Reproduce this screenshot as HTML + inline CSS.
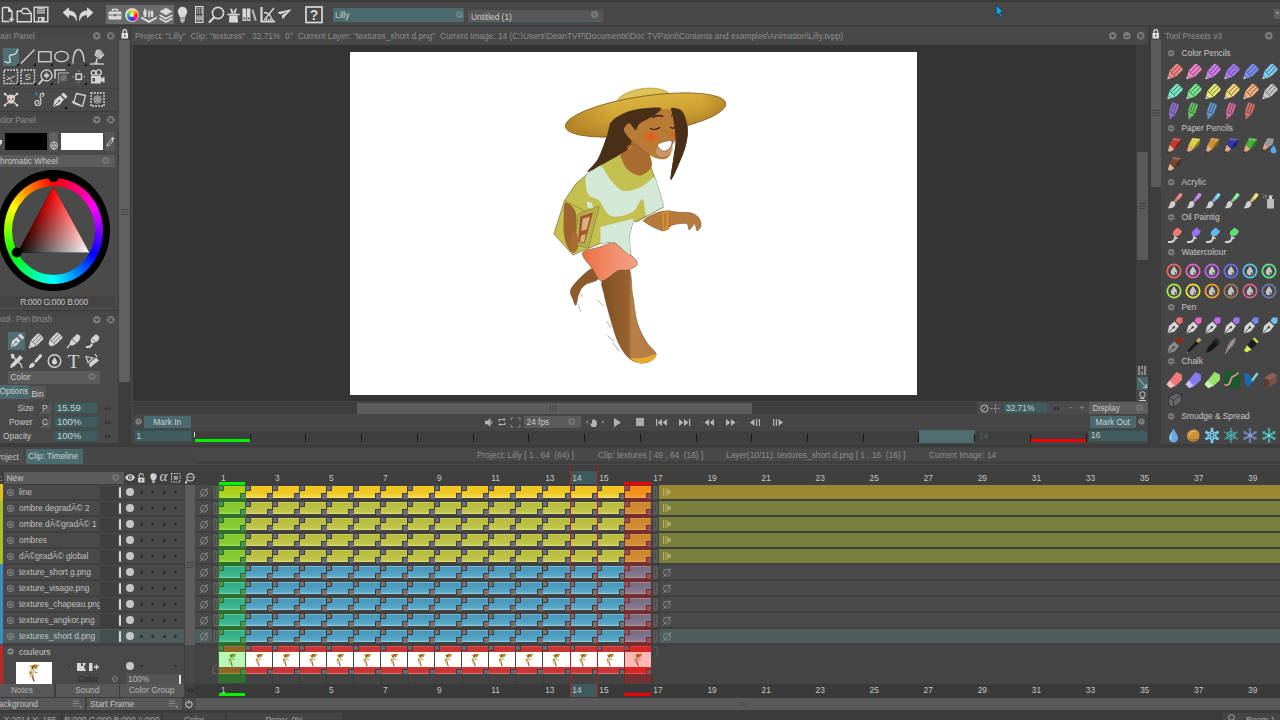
<!DOCTYPE html>
<html lang="en"><head><meta charset="utf-8"><title>TVPaint Animation - Lilly</title>
<style>
*{box-sizing:border-box;margin:0;padding:0}
html,body{width:1280px;height:720px;overflow:hidden;background:#474747;}
body{position:relative;font-family:"Liberation Sans",sans-serif;font-size:9px;color:#c4c4c4;line-height:1}
.a{position:absolute}
.t{position:absolute;white-space:nowrap;font-size:8.35px;line-height:11px;color:#c6c6c6}
.g{color:#8c8c8c}
svg{position:absolute;overflow:visible}
.c{position:absolute;width:26.100px;height:12.300px}
.cy{background:linear-gradient(#f7d23a 0,#f2c31c 1.500px,#efc824 60%,#f3d648 90%,#fbea78 100%)}
.co{background:linear-gradient(#dcdc5c 0,#b6bb3e 1.500px,#c2c64c 85%,#e6e87e 100%)}
.cb{background:linear-gradient(#92d2ea 0,#4896b8 1.500px,#58a8c8 85%,#a2daee 100%)}
.n1,.n2{position:absolute;display:block;width:5.500px;height:5.500px;border:1px solid #3d3d3d;background:#6e6b78}
.cb .n1,.cb .n2{background:#77706e}
.n1{left:-.500px;top:-.500px;border-left:0;border-top:0}.n2{right:-.500px;bottom:-.500px;border-right:0;border-bottom:0}
.cc{position:absolute;top:646.200px;width:26.100px;height:27.600px;background:linear-gradient(#e46a6a 0,#c93434 1.200px,#c93434 5.500px,#fff 5.500px,#fff 21.500px,#c93434 21.500px,#c93434 26.400px,#e88 100%)}
.cc .n1,.cc .n2{background:#6a6a70}
</style></head>
<body>
<!-- top toolbar -->
<div class="a" style="left:0px;top:0px;width:1280px;height:27px;background:#484848;"></div>
<div class="a" style="left:0px;top:0px;width:1280px;height:2px;background:#3b3b3b;"></div>
<div class="a" style="left:0px;top:25px;width:1280px;height:2px;background:#3d3d3d;"></div>
<div class="a" style="left:106px;top:5px;width:68px;height:19px;background:#6a6a6a;"></div>
<svg style="left:1px;top:6px" width="13" height="17" viewBox="0 0 13 17"><path d="M1.5 1.5h6l3.5 4v6.5M8.5 15.500h-7v-14" fill="none" stroke="#d9d9d9" stroke-width="1.4"/><path d="M7 1.500v4.500h4z" fill="#d9d9d9"/><path d="M10.5 11v5M8 13.500h5" stroke="#d9d9d9" stroke-width="1.6"/></svg>
<svg style="left:16px;top:7px" width="16" height="16" viewBox="0 0 16 16"><path d="M1.200 14.800v-10.600h3.800l2.300-2.700h3.700l4.300 5v8.300z" fill="none" stroke="#d9d9d9" stroke-width="1.400" stroke-linejoin="miter"/><path d="M5 4.200l2.200 2.500h7.500" fill="none" stroke="#d9d9d9" stroke-width="1.200"/></svg>
<svg style="left:33px;top:6px" width="16" height="17" viewBox="0 0 16 17"><rect x="1.2" y="1.2" width="13.600" height="14.600" fill="none" stroke="#d9d9d9" stroke-width="1.4"/><rect x="4" y="2" width="8" height="5.500" fill="#d9d9d9" opacity=".8"/><path d="M4 3.500h8M4 5.500h8" stroke="#555" stroke-width=".7"/><rect x="5" y="11" width="6.500" height="5" fill="#d9d9d9"/><rect x="6.200" y="12" width="2" height="3" fill="#484848"/></svg>
<svg style="left:62px;top:7px" width="16" height="15" viewBox="0 0 16 15"><path d="M.6 5.500L7 .3v3.200c5.500 0 8.800 4 7.600 11.300c-1.300-4.800-3.600-6.800-7.600-6.600v3.300z" fill="#d9d9d9"/></svg>
<svg style="left:78px;top:7px" width="16" height="15" viewBox="0 0 16 15"><path d="M.6 5.500L7 .3v3.200c5.500 0 8.800 4 7.600 11.300c-1.300-4.800-3.600-6.800-7.600-6.600v3.300z" fill="#d9d9d9" transform="translate(16,0) scale(-1,1)"/></svg>
<svg style="left:108px;top:8px" width="14" height="12" viewBox="0 0 14 12"><rect x=".5" y="3.500" width="13" height="8" rx="1" fill="#d9d9d9"/><path d="M4.500 3.500v-2h5v2" fill="none" stroke="#d9d9d9" stroke-width="1.300"/><path d="M.5 7h13" stroke="#6a6a6a" stroke-width="1"/><rect x="6" y="6" width="2" height="2.400" fill="#6a6a6a"/></svg>
<div class="a" style="left:125px;top:8px;width:14px;height:14px;border-radius:50%;background:#d9d9d9"></div>
<div class="a" style="left:126.500px;top:9.500px;width:11px;height:11px;border-radius:50%;background:conic-gradient(#ffe000,#ff8a00,#ff2020,#d820b0,#6a20c0,#2060e0,#20c090,#80e020,#ffe000)"></div>
<div class="a" style="left:130px;top:13px;width:4px;height:4px;border-radius:50%;background:#eee"></div>
<svg style="left:141px;top:7px" width="16" height="16" viewBox="0 0 16 16"><path d="M4 1l1.800 4l-.6 5h-2.400l-.6-5zM11 2.500l1.500 3.500l-.5 4h-2l-.6-4zM7.300 3.500h1.600v7h-1.600z" fill="#d9d9d9"/><path d="M0 9.500l8 4l8-4v2l-8 4.500l-8-4.500z" fill="#d9d9d9"/></svg>
<svg style="left:159px;top:7px" width="14" height="16" viewBox="0 0 14 16"><path d="M7 .8l6.500 3.700l-6.500 3.700l-6.500-3.700z" fill="#d9d9d9"/><path d="M.5 8l6.500 3.700l6.500-3.700M.5 11.300l6.500 3.700l6.500-3.700" fill="none" stroke="#d9d9d9" stroke-width="1.700"/></svg>
<svg style="left:177px;top:6px" width="11" height="17" viewBox="0 0 11 17"><path d="M5.500 .8a4.700 4.700 0 0 1 4.700 4.700c0 2.500-1.800 3.300-2 6h-5.400c-.2-2.700-2-3.500-2-6a4.700 4.700 0 0 1 4.700-4.700z" fill="#d9d9d9"/><path d="M3 12.800h5M3.300 14.600h4.400" stroke="#d9d9d9" stroke-width="1.300"/><rect x="4.300" y="15.500" width="2.400" height="1.200" fill="#d9d9d9"/></svg>
<svg style="left:195px;top:6px" width="9" height="17" viewBox="0 0 9 17"><rect x=".6" y=".6" width="7.300" height="15.800" fill="none" stroke="#d9d9d9" stroke-width="1.200"/><path d="M2 2.800h5M2 4.800h5M2 6.800h5" stroke="#d9d9d9" stroke-width="1.100" stroke-dasharray="1.100 .8"/><circle cx="4.250" cy="12" r="2.300" fill="none" stroke="#d9d9d9" stroke-width="1"/><path d="M4.250 10.500v3M2.800 12h3" stroke="#d9d9d9" stroke-width=".8"/></svg>
<svg style="left:208px;top:6px" width="17" height="17" viewBox="0 0 17 17"><circle cx="10" cy="7" r="5.600" fill="none" stroke="#d9d9d9" stroke-width="1.600"/><path d="M6 11.500l-4.500 4.500" stroke="#d9d9d9" stroke-width="2.200" stroke-linecap="round"/></svg>
<svg style="left:227px;top:7px" width="13" height="16" viewBox="0 0 13 16"><path d="M2.500 8.500h8l.6 7h-9.200z" fill="#d9d9d9"/><path d="M.3 7.500h12.400" stroke="#d9d9d9" stroke-width="1.500"/><path d="M4.500 6.500l-1.500-5.500l2.500 1.500l1 4zM8.500 6.500l1.500-5.500l-2.500 1.500l-1 4z" fill="#d9d9d9"/></svg>
<svg style="left:242px;top:8px" width="16" height="14" viewBox="0 0 16 14"><rect x=".5" y=".5" width="3.600" height="12.500" fill="#d9d9d9"/><rect x="4.800" y=".5" width="3.600" height="12.500" fill="#d9d9d9"/><path d="M9.500 2l2-.6l3.300 11l-2 .6z" fill="#d9d9d9" opacity=".75"/><rect x="1.300" y="9.500" width="2" height="2" fill="#555"/><rect x="5.600" y="9.500" width="2" height="2" fill="#555"/></svg>
<svg style="left:260px;top:6px" width="16" height="17" viewBox="0 0 16 17"><path d="M1.500 1v14.500h13.500" fill="none" stroke="#d9d9d9" stroke-width="2.200"/><path d="M4 6.500c4 0 7.500 3 7.500 7" fill="none" stroke="#d9d9d9" stroke-width="1.300"/><path d="M5 13l9-11" stroke="#d9d9d9" stroke-width="1.400"/><path d="M4 13.500h10" stroke="#d9d9d9" stroke-width="1.500" stroke-dasharray="1.200 .8"/></svg>
<svg style="left:277px;top:9px" width="15" height="11" viewBox="0 0 15 11"><path d="M.3 3.200l14.400-2.900l-9.200 9.700l-.5-3.800l6-4l-7.800 3.200z" fill="#d9d9d9"/><path d="M5.500 10l2.500-2l-2.700-1.500z" fill="#d9d9d9" opacity=".7"/></svg>
<svg style="left:305px;top:6px" width="18" height="17" viewBox="0 0 18 17"><rect x="1" y="1" width="16" height="15.500" fill="none" stroke="#d9d9d9" stroke-width="1.700"/><text x="9" y="14" font-family="Liberation Sans, sans-serif" font-weight="bold" font-size="14" fill="#d9d9d9" text-anchor="middle">?</text></svg>
<div class="a" style="left:332.5px;top:8px;width:131.5px;height:13.5px;background:#4b6a6d;"></div>
<div class="t" style="left:335px;top:10px;color:#c9d2d2;">Lilly</div>
<div class="a" style="left:468px;top:10px;width:135px;height:11.5px;background:#575757;border-bottom:1px solid #4b6a6d"></div>
<div class="t" style="left:471px;top:11.5px;color:#cfcfcf;">Untitled (1)</div>
<svg style="left:455.5px;top:10.5px" width="7" height="7" viewBox="0 0 7 7"><circle cx="3.500" cy="3.500" r="3.500" fill="#6e8587"/><path d="M2 2l3 3M5 2l-3 3" stroke="#4b6a6d" stroke-width="1"/></svg>
<svg style="left:591.0px;top:10.5px" width="7" height="7" viewBox="0 0 7 7"><circle cx="3.500" cy="3.500" r="3.500" fill="#7b7b7b"/><path d="M2 2l3 3M5 2l-3 3" stroke="#575757" stroke-width="1"/></svg>
<div class="a" style="left:1274px;top:8.5px;width:6px;height:10.5px;background:#5e5e5e;"></div>
<svg style="left:1275px;top:12px" width="5" height="4" viewBox="0 0 5 4"><path d="M0 0h5l-2.500 3z" fill="#8a8a8a"/></svg>
<svg style="left:995px;top:4px" width="10" height="15" viewBox="0 0 10 15"><path d="M1.200 1l7.300 7.300h-3.200l1.800 4.200l-1.700.8l-1.800-4.300l-2.400 2.200z" fill="#19a7e6" stroke="#0d3b52" stroke-width=".8"/></svg>
<!-- left panel -->
<div class="a" style="left:0px;top:27px;width:118.5px;height:420px;background:#4a4a4a;"></div>
<div class="a" style="left:118.5px;top:27px;width:11.5px;height:420px;background:#484848;"></div>
<div class="a" style="left:119px;top:40px;width:11px;height:342px;background:#5f5f5f;"></div>
<div class="a" style="left:119px;top:382px;width:11px;height:65px;background:#3d3d3d;"></div>
<div class="a" style="left:130px;top:27px;width:1px;height:420px;background:#3a3a3a;"></div>
<div class="a" style="left:131px;top:27px;width:1.5px;height:420px;background:#464646;"></div>
<div class="a" style="left:118px;top:27px;width:1px;height:420px;background:#3e3e3e;"></div>
<div class="a" style="left:0px;top:27px;width:118.5px;height:18px;background:linear-gradient(#464646,#4b4b4b);border-top:1px solid #3c3c3c"></div><div class="t" style="left:0px;top:30.5px;color:#8e8e8e;font-size:8.35px;">ain Panel</div>
<svg style="left:93.2px;top:31.7px" width="7.6" height="7.6" viewBox="0 0 7.6 7.6"><circle cx="3.8" cy="3.8" r="3.8" fill="#7a7a7a"/><path d="M1.5 2.8h4.600l-2.300 2.800z" fill="#474747"/></svg>
<svg style="left:107.2px;top:31.7px" width="7.6" height="7.6" viewBox="0 0 7.6 7.6"><circle cx="3.8" cy="3.8" r="3.8" fill="#7a7a7a"/><path d="M1.9999999999999998 1.9999999999999998l3.600 3.600M5.6 1.9999999999999998l-3.600 3.600" stroke="#474747" stroke-width="1.200"/></svg>
<svg style="left:120.5px;top:29px" width="8" height="10" viewBox="0 0 8 10"><rect x=".5" y="4" width="6.500" height="5.500" fill="#e0e0e0"/><path d="M2 4v-1.500a1.800 1.800 0 0 1 3.600 0v1.500" fill="none" stroke="#e0e0e0" stroke-width="1.200"/><rect x="3.200" y="5.500" width="1.200" height="2.200" fill="#444"/></svg>
<svg style="left:121px;top:208.5px" width="8" height="7" viewBox="0 0 8 7"><path d="M0 .5h8M0 3h8M0 5.500h8" stroke="#454545" stroke-width=".8"/></svg>
<div class="a" style="left:2.5px;top:48px;width:16.5px;height:17.5px;background:#4f6f72;"></div>
<svg style="left:3px;top:48px" width="16" height="17" viewBox="0 0 16 17"><path d="M2 13.500c2.500 2 5.500 1.500 5-1.500c-.5-2.500-1.500-4 .5-5c2-.8 3.500.3 5-1.200c1.200-1.200 1.700-2.500 2-4" fill="none" stroke="#d4d4d4" stroke-width="1.500" stroke-linecap="round"/></svg>
<svg style="left:20px;top:48px" width="16" height="17" viewBox="0 0 16 17"><path d="M1 15.500l13.500-14" stroke="#d4d4d4" stroke-width="1.300"/></svg>
<svg style="left:38px;top:51px" width="14" height="12" viewBox="0 0 14 12"><rect x=".7" y=".7" width="12.300" height="10" fill="none" stroke="#d4d4d4" stroke-width="1.300"/></svg>
<svg style="left:54px;top:50px" width="16" height="13" viewBox="0 0 16 13"><ellipse cx="7.600" cy="6.500" rx="6.800" ry="5.200" fill="none" stroke="#d4d4d4" stroke-width="1.300"/></svg>
<svg style="left:71px;top:48px" width="16" height="17" viewBox="0 0 16 17"><path d="M1.800 14c.5-8 3-12.500 5.700-12.500s5.200 4.500 5.700 12.500" fill="none" stroke="#d4d4d4" stroke-width="1.300"/><circle cx="1.800" cy="14.800" r="1" fill="none" stroke="#d4d4d4" stroke-width=".6"/><circle cx="7" cy="1.500" r=".9" fill="#8aa"/></svg>
<svg style="left:90px;top:48px" width="15" height="18" viewBox="0 0 15 18"><path d="M6.200 2l3.800-.6l4.400 5.600l-4.400 4.400l-5.600-4.400z" fill="#d4d4d4"/><path d="M7 3.500l5 5M9 2.500l4 4.500M5.500 5.500l5 4.500" stroke="#4a4a4a" stroke-width=".6"/><path d="M6.900 10.500l-.7 4.500" stroke="#d4d4d4" stroke-width="1.500"/><path d="M0 16h14" stroke="#d4d4d4" stroke-width="1.300"/><path d="M3.500 15.500c.5-1.800 4.500-1.800 5 0z" fill="#d4d4d4"/></svg>
<svg style="left:16px;top:63px" width="3" height="3" viewBox="0 0 3 3"><path d="M3 0v3h-3z" fill="#111"/></svg>
<svg style="left:33px;top:63px" width="3" height="3" viewBox="0 0 3 3"><path d="M3 0v3h-3z" fill="#111"/></svg>
<svg style="left:50px;top:63px" width="3" height="3" viewBox="0 0 3 3"><path d="M3 0v3h-3z" fill="#111"/></svg>
<svg style="left:67px;top:63px" width="3" height="3" viewBox="0 0 3 3"><path d="M3 0v3h-3z" fill="#111"/></svg>
<svg style="left:84px;top:63px" width="3" height="3" viewBox="0 0 3 3"><path d="M3 0v3h-3z" fill="#111"/></svg>
<svg style="left:3px;top:69px" width="16" height="16" viewBox="0 0 16 16"><rect x="1" y="1" width="13.5" height="13.5" fill="none" stroke="#d4d4d4" stroke-width="1.400" stroke-dasharray="2 1"/><path d="M3 11l9-4M4.500 7.500l5 5.500" stroke="#d4d4d4" stroke-width="1"/></svg>
<svg style="left:20px;top:69px" width="16" height="16" viewBox="0 0 16 16"><rect x="1" y="1" width="13.5" height="13.5" fill="none" stroke="#d4d4d4" stroke-width="1.400" stroke-dasharray="2 1"/><text x="7.800" y="11" font-family="Liberation Sans,sans-serif" font-size="9" fill="#d4d4d4" text-anchor="middle">S</text></svg>
<svg style="left:38px;top:69px" width="15" height="16" viewBox="0 0 15 16"><circle cx="8.500" cy="6.500" r="5.500" fill="none" stroke="#d4d4d4" stroke-width="1.300"/><path d="M8.500 3.800v5.400M5.800 6.500h5.400" stroke="#d4d4d4" stroke-width="1.800"/><path d="M4.500 10.800l-3.500 4" stroke="#d4d4d4" stroke-width="1.800" stroke-linecap="round"/></svg>
<svg style="left:54px;top:69px" width="16" height="16" viewBox="0 0 16 16"><path d="M1 9.500v-8.500h10.500" fill="none" stroke="#d4d4d4" stroke-width="1.500"/><path d="M4.500 14.500v-10.500h10.500" fill="none" stroke="#9a9a9a" stroke-width="1.300"/><rect x="6.500" y="6" width="6" height="6" fill="#777"/><path d="M6.500 6l6 6" stroke="#555" stroke-width=".8"/></svg>
<svg style="left:71px;top:69px" width="16" height="16" viewBox="0 0 16 16"><rect x="5" y="5" width="5.500" height="5.500" fill="none" stroke="#d4d4d4" stroke-width="1.400"/><path d="M7.750 .8l1.800 2h-3.600zM7.750 14.700l1.800-2h-3.600zM.8 7.750l2-1.800v3.600zM14.700 7.750l-2-1.800v3.600z" fill="#808080"/></svg>
<svg style="left:90px;top:69px" width="15" height="16" viewBox="0 0 15 16"><circle cx="3.500" cy="3.800" r="2.300" fill="none" stroke="#d4d4d4" stroke-width="1.300"/><circle cx="8.700" cy="3.500" r="2.600" fill="none" stroke="#d4d4d4" stroke-width="1.300"/><rect x="1" y="7" width="10" height="7.500" fill="#d4d4d4"/><path d="M11 9.500l3.500-2v6.500l-3.500-2z" fill="#d4d4d4"/><rect x="2.500" y="9" width="2.500" height="3.500" fill="#555"/></svg>
<svg style="left:16px;top:82px" width="3" height="3" viewBox="0 0 3 3"><path d="M3 0v3h-3z" fill="#111"/></svg>
<svg style="left:33px;top:82px" width="3" height="3" viewBox="0 0 3 3"><path d="M3 0v3h-3z" fill="#111"/></svg>
<svg style="left:50px;top:82px" width="3" height="3" viewBox="0 0 3 3"><path d="M3 0v3h-3z" fill="#111"/></svg>
<svg style="left:84px;top:82px" width="3" height="3" viewBox="0 0 3 3"><path d="M3 0v3h-3z" fill="#111"/></svg>
<div class="a" style="left:0px;top:88px;width:118.5px;height:1px;background:#444;"></div>
<svg style="left:3px;top:92px" width="16" height="16" viewBox="0 0 16 16"><path d="M2 2l12 11M14 2l-12 11" stroke="#d4d4d4" stroke-width="1.300"/><circle cx="2" cy="2" r="1.300" fill="#d4d4d4"/><circle cx="14" cy="2" r="1.300" fill="#d4d4d4"/><circle cx="2" cy="13.300" r="1.300" fill="#d4d4d4"/><circle cx="14" cy="13.300" r="1.300" fill="#d4d4d4"/><path d="M4 6.500a4 4 0 0 1 8 0c0 2-1 2.500-1.500 3v2h-5v-2c-.5-.5-1.500-1-1.500-3z" fill="#d4d4d4"/><circle cx="6.300" cy="7.300" r="1" fill="#e04040"/><circle cx="9.700" cy="7.300" r="1" fill="#e04040"/></svg>
<svg style="left:33px;top:92px" width="14" height="16" viewBox="0 0 14 16"><path d="M9.500 4.500c2.500-2 1-4-1-3c-2 1-1.500 3.500-1 5.500c.7 3 1 6.500-2.500 6.500c-3.500 0-4-4.500-1-5c2-.3 3 2.500 1 3" fill="none" stroke="#d4d4d4" stroke-width="1.200" stroke-linecap="round"/><circle cx="3.500" cy="1.800" r="1.200" fill="#3a8ec8"/></svg>
<svg style="left:52px;top:92px" width="16" height="16" viewBox="0 0 16 16"><path d="M1 15l1.500-7l5.500-4.500l4 4l-4.500 5.500z" fill="#d4d4d4"/><path d="M9 2.500l2.500-2l4 4l-2 2.500z" fill="#d4d4d4"/><path d="M1.500 14.500l5-5" stroke="#4c4c4c" stroke-width=".9"/><circle cx="7" cy="9" r="1" fill="#4c4c4c"/></svg>
<svg style="left:64px;top:106px" width="3" height="3" viewBox="0 0 3 3"><path d="M3 0v3h-3z" fill="#111"/></svg>
<svg style="left:71px;top:92px" width="16" height="16" viewBox="0 0 16 16"><path d="M5.500 1.500l9 2l-3 11l-9-3.500z" fill="none" stroke="#d4d4d4" stroke-width="1.300"/><path d="M1 9.500l8.500 4" stroke="#d4d4d4" stroke-width="1.600"/></svg>
<svg style="left:90px;top:92px" width="15" height="16" viewBox="0 0 15 16"><rect x="1" y="1" width="13" height="13" fill="none" stroke="#d4d4d4" stroke-width="1.400" stroke-dasharray="2 1"/><circle cx="7.500" cy="7.500" r="4.300" fill="#8a8a8a"/><path d="M4.500 4.500l6 6M10.500 4.500l-6 6" stroke="#a8a8a8" stroke-width="1"/></svg>
<div class="a" style="left:0px;top:111px;width:118.5px;height:18px;background:linear-gradient(#464646,#4b4b4b);border-top:1px solid #3c3c3c"></div><div class="t" style="left:0px;top:114.5px;color:#8e8e8e;font-size:8.35px;"><span style="letter-spacing:-.2px">olor Panel</span></div>
<svg style="left:93.2px;top:115.7px" width="7.6" height="7.6" viewBox="0 0 7.6 7.6"><circle cx="3.8" cy="3.8" r="3.8" fill="#7a7a7a"/><path d="M1.5 2.8h4.600l-2.300 2.800z" fill="#474747"/></svg>
<svg style="left:107.2px;top:115.7px" width="7.6" height="7.6" viewBox="0 0 7.6 7.6"><circle cx="3.8" cy="3.8" r="3.8" fill="#7a7a7a"/><path d="M1.9999999999999998 1.9999999999999998l3.600 3.600M5.6 1.9999999999999998l-3.600 3.600" stroke="#474747" stroke-width="1.200"/></svg>
<svg style="left:-1px;top:140px" width="4" height="6" viewBox="0 0 4 6"><path d="M0 0h3v3l-1.500 2.500z" fill="#d4d4d4"/></svg>
<div class="a" style="left:5px;top:133px;width:42px;height:17px;background:#000;"></div>
<div class="a" style="left:49px;top:132px;width:9px;height:19px;background:#5c5c5c;"></div>
<svg style="left:50px;top:133px" width="7" height="7" viewBox="0 0 7 7"><circle cx="3.500" cy="3.500" r="3.300" fill="#686868"/><path d="M1.500 2.800h4l-2 2.300z" fill="#585858"/></svg>
<svg style="left:49.5px;top:141px" width="8" height="9" viewBox="0 0 8 9"><ellipse cx="4" cy="4.500" rx="3.400" ry="3.600" fill="none" stroke="#d4d4d4" stroke-width=".9"/><path d="M4 .5v8" stroke="#d4d4d4" stroke-width=".9"/><path d="M1.300 4.500l1.700-1.500v3zM6.700 4.500l-1.700-1.500v3z" fill="#d4d4d4"/></svg>
<div class="a" style="left:61px;top:133px;width:42px;height:17px;background:#fff;"></div>
<div class="a" style="left:105px;top:132px;width:10px;height:19px;background:#585858;"></div>
<svg style="left:105.5px;top:136px" width="9" height="11" viewBox="0 0 9 11"><path d="M1 10l.5-2l4-4.500l1.500 1.500l-4 4.500z" fill="none" stroke="#d4d4d4" stroke-width=".9"/><path d="M5 2.500l1.500-1.800l2 2l-1.700 1.600z" fill="#d4d4d4"/></svg>
<div class="a" style="left:0px;top:155px;width:114.5px;height:11.5px;background:#5d5d5d;"></div>
<div class="t" style="left:0px;top:155.5px;color:#c8c8c8;font-size:8.35px;">hromatic Wheel</div>
<svg style="left:102.4px;top:156.9px" width="7.2" height="7.2" viewBox="0 0 7.2 7.2"><circle cx="3.6" cy="3.6" r="3.6" fill="#747474"/><path d="M1.3000000000000003 2.6h4.600l-2.300 2.800z" fill="#5d5d5d"/></svg>
<div class="a" style="left:-3.1000000000000014px;top:170.0px;width:113.200px;height:121.200px;border-radius:50%;background:#000"></div>
<div class="a" style="left:3.8999999999999986px;top:177.6px;width:99.200px;height:106px;border-radius:50%;background:conic-gradient(#ff0000,#ff00ff 16.700%,#0000ff 33.300%,#00ffff 50%,#00ff00 66.700%,#ffff00 83.300%,#ff0000)"></div>
<div class="a" style="left:12.0px;top:186.3px;width:83px;height:88.3500px;border-radius:50%;background:#4a4a4a"></div>
<svg style="left:0;top:0" width="118" height="300" viewBox="0 0 118 300"><defs>
<linearGradient id="tb" gradientUnits="userSpaceOnUse" x1="17.70" y1="252.60" x2="73.02" y2="222.59"><stop offset="0" stop-color="#000"/><stop offset="1" stop-color="#ff0000"/></linearGradient>
<linearGradient id="tw" gradientUnits="userSpaceOnUse" x1="33.98" y1="222.59" x2="89.30" y2="252.60"><stop offset="0" stop-color="#000"/><stop offset="1" stop-color="#00ffff"/></linearGradient></defs>
<g style="isolation:isolate"><path d="M53.5 186.6L17.700000000000003 252.6L89.3 252.6z" fill="url(#tb)"/><path d="M53.5 186.6L17.700000000000003 252.6L89.3 252.6z" fill="url(#tw)" style="mix-blend-mode:screen"/></g>
<circle cx="53.5" cy="177.200" r="5" fill="#000"/><circle cx="16.700" cy="252.500" r="5" fill="#000"/></svg>
<div class="a" style="left:0px;top:295.5px;width:114px;height:11.5px;background:#444;"></div>
<div class="t" style="left:0px;top:296.5px;color:#c2c2c2;font-size:8.35px;width:108px;text-align:center;letter-spacing:-.22px">R:000 G:000 B:000</div>
<div class="a" style="left:0px;top:310px;width:118.5px;height:18px;background:linear-gradient(#464646,#4b4b4b);border-top:1px solid #3c3c3c"></div><div class="t" style="left:0px;top:313.5px;color:#8e8e8e;font-size:8.35px;"><span style="letter-spacing:-.34px">ool : Pen Brush</span></div>
<svg style="left:93.2px;top:315.7px" width="7.6" height="7.6" viewBox="0 0 7.6 7.6"><circle cx="3.8" cy="3.8" r="3.8" fill="#7a7a7a"/><path d="M1.5 2.8h4.600l-2.300 2.800z" fill="#474747"/></svg>
<svg style="left:107.2px;top:315.7px" width="7.6" height="7.6" viewBox="0 0 7.6 7.6"><circle cx="3.8" cy="3.8" r="3.8" fill="#7a7a7a"/><path d="M1.9999999999999998 1.9999999999999998l3.600 3.600M5.6 1.9999999999999998l-3.600 3.600" stroke="#474747" stroke-width="1.200"/></svg>
<div class="a" style="left:8px;top:332px;width:16.5px;height:18px;background:#4f6f72;"></div>
<svg style="left:8.5px;top:333px" width="16" height="16" viewBox="0 0 16 16"><path d="M1.500 14.500l1.500-6.500l5-4l3.500 3.500l-4 5z" fill="#d4d4d4"/><path d="M9 2.500l2.300-2l4 4l-2 2.300z" fill="#d4d4d4"/><path d="M2 14l4.500-4.500" stroke="#4f6f72" stroke-width=".9"/><circle cx="7" cy="9" r="1" fill="#4f6f72"/></svg>
<svg style="left:28px;top:333px" width="16" height="16" viewBox="0 0 16 16"><path d="M0.50 15.50L1.25 12.33L3.65 14.68z" fill="#d4d4d4"/><path d="M1.46 12.12L2.97 7.24L9.29 0.78L11.05 0.40L15.35 4.60L15.01 6.37L8.70 12.84L3.86 14.46z" fill="#d4d4d4"/><path d="M5.50 8.32L12.17 1.49M7.56 10.33L14.23 3.51" stroke="#4a4a4a" stroke-width=".9" opacity=".85" fill="none"/><path d="M2.97 7.24L8.70 12.84" stroke="#4a4a4a" stroke-width=".9" opacity=".85" fill="none"/></svg>
<svg style="left:47px;top:332px" width="16" height="16" viewBox="0 0 16 16"><path d="M0 0" fill="#d4d4d4"/><path d="M1.46 12.12L2.97 7.24L9.29 0.78L11.05 0.40L15.35 4.60L15.01 6.37L8.70 12.84L3.86 14.46z" fill="#d4d4d4"/><path d="M5.50 8.32L12.17 1.49M7.56 10.33L14.23 3.51" stroke="#4a4a4a" stroke-width=".9" opacity=".85" fill="none"/><path d="M2.97 7.24L8.70 12.84" stroke="#4a4a4a" stroke-width=".9" opacity=".85" fill="none"/></svg>
<svg style="left:66px;top:333px" width="16" height="16" viewBox="0 0 16 16"><path d="M1 15l3.500-4" stroke="#d4d4d4" stroke-width="1.200"/><path d="M4 11.500c-1-2 1-5 4-7.500l3-3l3.500 2l-1 4c-2.500 3.500-6 5.500-8 5.500z" fill="#d4d4d4"/><path d="M6 6l4 4" stroke="#4a4a4a" stroke-width=".8"/></svg>
<svg style="left:85px;top:333px" width="16" height="16" viewBox="0 0 16 16"><path d="M6 9c-1-2 .5-4.500 3-6l2-2l3.500 3l-1 3c-2 2.500-5 3-6.500 3z" fill="#d4d4d4"/><path d="M7 10.500c-.5 3-2.500 4-6 3.500" fill="none" stroke="#d4d4d4" stroke-width="2"/><path d="M7.500 6l3.500 3.500" stroke="#4a4a4a" stroke-width=".8"/></svg>
<svg style="left:8.5px;top:353px" width="16" height="16" viewBox="0 0 16 16"><path d="M1 15l1-3.500l9-9.500l3 3l-9.500 9z" fill="#d4d4d4"/><path d="M1.500 1.500l3-1l1.500 4l-3 1.500z" fill="#d4d4d4"/><path d="M5 5l7 6.500c1 1.500 0 3 1.500 3.500" fill="none" stroke="#d4d4d4" stroke-width="1.200"/></svg>
<svg style="left:28px;top:353px" width="16" height="16" viewBox="0 0 16 16"><path d="M1 15c0-3 1.500-5 4-5.500l2 2c-.5 2.500-3 3.500-6 3.500z" fill="#d4d4d4"/><path d="M6 8.500l5.500-7c1-1 3.500.5 2.500 2l-6 6.500z" fill="#d4d4d4"/></svg>
<svg style="left:47px;top:353px" width="15" height="16" viewBox="0 0 15 16"><circle cx="7.500" cy="8" r="6.300" fill="none" stroke="#d4d4d4" stroke-width="1.400"/><path d="M7.500 4c1.500 2.500 2.500 3.500 2.500 5a2.500 2.500 0 0 1-5 0c0-1.500 1-2.500 2.500-5z" fill="#d4d4d4"/></svg>
<svg style="left:66px;top:352px" width="15" height="18" viewBox="0 0 15 18"><text x="7.500" y="15.500" font-family="Liberation Serif,serif" font-size="19" fill="#d4d4d4" text-anchor="middle">T</text></svg>
<svg style="left:85px;top:353px" width="16" height="16" viewBox="0 0 16 16"><path d="M5 14.500l-1-4l7-6l3 3z" fill="#d4d4d4"/><path d="M1 3.500l7 1.500l-5 4.500z" fill="none" stroke="#d4d4d4" stroke-width="1.100"/><path d="M10 1l2 3" stroke="#d4d4d4" stroke-width="1.200"/></svg>
<div class="a" style="left:8px;top:371px;width:92px;height:12.5px;background:#5b5b5b;"></div>
<div class="t" style="left:10.5px;top:372px;color:#c8c8c8;font-size:8.35px;">Color</div>
<svg style="left:87.9px;top:373.4px" width="7.2" height="7.2" viewBox="0 0 7.2 7.2"><circle cx="3.6" cy="3.6" r="3.6" fill="#747474"/><path d="M1.3000000000000003 2.6h4.600l-2.300 2.800z" fill="#5b5b5b"/></svg>
<div class="a" style="left:0px;top:385px;width:28.5px;height:13.5px;background:#4b6a6d;"></div>
<div class="t" style="left:-0.5px;top:386px;color:#c9d2d2;font-size:8.35px;">Options</div>
<div class="a" style="left:29px;top:386px;width:17px;height:12.5px;background:#585858;"></div>
<div class="t" style="left:31.5px;top:388.5px;color:#cfcfcf;font-size:8.35px;">Bin</div>
<div class="t" style="left:17.5px;top:402.5px;color:#c6c6c6;font-size:8.35px;">Size</div>
<div class="t" style="left:9px;top:416.5px;color:#c6c6c6;font-size:8.35px;">Power</div>
<div class="t" style="left:3px;top:430.5px;color:#c6c6c6;font-size:8.35px;">Opacity</div>
<svg style="left:37px;top:402px" width="14" height="12" viewBox="0 0 14 12"><path d="M14 0v12h-13z" fill="#595959"/><path d="M0 12l12-11" stroke="#3c3c3c" stroke-width="1"/></svg>
<svg style="left:37px;top:416px" width="14" height="12" viewBox="0 0 14 12"><path d="M14 0v12h-13z" fill="#595959"/><path d="M0 12l12-11" stroke="#3c3c3c" stroke-width="1"/></svg>
<div class="t" style="left:42px;top:402.5px;color:#c6c6c6;font-size:8.35px;">P</div>
<div class="t" style="left:42px;top:416.5px;color:#c6c6c6;font-size:8.35px;">C</div>
<div class="a" style="left:54px;top:402px;width:43.5px;height:11.5px;background:#405c5f;border:1px solid #3a4f52"></div><div class="t" style="left:57px;top:401.5px;color:#c8d0d0;font-size:9.5px;">15.59</div>
<div class="a" style="left:54px;top:416px;width:43.5px;height:11.5px;background:#405c5f;border:1px solid #3a4f52"></div><div class="t" style="left:57px;top:415.5px;color:#c8d0d0;font-size:9.5px;">100%</div>
<div class="a" style="left:54px;top:430px;width:43.5px;height:11.5px;background:#405c5f;border:1px solid #3a4f52"></div><div class="t" style="left:57px;top:429.5px;color:#c8d0d0;font-size:9.5px;">100%</div>
<svg style="left:103.5px;top:405.5px" width="7" height="5" viewBox="0 0 7 5"><path d="M0 2.500l3-2.300v4.600zM7 2.500l-3-2.300v4.600z" fill="#333"/></svg>
<svg style="left:103.5px;top:419.5px" width="7" height="5" viewBox="0 0 7 5"><path d="M0 2.500l3-2.300v4.600zM7 2.500l-3-2.300v4.600z" fill="#333"/></svg>
<svg style="left:103.5px;top:433.5px" width="7" height="5" viewBox="0 0 7 5"><path d="M0 2.500l3-2.300v4.600zM7 2.500l-3-2.300v4.600z" fill="#333"/></svg>
<div class="a" style="left:0px;top:443px;width:118.5px;height:1.5px;background:#3e3e3e;"></div>
<!-- canvas window -->
<div class="a" style="left:132.5px;top:27px;width:1015.5px;height:18px;background:#484848;"></div>
<div class="t" style="left:135px;top:30.5px;color:#8e8e8e;font-size:8.35px;">Project: "Lilly"&nbsp; Clip: "textures"&nbsp;&nbsp; 32.71%&nbsp; 0°&nbsp; Current Layer: "textures_short d.png"&nbsp; Current Image: 14 (C:\Users\DeanTVP\Documents\Doc TVPaint\Contents and examples\Animation\Lilly.tvpp)</div>
<svg style="left:1109.2px;top:31.7px" width="7.6" height="7.6" viewBox="0 0 7.6 7.6"><circle cx="3.8" cy="3.8" r="3.8" fill="#7a7a7a"/><path d="M1.5 2.8h4.600l-2.300 2.800z" fill="#474747"/></svg>
<svg style="left:1123.2px;top:31.7px" width="7.6" height="7.6" viewBox="0 0 7.6 7.6"><circle cx="3.8" cy="3.8" r="3.8" fill="#7a7a7a"/><path d="M1.5999999999999996 4.6h4.400" stroke="#474747" stroke-width="1.200"/></svg>
<svg style="left:1137.2px;top:31.7px" width="7.6" height="7.6" viewBox="0 0 7.6 7.6"><circle cx="3.8" cy="3.8" r="3.8" fill="#7a7a7a"/><path d="M1.9999999999999998 1.9999999999999998l3.600 3.600M5.6 1.9999999999999998l-3.600 3.600" stroke="#474747" stroke-width="1.200"/></svg>
<div class="a" style="left:132.5px;top:45px;width:1003.5px;height:356px;background:#343434;"></div>
<div class="a" style="left:1136px;top:45px;width:12px;height:320px;background:#3c3c3c;"></div>
<div class="a" style="left:1136.5px;top:151.5px;width:11px;height:108.5px;background:#595959;"></div>
<svg style="left:1138.5px;top:203px" width="7" height="6" viewBox="0 0 7 6"><path d="M0 .5h7M0 3h7M0 5.500h7" stroke="#3c3c3c" stroke-width=".8"/></svg>
<div class="a" style="left:1148px;top:27px;width:2.5px;height:420px;background:#3c3c3c;"></div>
<div class="a" style="left:350px;top:52px;width:567px;height:343px;background:#ffffff;"></div>
<svg style="left:0;top:0" width="1280" height="720" viewBox="0 0 1280 720"><defs><linearGradient id="brim" x1="0" y1="0" x2="0" y2="1"><stop offset="0" stop-color="#d9b23f"/><stop offset=".5" stop-color="#cfa233"/><stop offset="1" stop-color="#b07f26"/></linearGradient><linearGradient id="brimx" x1="0" y1="0" x2="1" y2="0"><stop offset="0" stop-color="#a87824" stop-opacity=".75"/><stop offset=".3" stop-color="#a87824" stop-opacity="0"/><stop offset=".85" stop-color="#a87824" stop-opacity="0"/><stop offset="1" stop-color="#a87824" stop-opacity=".6"/></linearGradient><radialGradient id="blush" cx=".5" cy=".5" r=".5"><stop offset="0" stop-color="#e4581f" stop-opacity=".95"/><stop offset="1" stop-color="#e4581f" stop-opacity="0"/></radialGradient><linearGradient id="leg" x1="0" y1="0" x2="1" y2="0"><stop offset="0" stop-color="#7f4f22"/><stop offset=".5" stop-color="#99632f"/><stop offset=".55" stop-color="#b9804a"/><stop offset="1" stop-color="#b47a44"/></linearGradient><linearGradient id="shorts" x1="0" y1="0" x2="1" y2="0"><stop offset="0" stop-color="#ea6f3e"/><stop offset=".45" stop-color="#f08a66"/><stop offset="1" stop-color="#f3a184"/></linearGradient></defs><path d="M593.1 268.5C590.4 268.1 585.1 273.2 581.3 276.7C577.6 280.3 572.1 286.0 570.7 289.7C569.3 293.5 572.2 296.6 573.1 299.2C573.9 301.7 574.9 306.1 575.9 305.1C576.9 304.1 577.5 296.6 579.0 293.3C580.5 289.9 581.7 287.4 584.9 285.0C588.0 282.6 596.5 281.9 597.9 279.1C599.2 276.3 595.9 268.9 593.1 268.5z" fill="#8d5a2a" stroke="#5a4020" stroke-width=".5" stroke-linejoin="round"/><path d="M577.8 303.9l3 8M580.1 292.1l2 5" stroke="#777" stroke-width=".5" fill="none"/><path d="M614.4 115.6C609.3 119.3 609.4 129.4 606.7 136.7C603.9 143.9 601.0 153.0 597.8 158.9C594.6 164.7 586.6 170.9 587.3 171.8C588.1 172.7 597.5 167.0 602.2 164.4C606.9 161.9 611.1 159.4 615.6 156.7C620.0 153.9 625.9 151.9 628.9 147.8C631.9 143.7 631.9 137.8 633.3 132.2C634.8 126.7 640.9 117.2 637.8 114.4C634.6 111.7 619.6 111.9 614.4 115.6z" fill="#4a2f18" /><ellipse cx="643.500" cy="100.500" rx="27.500" ry="12" transform="rotate(-8 643.500 100.500)" fill="#dcc257" stroke="#8a6a20" stroke-width=".4"/><path d="M603.3 279.1C607.1 274.6 622.5 264.7 627.4 267.3C632.2 269.9 630.9 285.2 632.6 294.5C634.2 303.7 635.0 314.9 637.3 322.8C639.6 330.7 643.1 336.4 646.3 341.7C649.4 347.0 656.4 351.1 656.2 354.7C656.0 358.2 649.5 362.3 645.1 362.9C640.7 363.6 634.3 362.2 629.7 358.7C625.2 355.1 621.4 349.2 617.9 341.7C614.5 334.1 611.2 321.2 608.9 313.3C606.7 305.5 605.2 300.2 604.2 294.5C603.3 288.7 599.4 283.6 603.3 279.1z" fill="url(#leg)" stroke="#5a4020" stroke-width=".5" stroke-linejoin="round"/><path d="M630.9 358.7C631.3 357.7 639.8 358.5 643.9 357.7C648.0 357.0 654.3 353.7 655.7 354.2C657.1 354.7 654.5 359.0 652.2 360.6C649.8 362.1 645.1 363.7 641.5 363.4C638.0 363.1 630.5 359.6 630.9 358.7z" fill="#e9a92e" /><path d="M610.8 327.5l-4-6M614.4 341.7l-7-6M619.1 351.1l-6-8M603.8 306.3l-6-6" stroke="#8a6a4a" stroke-width=".6" fill="none"/><path d="M582.5 253.1C583.6 249.5 593.5 248.9 599.0 247.2C604.5 245.6 610.1 241.8 615.6 243.2C621.0 244.6 628.0 252.0 631.6 255.5C635.2 259.0 637.9 261.8 637.3 264.2C636.7 266.7 631.1 269.0 627.8 270.1C624.6 271.2 622.3 269.1 617.9 270.8C613.6 272.6 606.1 281.1 601.9 280.8C597.6 280.4 595.6 273.6 592.4 268.9C589.2 264.3 581.4 256.7 582.5 253.1z" fill="url(#shorts)" stroke="#5a4020" stroke-width=".5" stroke-linejoin="round"/><path d="M621.8 153.8L611.1 159.2L600.4 165.3L586.7 174.4L576.0 183.6L564.5 200.4L559.2 217.2L553.8 234.0L572.9 255.1L580.6 251.6L600.4 243.5L614.2 241.7L630.5 256.2L629.4 235.5L633.3 220.6L635.9 222.1L663.8 206.8L660.0 192.8L655.4 179.0L650.8 166.8L638.6 175.2L626.4 167.6z" fill="#c4c04f" stroke="#5a4020" stroke-width=".5" stroke-linejoin="round"/><clipPath id="sh"><path d="M621.8 153.8L611.1 159.2L600.4 165.3L586.7 174.4L576.0 183.6L564.5 200.4L559.2 217.2L553.8 234.0L572.9 255.1L580.6 251.6L600.4 243.5L614.2 241.7L630.5 256.2L629.4 235.5L633.3 220.6L635.9 222.1L663.8 206.8L660.0 192.8L655.4 179.0L650.8 166.8L638.6 175.2L626.4 167.6z"/></clipPath><g clip-path="url(#sh)"><path d="M586.4 175.7C588.4 171.0 596.3 165.4 600.4 166.2C604.5 167.0 607.3 176.4 611.1 180.6C614.9 184.7 618.2 189.9 623.3 190.9C628.4 192.0 636.2 188.8 641.7 186.7C647.1 184.6 652.4 174.9 656.2 178.3C660.0 181.6 666.0 200.3 664.6 206.8C663.2 213.3 651.5 218.5 647.8 217.2C644.1 215.9 645.0 200.1 642.4 199.2C639.9 198.3 637.7 209.1 632.5 211.9C627.3 214.7 616.7 217.9 611.1 216.0C605.5 214.1 602.7 204.0 598.9 200.4C595.1 196.8 590.3 198.4 588.2 194.3C586.1 190.2 584.3 180.3 586.4 175.7z" fill="#d3e8d6" /><path d="M600.4 227.1L615.7 223.0L633.3 218.4L633.7 220.6L629.7 235.5L631.0 256.9L614.2 241.7L600.4 243.5z" fill="#d3e8d6" /><path d="M586.7 201.2L592.0 202.7L593.1 208.8L587.6 207.7z" fill="#d3e8d6" /></g><path d="M564.5 200.7L585.4 211.4M635.9 221.8L663.4 207.3" stroke="#7a7a30" stroke-width=".6" fill="none"/><path d="M621.8 154.3Q629.4 169.9 650.1 167.6" stroke="#7a7a30" stroke-width=".6" fill="none" transform="translate(-1.500,2)"/><path d="M565.3 202.7C567.2 201.4 573.4 206.1 575.2 211.1C577.0 216.1 576.5 228.3 576.3 232.5C576.0 236.7 573.5 233.8 573.7 236.3C573.8 238.9 577.3 245.0 577.2 247.8C577.1 250.5 574.7 252.7 573.2 252.7C571.7 252.7 569.6 250.6 568.0 247.8C566.5 244.9 564.8 240.4 564.1 235.5C563.3 230.7 563.5 224.2 563.7 218.7C564.0 213.3 563.4 204.0 565.3 202.7z" fill="#9c6530" /><path d="M577.5 214.2L599.2 206.2L588.5 248.1L575.2 245.0z" fill="#b4b04a" stroke="#70702a" stroke-width=".5"/><path d="M580.2 216.5L593.1 212.3L584.5 243.5L578.1 242.0z" fill="#a4562a" /><path d="M582.8 218.7L590.0 216.6L586.7 229.4L581.3 231.0z" fill="#d8b080" /><path d="M581.3 235.5L585.9 234.0L583.9 242.4L579.8 241.4z" fill="#d8b080" /><path d="M572.9 232.5C574.1 231.5 576.7 233.0 577.5 235.5C578.3 238.1 578.6 244.9 577.8 247.8C577.0 250.6 574.1 253.7 572.9 252.7C571.7 251.6 570.6 245.0 570.6 241.7C570.6 238.3 571.8 233.5 572.9 232.5z" fill="#a86c35" /><path d="M645.1 218.9C647.8 216.9 657.1 212.4 662.8 211.3C668.5 210.2 674.6 212.0 679.3 212.3C684.0 212.6 687.9 212.1 691.1 213.0C694.3 213.9 697.0 215.6 698.7 217.7C700.3 219.8 701.3 223.3 701.0 225.5C700.8 227.7 698.1 230.9 697.0 230.7C696.0 230.5 696.0 224.2 694.7 224.1C693.4 223.9 690.6 229.8 689.2 229.8C687.9 229.7 689.2 224.4 686.4 223.6C683.6 222.8 676.6 223.8 672.7 225.0C668.8 226.2 667.2 231.0 662.8 230.7C658.4 230.4 649.2 225.1 646.3 223.1C643.3 221.2 642.3 220.9 645.1 218.9z" fill="#b67a3c" stroke="#5a4020" stroke-width=".5" stroke-linejoin="round"/><path d="M660.9 212.3L669.4 210.4L668.7 229.3L662.3 230.7z" fill="#d8902f" stroke="#8a5a20" stroke-width=".4"/><path d="M663.7 213.7L666.6 213.0L666.1 227.9L664.2 228.3z" fill="#b67a3c" /><path d="M620.6 152.7C620.6 156.4 622.9 162.7 624.9 166.0C626.8 169.4 629.7 171.4 632.5 172.9C635.3 174.4 638.5 176.1 641.7 175.2C644.8 174.3 650.0 170.4 651.4 167.3C652.8 164.1 651.7 160.5 650.1 156.1C648.4 151.7 645.1 144.1 641.7 140.8C638.2 137.5 632.2 135.7 629.4 136.3C626.6 136.8 626.3 141.1 624.9 143.9C623.4 146.6 620.6 149.1 620.6 152.7z" fill="#a86c30" /><path d="M644.4 111.1C650.4 110.4 667.7 108.0 673.3 110.0C679.0 112.0 677.9 119.4 678.2 123.3C678.5 127.2 675.3 131.1 675.1 133.3C675.0 135.6 677.8 134.8 677.3 136.7C676.9 138.5 673.4 141.5 672.2 144.4C671.0 147.4 671.5 152.0 670.0 154.4C668.5 156.9 666.5 158.7 663.3 158.9C660.2 159.1 655.4 157.8 651.1 155.6C646.9 153.3 641.3 148.3 637.8 145.6C634.3 142.8 632.3 141.5 630.0 138.9C627.7 136.3 624.4 132.8 624.0 130.0C623.6 127.2 625.9 123.0 627.8 122.2C629.7 121.5 633.9 126.9 635.6 125.6C637.2 124.3 636.3 116.9 637.8 114.4C639.3 112.0 638.5 111.9 644.4 111.1z" fill="#b97c36" stroke="#5a4020" stroke-width=".5" stroke-linejoin="round"/><ellipse cx="651.1" cy="136.7" rx="10" ry="7" fill="url(#blush)"/><ellipse cx="673.3" cy="134.4" rx="5" ry="4" fill="url(#blush)"/><ellipse cx="664.4" cy="150.0" rx="9" ry="6.500" fill="#dcae90" opacity=".55" transform="rotate(-25 664.4 150.0)"/><path d="M657.8 144.4C659.1 142.7 669.1 140.1 671.1 140.7C673.1 141.2 671.3 146.0 670.0 147.8C668.7 149.5 665.4 151.7 663.3 151.1C661.3 150.6 656.5 146.2 657.8 144.4z" fill="#ffffff" stroke="#6a3020" stroke-width=".5"/><path d="M650.0 128.2q5 3 10-1M670.0 127.3q4 2 7-1" stroke="#2a1808" stroke-width="1.100" fill="none"/><path d="M652.2 117.8q6-4 11-1M671.1 115.6q4-2 7 1" stroke="#2a1808" stroke-width="1.300" fill="none"/><circle cx="629.3" cy="147.3" r="1.600" fill="none" stroke="#e89020" stroke-width=".9"/><path d="M614.4 116.7C618.9 109.3 625.7 111.5 633.3 110.0C640.9 108.5 656.3 107.0 660.0 107.8C663.7 108.5 658.9 111.9 655.6 114.4C652.2 117.0 643.3 120.7 640.0 123.3C636.7 125.9 637.4 130.0 635.6 130.0C633.7 130.0 631.1 123.0 628.9 123.3C626.7 123.7 623.0 128.9 622.2 132.2C621.5 135.6 625.6 139.3 624.4 143.3C623.3 147.4 618.5 154.8 615.6 156.7C612.6 158.5 606.9 161.1 606.7 154.4C606.5 147.8 610.0 124.1 614.4 116.7z" fill="#4a2f18" /><path d="M671.6 107.8C673.1 106.9 679.6 108.0 682.2 111.3C684.9 114.7 687.0 122.1 687.6 127.8C688.1 133.5 687.3 139.3 685.8 145.6C684.2 151.9 680.7 159.9 678.2 165.6C675.7 171.3 671.5 180.9 670.7 179.8C669.9 178.7 672.5 165.0 673.3 158.9C674.1 152.8 675.3 148.4 675.6 143.3C675.8 138.2 675.1 132.7 674.7 128.2C674.2 123.8 673.4 120.1 672.9 116.7C672.4 113.3 670.0 108.7 671.6 107.8z" fill="#4a2f18" /><ellipse cx="645.600" cy="115" rx="81" ry="19" transform="rotate(-8.300 645.600 115)" fill="url(#brim)" stroke="#6a4a18" stroke-width=".7"/><ellipse cx="645.600" cy="115" rx="81" ry="19" transform="rotate(-8.300 645.600 115)" fill="url(#brimx)"/><clipPath id="fc"><path d="M600 185L606 130C610 116 636 106.500 654 106.500C668 106.500 680 108 687 112L692 185z"/></clipPath><g clip-path="url(#fc)"><path d="M614.4 115.6C609.3 119.3 609.4 129.4 606.7 136.7C603.9 143.9 601.0 153.0 597.8 158.9C594.6 164.7 586.6 170.9 587.3 171.8C588.1 172.7 597.5 167.0 602.2 164.4C606.9 161.9 611.1 159.4 615.6 156.7C620.0 153.9 625.9 151.9 628.9 147.8C631.9 143.7 631.9 137.8 633.3 132.2C634.8 126.7 640.9 117.2 637.8 114.4C634.6 111.7 619.6 111.9 614.4 115.6z" fill="#4a2f18" /><path d="M644.4 111.1C650.4 110.4 667.7 108.0 673.3 110.0C679.0 112.0 677.9 119.4 678.2 123.3C678.5 127.2 675.3 131.1 675.1 133.3C675.0 135.6 677.8 134.8 677.3 136.7C676.9 138.5 673.4 141.5 672.2 144.4C671.0 147.4 671.5 152.0 670.0 154.4C668.5 156.9 666.5 158.7 663.3 158.9C660.2 159.1 655.4 157.8 651.1 155.6C646.9 153.3 641.3 148.3 637.8 145.6C634.3 142.8 632.3 141.5 630.0 138.9C627.7 136.3 624.4 132.8 624.0 130.0C623.6 127.2 625.9 123.0 627.8 122.2C629.7 121.5 633.9 126.9 635.6 125.6C637.2 124.3 636.3 116.9 637.8 114.4C639.3 112.0 638.5 111.9 644.4 111.1z" fill="#b97c36" /><ellipse cx="651.1" cy="136.7" rx="10" ry="7" fill="url(#blush)"/><ellipse cx="673.3" cy="134.4" rx="5" ry="4" fill="url(#blush)"/><ellipse cx="664.4" cy="150.0" rx="9" ry="6.500" fill="#dcae90" opacity=".55" transform="rotate(-25 664.4 150.0)"/><path d="M657.8 144.4C659.1 142.7 669.1 140.1 671.1 140.7C673.1 141.2 671.3 146.0 670.0 147.8C668.7 149.5 665.4 151.7 663.3 151.1C661.3 150.6 656.5 146.2 657.8 144.4z" fill="#ffffff" stroke="#6a3020" stroke-width=".5"/><path d="M650.0 128.2q5 3 10-1M670.0 127.3q4 2 7-1" stroke="#2a1808" stroke-width="1.100" fill="none"/><path d="M652.2 117.8q6-4 11-1M671.1 115.6q4-2 7 1" stroke="#2a1808" stroke-width="1.300" fill="none"/><circle cx="629.3" cy="147.3" r="1.600" fill="none" stroke="#e89020" stroke-width=".9"/><path d="M614.4 116.7C618.9 109.3 625.7 111.5 633.3 110.0C640.9 108.5 656.3 107.0 660.0 107.8C663.7 108.5 658.9 111.9 655.6 114.4C652.2 117.0 643.3 120.7 640.0 123.3C636.7 125.9 637.4 130.0 635.6 130.0C633.7 130.0 631.1 123.0 628.9 123.3C626.7 123.7 623.0 128.9 622.2 132.2C621.5 135.6 625.6 139.3 624.4 143.3C623.3 147.4 618.5 154.8 615.6 156.7C612.6 158.5 606.9 161.1 606.7 154.4C606.5 147.8 610.0 124.1 614.4 116.7z" fill="#4a2f18" /><path d="M671.6 107.8C673.1 106.9 679.6 108.0 682.2 111.3C684.9 114.7 687.0 122.1 687.6 127.8C688.1 133.5 687.3 139.3 685.8 145.6C684.2 151.9 680.7 159.9 678.2 165.6C675.7 171.3 671.5 180.9 670.7 179.8C669.9 178.7 672.5 165.0 673.3 158.9C674.1 152.8 675.3 148.4 675.6 143.3C675.8 138.2 675.1 132.7 674.7 128.2C674.2 123.8 673.4 120.1 672.9 116.7C672.4 113.3 670.0 108.7 671.6 107.8z" fill="#4a2f18" /></g></svg>
<!-- tool presets -->
<div class="a" style="left:1150.5px;top:27px;width:10.5px;height:417px;background:#484848;"></div>
<div class="a" style="left:1150.5px;top:40px;width:10.5px;height:147px;background:#5c5c5c;"></div>
<div class="a" style="left:1150.5px;top:187px;width:10.5px;height:257px;background:#3e3e3e;"></div>
<div class="a" style="left:1161px;top:187px;width:1.5px;height:257px;background:#3a3a3a;"></div>
<svg style="left:1152px;top:29px" width="8" height="10" viewBox="0 0 8 10"><rect x=".5" y="4" width="6.500" height="5.500" fill="#e0e0e0"/><path d="M2 4v-1.500a1.800 1.800 0 0 1 3.600 0v1.500" fill="none" stroke="#e0e0e0" stroke-width="1.200"/><rect x="3.200" y="5.500" width="1.200" height="2.200" fill="#444"/></svg>
<svg style="left:1152px;top:110px" width="8" height="7" viewBox="0 0 8 7"><path d="M0 .5h8M0 3h8M0 5.500h8" stroke="#3e3e3e" stroke-width=".8"/></svg>
<div class="a" style="left:1161px;top:27px;width:119px;height:417px;background:#464646;"></div>
<div class="t" style="left:1165px;top:30.5px;color:#8e8e8e;font-size:8.35px;">Tool Presets v3</div>
<svg style="left:1265.2px;top:31.7px" width="7.6" height="7.6" viewBox="0 0 7.6 7.6"><circle cx="3.8" cy="3.8" r="3.8" fill="#7a7a7a"/><path d="M1.5 2.8h4.600l-2.300 2.800z" fill="#474747"/></svg>
<svg style="left:1279.7px;top:31.7px" width="7.6" height="7.6" viewBox="0 0 7.6 7.6"><circle cx="3.8" cy="3.8" r="3.8" fill="#7a7a7a"/><path d="M1.5999999999999996 4.6h4.400" stroke="#474747" stroke-width="1.200"/></svg>
<div class="a" style="left:0px;top:444px;width:1280px;height:3px;background:#3c3c3c;"></div>
<svg style="left:1167.5px;top:49.8px" width="6.5" height="6.5" viewBox="0 0 6.5 6.5"><circle cx="3.250" cy="3.250" r="3.250" fill="#7c7c7c"/><path d="M1.300 3.250h3.900" stroke="#464646" stroke-width="1.100"/></svg><div class="t" style="left:1181.5px;top:47.5px;color:#c8c8c8;font-size:8.35px;">Color Pencils</div>
<svg style="left:1166.5px;top:63px" width="16" height="17" viewBox="0 0 16 17"><path d="M0.30 16.30L0.96 12.97L3.61 15.54z" fill="#cfcfcf"/><path d="M1.17 12.75L2.56 7.65L9.00 1.01L10.83 0.70L15.57 5.30L15.31 7.14L8.88 13.78L3.82 15.33z" fill="#f48482"/><path d="M5.28 8.89L12.06 1.90M7.55 11.10L14.34 4.10" stroke="#464646" stroke-width=".9" opacity=".85" fill="none"/><path d="M2.56 7.65L8.88 13.78" stroke="#464646" stroke-width=".9" opacity=".85" fill="none"/></svg>
<svg style="left:1185.5px;top:63px" width="16" height="17" viewBox="0 0 16 17"><path d="M0.30 16.30L0.96 12.97L3.61 15.54z" fill="#cfcfcf"/><path d="M1.17 12.75L2.56 7.65L9.00 1.01L10.83 0.70L15.57 5.30L15.31 7.14L8.88 13.78L3.82 15.33z" fill="#f47ec8"/><path d="M5.28 8.89L12.06 1.90M7.55 11.10L14.34 4.10" stroke="#464646" stroke-width=".9" opacity=".85" fill="none"/><path d="M2.56 7.65L8.88 13.78" stroke="#464646" stroke-width=".9" opacity=".85" fill="none"/></svg>
<svg style="left:1204.5px;top:63px" width="16" height="17" viewBox="0 0 16 17"><path d="M0.30 16.30L0.96 12.97L3.61 15.54z" fill="#cfcfcf"/><path d="M1.17 12.75L2.56 7.65L9.00 1.01L10.83 0.70L15.57 5.30L15.31 7.14L8.88 13.78L3.82 15.33z" fill="#d47af0"/><path d="M5.28 8.89L12.06 1.90M7.55 11.10L14.34 4.10" stroke="#464646" stroke-width=".9" opacity=".85" fill="none"/><path d="M2.56 7.65L8.88 13.78" stroke="#464646" stroke-width=".9" opacity=".85" fill="none"/></svg>
<svg style="left:1223.5px;top:63px" width="16" height="17" viewBox="0 0 16 17"><path d="M0.30 16.30L0.96 12.97L3.61 15.54z" fill="#cfcfcf"/><path d="M1.17 12.75L2.56 7.65L9.00 1.01L10.83 0.70L15.57 5.30L15.31 7.14L8.88 13.78L3.82 15.33z" fill="#a47af4"/><path d="M5.28 8.89L12.06 1.90M7.55 11.10L14.34 4.10" stroke="#464646" stroke-width=".9" opacity=".85" fill="none"/><path d="M2.56 7.65L8.88 13.78" stroke="#464646" stroke-width=".9" opacity=".85" fill="none"/></svg>
<svg style="left:1242.5px;top:63px" width="16" height="17" viewBox="0 0 16 17"><path d="M0.30 16.30L0.96 12.97L3.61 15.54z" fill="#cfcfcf"/><path d="M1.17 12.75L2.56 7.65L9.00 1.01L10.83 0.70L15.57 5.30L15.31 7.14L8.88 13.78L3.82 15.33z" fill="#7a8ef4"/><path d="M5.28 8.89L12.06 1.90M7.55 11.10L14.34 4.10" stroke="#464646" stroke-width=".9" opacity=".85" fill="none"/><path d="M2.56 7.65L8.88 13.78" stroke="#464646" stroke-width=".9" opacity=".85" fill="none"/></svg>
<svg style="left:1261.5px;top:63px" width="16" height="17" viewBox="0 0 16 17"><path d="M0.30 16.30L0.96 12.97L3.61 15.54z" fill="#cfcfcf"/><path d="M1.17 12.75L2.56 7.65L9.00 1.01L10.83 0.70L15.57 5.30L15.31 7.14L8.88 13.78L3.82 15.33z" fill="#7accf4"/><path d="M5.28 8.89L12.06 1.90M7.55 11.10L14.34 4.10" stroke="#464646" stroke-width=".9" opacity=".85" fill="none"/><path d="M2.56 7.65L8.88 13.78" stroke="#464646" stroke-width=".9" opacity=".85" fill="none"/></svg>
<svg style="left:1166.5px;top:83px" width="16" height="17" viewBox="0 0 16 17"><path d="M0.30 16.30L0.96 12.97L3.61 15.54z" fill="#cfcfcf"/><path d="M1.17 12.75L2.56 7.65L9.00 1.01L10.83 0.70L15.57 5.30L15.31 7.14L8.88 13.78L3.82 15.33z" fill="#74e8c8"/><path d="M5.28 8.89L12.06 1.90M7.55 11.10L14.34 4.10" stroke="#464646" stroke-width=".9" opacity=".85" fill="none"/><path d="M2.56 7.65L8.88 13.78" stroke="#464646" stroke-width=".9" opacity=".85" fill="none"/></svg>
<svg style="left:1185.5px;top:83px" width="16" height="17" viewBox="0 0 16 17"><path d="M0.30 16.30L0.96 12.97L3.61 15.54z" fill="#cfcfcf"/><path d="M1.17 12.75L2.56 7.65L9.00 1.01L10.83 0.70L15.57 5.30L15.31 7.14L8.88 13.78L3.82 15.33z" fill="#72e888"/><path d="M5.28 8.89L12.06 1.90M7.55 11.10L14.34 4.10" stroke="#464646" stroke-width=".9" opacity=".85" fill="none"/><path d="M2.56 7.65L8.88 13.78" stroke="#464646" stroke-width=".9" opacity=".85" fill="none"/></svg>
<svg style="left:1204.5px;top:83px" width="16" height="17" viewBox="0 0 16 17"><path d="M0.30 16.30L0.96 12.97L3.61 15.54z" fill="#cfcfcf"/><path d="M1.17 12.75L2.56 7.65L9.00 1.01L10.83 0.70L15.57 5.30L15.31 7.14L8.88 13.78L3.82 15.33z" fill="#e4ec70"/><path d="M5.28 8.89L12.06 1.90M7.55 11.10L14.34 4.10" stroke="#464646" stroke-width=".9" opacity=".85" fill="none"/><path d="M2.56 7.65L8.88 13.78" stroke="#464646" stroke-width=".9" opacity=".85" fill="none"/></svg>
<svg style="left:1223.5px;top:83px" width="16" height="17" viewBox="0 0 16 17"><path d="M0.30 16.30L0.96 12.97L3.61 15.54z" fill="#cfcfcf"/><path d="M1.17 12.75L2.56 7.65L9.00 1.01L10.83 0.70L15.57 5.30L15.31 7.14L8.88 13.78L3.82 15.33z" fill="#f4d878"/><path d="M5.28 8.89L12.06 1.90M7.55 11.10L14.34 4.10" stroke="#464646" stroke-width=".9" opacity=".85" fill="none"/><path d="M2.56 7.65L8.88 13.78" stroke="#464646" stroke-width=".9" opacity=".85" fill="none"/></svg>
<svg style="left:1242.5px;top:83px" width="16" height="17" viewBox="0 0 16 17"><path d="M0.30 16.30L0.96 12.97L3.61 15.54z" fill="#cfcfcf"/><path d="M1.17 12.75L2.56 7.65L9.00 1.01L10.83 0.70L15.57 5.30L15.31 7.14L8.88 13.78L3.82 15.33z" fill="#f4b07a"/><path d="M5.28 8.89L12.06 1.90M7.55 11.10L14.34 4.10" stroke="#464646" stroke-width=".9" opacity=".85" fill="none"/><path d="M2.56 7.65L8.88 13.78" stroke="#464646" stroke-width=".9" opacity=".85" fill="none"/></svg>
<svg style="left:1261.5px;top:83px" width="16" height="17" viewBox="0 0 16 17"><path d="M0.30 16.30L0.96 12.97L3.61 15.54z" fill="#cfcfcf"/><path d="M1.17 12.75L2.56 7.65L9.00 1.01L10.83 0.70L15.57 5.30L15.31 7.14L8.88 13.78L3.82 15.33z" fill="#c8c8c8"/><path d="M5.28 8.89L12.06 1.90M7.55 11.10L14.34 4.10" stroke="#464646" stroke-width=".9" opacity=".85" fill="none"/><path d="M2.56 7.65L8.88 13.78" stroke="#464646" stroke-width=".9" opacity=".85" fill="none"/></svg>
<svg style="left:1167.5px;top:102px" width="14" height="18" viewBox="0 0 14 18"><path d="M1.80 17.60L1.26 14.56L4.18 15.63z" fill="#9070d8"/><path d="M1.36 14.28L0.85 9.44L3.81 1.34L5.19 0.25L10.41 2.15L10.76 3.88L7.79 11.98L4.28 15.35z" fill="#9070d8"/><path d="M3.41 9.32L6.55 0.74M5.91 10.23L9.05 1.66" stroke="#464646" stroke-width=".9" opacity=".85" fill="none"/><path d="M0.85 9.44L7.79 11.98" stroke="#464646" stroke-width=".9" opacity=".85" fill="none"/></svg>
<svg style="left:1186.5px;top:102px" width="14" height="18" viewBox="0 0 14 18"><path d="M1.80 17.60L1.26 14.56L4.18 15.63z" fill="#60c860"/><path d="M1.36 14.28L0.85 9.44L3.81 1.34L5.19 0.25L10.41 2.15L10.76 3.88L7.79 11.98L4.28 15.35z" fill="#60c860"/><path d="M3.41 9.32L6.55 0.74M5.91 10.23L9.05 1.66" stroke="#464646" stroke-width=".9" opacity=".85" fill="none"/><path d="M0.85 9.44L7.79 11.98" stroke="#464646" stroke-width=".9" opacity=".85" fill="none"/></svg>
<svg style="left:1205.5px;top:102px" width="14" height="18" viewBox="0 0 14 18"><path d="M1.80 17.60L1.26 14.56L4.18 15.63z" fill="#6098d8"/><path d="M1.36 14.28L0.85 9.44L3.81 1.34L5.19 0.25L10.41 2.15L10.76 3.88L7.79 11.98L4.28 15.35z" fill="#6098d8"/><path d="M3.41 9.32L6.55 0.74M5.91 10.23L9.05 1.66" stroke="#464646" stroke-width=".9" opacity=".85" fill="none"/><path d="M0.85 9.44L7.79 11.98" stroke="#464646" stroke-width=".9" opacity=".85" fill="none"/></svg>
<svg style="left:1224.5px;top:102px" width="14" height="18" viewBox="0 0 14 18"><path d="M1.80 17.60L1.26 14.56L4.18 15.63z" fill="#d868a0"/><path d="M1.36 14.28L0.85 9.44L3.81 1.34L5.19 0.25L10.41 2.15L10.76 3.88L7.79 11.98L4.28 15.35z" fill="#d868a0"/><path d="M3.41 9.32L6.55 0.74M5.91 10.23L9.05 1.66" stroke="#464646" stroke-width=".9" opacity=".85" fill="none"/><path d="M0.85 9.44L7.79 11.98" stroke="#464646" stroke-width=".9" opacity=".85" fill="none"/></svg>
<svg style="left:1243.5px;top:102px" width="14" height="18" viewBox="0 0 14 18"><path d="M1.80 17.60L1.26 14.56L4.18 15.63z" fill="#d87068"/><path d="M1.36 14.28L0.85 9.44L3.81 1.34L5.19 0.25L10.41 2.15L10.76 3.88L7.79 11.98L4.28 15.35z" fill="#d87068"/><path d="M3.41 9.32L6.55 0.74M5.91 10.23L9.05 1.66" stroke="#464646" stroke-width=".9" opacity=".85" fill="none"/><path d="M0.85 9.44L7.79 11.98" stroke="#464646" stroke-width=".9" opacity=".85" fill="none"/></svg>
<svg style="left:1167.5px;top:124.8px" width="6.5" height="6.5" viewBox="0 0 6.5 6.5"><circle cx="3.250" cy="3.250" r="3.250" fill="#7c7c7c"/><path d="M1.300 3.250h3.900" stroke="#464646" stroke-width="1.100"/></svg><div class="t" style="left:1181.5px;top:122.5px;color:#c8c8c8;font-size:8.35px;">Paper Pencils</div>
<svg style="left:1166.5px;top:137px" width="16" height="17" viewBox="0 0 16 17"><path d="M6.300 1l8.100 .9l-1.800 6.700l-5.400 3.600l-4.500-4.500z" fill="#c03a30"/><path d="M6.300 1l8.100 .9l-1.600 1.900l-7.800-.7z" fill="#fff" opacity=".22"/><path d="M12.800 3.800l1.600-1.900l-1.800 6.700l-5.400 3.600l1.200-2.500z" fill="#5a1512" opacity=".75"/><path d="M2.700 7.700l4.500 4.500l-3.600 2.600l-2.900-.3z" fill="#e8a888"/><path d="M.7 14.500l2.300.3l-2.800 1.600z" fill="#222"/></svg>
<svg style="left:1185.5px;top:137px" width="16" height="17" viewBox="0 0 16 17"><path d="M6.300 1l8.100 .9l-1.800 6.700l-5.400 3.600l-4.500-4.500z" fill="#d8d040"/><path d="M6.300 1l8.100 .9l-1.600 1.900l-7.800-.7z" fill="#fff" opacity=".22"/><path d="M12.800 3.800l1.600-1.900l-1.800 6.700l-5.400 3.600l1.200-2.500z" fill="#6a5a18" opacity=".75"/><path d="M2.700 7.700l4.500 4.500l-3.600 2.600l-2.900-.3z" fill="#e8a888"/><path d="M.7 14.500l2.300.3l-2.800 1.600z" fill="#222"/></svg>
<svg style="left:1204.5px;top:137px" width="16" height="17" viewBox="0 0 16 17"><path d="M6.300 1l8.100 .9l-1.800 6.700l-5.400 3.600l-4.500-4.500z" fill="#c89030"/><path d="M6.300 1l8.100 .9l-1.600 1.900l-7.800-.7z" fill="#fff" opacity=".22"/><path d="M12.800 3.800l1.600-1.900l-1.800 6.700l-5.400 3.600l1.200-2.500z" fill="#6a4a10" opacity=".75"/><path d="M2.700 7.700l4.500 4.500l-3.600 2.600l-2.900-.3z" fill="#e8a888"/><path d="M.7 14.500l2.300.3l-2.800 1.600z" fill="#222"/></svg>
<svg style="left:1223.5px;top:137px" width="16" height="17" viewBox="0 0 16 17"><path d="M6.300 1l8.100 .9l-1.800 6.700l-5.400 3.600l-4.500-4.500z" fill="#3038a8"/><path d="M6.300 1l8.100 .9l-1.600 1.900l-7.800-.7z" fill="#fff" opacity=".22"/><path d="M12.800 3.800l1.600-1.900l-1.800 6.700l-5.400 3.600l1.200-2.500z" fill="#14144a" opacity=".75"/><path d="M2.700 7.700l4.500 4.500l-3.600 2.600l-2.900-.3z" fill="#e8a888"/><path d="M.7 14.500l2.300.3l-2.800 1.600z" fill="#222"/></svg>
<svg style="left:1242.5px;top:137px" width="16" height="17" viewBox="0 0 16 17"><path d="M6.300 1l8.100 .9l-1.800 6.700l-5.400 3.600l-4.500-4.500z" fill="#48b038"/><path d="M6.300 1l8.100 .9l-1.600 1.900l-7.800-.7z" fill="#fff" opacity=".22"/><path d="M12.800 3.800l1.600-1.900l-1.800 6.700l-5.400 3.600l1.200-2.500z" fill="#1e5a18" opacity=".75"/><path d="M2.700 7.700l4.500 4.500l-3.600 2.600l-2.900-.3z" fill="#e8a888"/><path d="M.7 14.500l2.300.3l-2.800 1.600z" fill="#222"/></svg>
<svg style="left:1261.5px;top:137px" width="16" height="17" viewBox="0 0 16 17"><path d="M5.500 1l6.500 .9l-1.500 5.500l-4.500 3l-3.700-3.700z" fill="#9a9a9a"/><path d="M2.300 6.700l3.700 3.700l-3 2.400l-2.500-.3z" fill="#e8a888"/><path d="M.5 12.500l2 .3l-2.400 1.500z" fill="#222"/><path d="M11.500 8c1.500 2.500 3 3.800 3 5.500a3 3 0 0 1-6 0c0-1.700 1.500-3 3-5.500z" fill="#58a8e8"/></svg>
<svg style="left:1166.5px;top:156px" width="16" height="17" viewBox="0 0 16 17"><path d="M6.300 1l8.100 .9l-1.800 6.700l-5.400 3.600l-4.500-4.500z" fill="#7a4530"/><path d="M6.300 1l8.100 .9l-1.600 1.900l-7.800-.7z" fill="#fff" opacity=".22"/><path d="M12.800 3.800l1.600-1.900l-1.800 6.700l-5.400 3.600l1.200-2.500z" fill="#3a1a10" opacity=".75"/><path d="M2.700 7.700l4.500 4.500l-3.600 2.600l-2.900-.3z" fill="#e0b898"/><path d="M.7 14.500l2.300.3l-2.800 1.600z" fill="#222"/></svg>
<svg style="left:1167.5px;top:178.8px" width="6.5" height="6.5" viewBox="0 0 6.5 6.5"><circle cx="3.250" cy="3.250" r="3.250" fill="#7c7c7c"/><path d="M1.300 3.250h3.900" stroke="#464646" stroke-width="1.100"/></svg><div class="t" style="left:1181.5px;top:176.5px;color:#c8c8c8;font-size:8.35px;">Acrylic</div>
<svg style="left:1166.5px;top:192px" width="16" height="17" viewBox="0 0 16 17"><path d="M.3 16c1.500-.5 2-2 2.500-4c.5-2 2-3.300 3.800-3l1.800 1.900c.3 2.500-1.500 4.500-3.800 5.100c-1.500.4-3 .3-4.300 0z" fill="#cfcfcf"/><path d="M6.800 8.700l2.700-3.500l2.300 2l-3 3.300z" fill="#f48888" opacity=".8"/><path d="M9.300 5.500l3.200-4.300c1-.9 3.600 1.100 2.900 2.400l-3.600 4.200z" fill="#f48888"/></svg>
<svg style="left:1185.5px;top:192px" width="16" height="17" viewBox="0 0 16 17"><path d="M.3 16c1.500-.5 2-2 2.500-4c.5-2 2-3.300 3.800-3l1.800 1.900c.3 2.500-1.500 4.500-3.800 5.100c-1.500.4-3 .3-4.300 0z" fill="#cfcfcf"/><path d="M6.800 8.700l2.700-3.500l2.300 2l-3 3.300z" fill="#c888f4" opacity=".8"/><path d="M9.300 5.500l3.200-4.300c1-.9 3.600 1.100 2.900 2.400l-3.600 4.200z" fill="#c888f4"/></svg>
<svg style="left:1204.5px;top:192px" width="16" height="17" viewBox="0 0 16 17"><path d="M.3 16c1.500-.5 2-2 2.500-4c.5-2 2-3.300 3.800-3l1.800 1.900c.3 2.500-1.500 4.500-3.800 5.100c-1.500.4-3 .3-4.300 0z" fill="#cfcfcf"/><path d="M6.800 8.700l2.700-3.500l2.300 2l-3 3.300z" fill="#88d0f4" opacity=".8"/><path d="M9.300 5.500l3.200-4.300c1-.9 3.600 1.100 2.900 2.400l-3.600 4.200z" fill="#88d0f4"/></svg>
<svg style="left:1223.5px;top:192px" width="16" height="17" viewBox="0 0 16 17"><path d="M.3 16c1.500-.5 2-2 2.500-4c.5-2 2-3.300 3.800-3l1.800 1.900c.3 2.500-1.500 4.500-3.800 5.100c-1.500.4-3 .3-4.300 0z" fill="#cfcfcf"/><path d="M6.800 8.700l2.700-3.500l2.300 2l-3 3.300z" fill="#88f0a0" opacity=".8"/><path d="M9.300 5.500l3.200-4.300c1-.9 3.600 1.100 2.900 2.400l-3.600 4.200z" fill="#88f0a0"/></svg>
<svg style="left:1242.5px;top:192px" width="16" height="17" viewBox="0 0 16 17"><path d="M.3 16c1.500-.5 2-2 2.500-4c.5-2 2-3.300 3.800-3l1.800 1.900c.3 2.500-1.500 4.500-3.800 5.100c-1.500.4-3 .3-4.300 0z" fill="#cfcfcf"/><path d="M6.800 8.700l2.700-3.500l2.300 2l-3 3.300z" fill="#f4dc78" opacity=".8"/><path d="M9.300 5.500l3.200-4.300c1-.9 3.600 1.100 2.900 2.400l-3.600 4.200z" fill="#f4dc78"/></svg>
<svg style="left:1261.5px;top:192px" width="15" height="17" viewBox="0 0 15 17"><path d="M5 7h7v8.500a1 1 0 0 1-1 1h-5a1 1 0 0 1-1-1z" fill="#bdbdbd"/><path d="M7 4h3v3h-3z" fill="#d8d8d8"/><path d="M7 3h4v1.200h-4z" fill="#999"/><circle cx="3" cy="3" r=".6" fill="#ccc"/><circle cx="1.500" cy="5" r=".6" fill="#ccc"/><circle cx="3.500" cy="6" r=".6" fill="#ccc"/><circle cx="1" cy="2" r=".5" fill="#ccc"/><circle cx="4.600" cy="4.200" r=".6" fill="#ccc"/></svg>
<svg style="left:1167.5px;top:213.8px" width="6.5" height="6.5" viewBox="0 0 6.5 6.5"><circle cx="3.250" cy="3.250" r="3.250" fill="#7c7c7c"/><path d="M1.300 3.250h3.900" stroke="#464646" stroke-width="1.100"/></svg><div class="t" style="left:1181.5px;top:211.5px;color:#c8c8c8;font-size:8.35px;">Oil Paintig</div>
<svg style="left:1166.5px;top:227px" width="16" height="17" viewBox="0 0 16 17"><path d="M6 8c-1-2 .5-4.500 3-6l1.500-1.500l4.500 3.500l-1.500 3c-2 2.500-5.500 2.500-7.500 1z" fill="#f07878"/><path d="M7 9.500l3.500 2" stroke="#ddd" stroke-width="1.500"/><path d="M8 11c-.5 3.500-3 4.500-7 4" fill="none" stroke="#cfcfcf" stroke-width="2"/></svg>
<svg style="left:1185.5px;top:227px" width="16" height="17" viewBox="0 0 16 17"><path d="M6 8c-1-2 .5-4.500 3-6l1.500-1.500l4.500 3.500l-1.500 3c-2 2.500-5.500 2.500-7.500 1z" fill="#9a70f0"/><path d="M7 9.500l3.500 2" stroke="#ddd" stroke-width="1.500"/><path d="M8 11c-.5 3.500-3 4.500-7 4" fill="none" stroke="#cfcfcf" stroke-width="2"/></svg>
<svg style="left:1204.5px;top:227px" width="16" height="17" viewBox="0 0 16 17"><path d="M6 8c-1-2 .5-4.500 3-6l1.500-1.500l4.500 3.500l-1.500 3c-2 2.500-5.500 2.500-7.500 1z" fill="#60b8f0"/><path d="M7 9.500l3.500 2" stroke="#ddd" stroke-width="1.500"/><path d="M8 11c-.5 3.500-3 4.500-7 4" fill="none" stroke="#cfcfcf" stroke-width="2"/></svg>
<svg style="left:1223.5px;top:227px" width="16" height="17" viewBox="0 0 16 17"><path d="M6 8c-1-2 .5-4.500 3-6l1.500-1.500l4.500 3.500l-1.500 3c-2 2.500-5.500 2.500-7.500 1z" fill="#60e070"/><path d="M7 9.500l3.500 2" stroke="#ddd" stroke-width="1.500"/><path d="M8 11c-.5 3.500-3 4.500-7 4" fill="none" stroke="#cfcfcf" stroke-width="2"/></svg>
<svg style="left:1167.5px;top:248.8px" width="6.5" height="6.5" viewBox="0 0 6.5 6.5"><circle cx="3.250" cy="3.250" r="3.250" fill="#7c7c7c"/><path d="M1.300 3.250h3.900" stroke="#464646" stroke-width="1.100"/></svg><div class="t" style="left:1181.5px;top:246.5px;color:#c8c8c8;font-size:8.35px;">Watercolour</div>
<svg style="left:1165.5px;top:262.5px" width="16" height="16" viewBox="0 0 16 16"><circle cx="8" cy="8" r="6.700" fill="none" stroke="#f06464" stroke-width="1.800"/><path d="M8 3c1.900 3 3.200 4.300 3.200 6a3.200 3.200 0 0 1-6.400 0c0-1.700 1.300-3 3.200-6z" fill="#c4c4c4"/><path d="M8.800 9v3a2.600 2.600 0 0 0 1.800-2.200z" fill="#555"/></svg>
<svg style="left:1184.5px;top:262.5px" width="16" height="16" viewBox="0 0 16 16"><circle cx="8" cy="8" r="6.700" fill="none" stroke="#ea5fc8" stroke-width="1.800"/><path d="M8 3c1.900 3 3.200 4.300 3.200 6a3.200 3.200 0 0 1-6.400 0c0-1.700 1.300-3 3.200-6z" fill="#c4c4c4"/><path d="M8.800 9v3a2.600 2.600 0 0 0 1.800-2.200z" fill="#555"/></svg>
<svg style="left:1203.5px;top:262.5px" width="16" height="16" viewBox="0 0 16 16"><circle cx="8" cy="8" r="6.700" fill="none" stroke="#c060f0" stroke-width="1.800"/><path d="M8 3c1.900 3 3.200 4.300 3.200 6a3.200 3.200 0 0 1-6.400 0c0-1.700 1.300-3 3.200-6z" fill="#c4c4c4"/><path d="M8.800 9v3a2.600 2.600 0 0 0 1.800-2.200z" fill="#555"/></svg>
<svg style="left:1222.5px;top:262.5px" width="16" height="16" viewBox="0 0 16 16"><circle cx="8" cy="8" r="6.700" fill="none" stroke="#6a6af0" stroke-width="1.800"/><path d="M8 3c1.900 3 3.200 4.300 3.200 6a3.200 3.200 0 0 1-6.400 0c0-1.700 1.300-3 3.200-6z" fill="#c4c4c4"/><path d="M8.800 9v3a2.600 2.600 0 0 0 1.800-2.200z" fill="#555"/></svg>
<svg style="left:1241.5px;top:262.5px" width="16" height="16" viewBox="0 0 16 16"><circle cx="8" cy="8" r="6.700" fill="none" stroke="#58c0f0" stroke-width="1.800"/><path d="M8 3c1.900 3 3.200 4.300 3.200 6a3.200 3.200 0 0 1-6.400 0c0-1.700 1.300-3 3.200-6z" fill="#c4c4c4"/><path d="M8.800 9v3a2.600 2.600 0 0 0 1.800-2.200z" fill="#555"/></svg>
<svg style="left:1260.5px;top:262.5px" width="16" height="16" viewBox="0 0 16 16"><circle cx="8" cy="8" r="6.700" fill="none" stroke="#58e888" stroke-width="1.800"/><path d="M8 3c1.900 3 3.200 4.300 3.200 6a3.200 3.200 0 0 1-6.400 0c0-1.700 1.300-3 3.200-6z" fill="#c4c4c4"/><path d="M8.800 9v3a2.600 2.600 0 0 0 1.800-2.200z" fill="#555"/></svg>
<svg style="left:1165.5px;top:282.5px" width="16" height="16" viewBox="0 0 16 16"><circle cx="8" cy="8" r="6.700" fill="none" stroke="#a8e840" stroke-width="1.800"/><path d="M8 3c1.900 3 3.200 4.300 3.200 6a3.200 3.200 0 0 1-6.400 0c0-1.700 1.300-3 3.200-6z" fill="#c4c4c4"/><path d="M8.800 9v3a2.600 2.600 0 0 0 1.800-2.200z" fill="#555"/></svg>
<svg style="left:1184.5px;top:282.5px" width="16" height="16" viewBox="0 0 16 16"><circle cx="8" cy="8" r="6.700" fill="none" stroke="#e8e040" stroke-width="1.800"/><path d="M8 3c1.900 3 3.200 4.300 3.200 6a3.200 3.200 0 0 1-6.400 0c0-1.700 1.300-3 3.200-6z" fill="#c4c4c4"/><path d="M8.800 9v3a2.600 2.600 0 0 0 1.800-2.200z" fill="#555"/></svg>
<svg style="left:1203.5px;top:282.5px" width="16" height="16" viewBox="0 0 16 16"><circle cx="8" cy="8" r="6.700" fill="none" stroke="#f0a030" stroke-width="1.800"/><path d="M8 3c1.900 3 3.200 4.300 3.200 6a3.200 3.200 0 0 1-6.400 0c0-1.700 1.300-3 3.200-6z" fill="#c4c4c4"/><path d="M8.800 9v3a2.600 2.600 0 0 0 1.800-2.200z" fill="#555"/></svg>
<svg style="left:1222.5px;top:282.5px" width="16" height="16" viewBox="0 0 16 16"><circle cx="8" cy="8" r="6.700" fill="none" stroke="#a07858" stroke-width="1.800"/><path d="M8 3c1.900 3 3.200 4.300 3.200 6a3.200 3.200 0 0 1-6.400 0c0-1.700 1.300-3 3.200-6z" fill="#c4c4c4"/><path d="M8.800 9v3a2.600 2.600 0 0 0 1.800-2.200z" fill="#555"/></svg>
<svg style="left:1241.5px;top:282.5px" width="16" height="16" viewBox="0 0 16 16"><circle cx="8" cy="8" r="6.700" fill="none" stroke="#d86088" stroke-width="1.800"/><path d="M8 3c1.900 3 3.200 4.300 3.200 6a3.200 3.200 0 0 1-6.400 0c0-1.700 1.300-3 3.200-6z" fill="#c4c4c4"/><path d="M8.800 9v3a2.600 2.600 0 0 0 1.800-2.200z" fill="#555"/></svg>
<svg style="left:1260.5px;top:282.5px" width="16" height="16" viewBox="0 0 16 16"><circle cx="8" cy="8" r="6.700" fill="none" stroke="#6878b0" stroke-width="1.800"/><path d="M8 3c1.900 3 3.200 4.300 3.200 6a3.200 3.200 0 0 1-6.400 0c0-1.700 1.300-3 3.200-6z" fill="#c4c4c4"/><path d="M8.800 9v3a2.600 2.600 0 0 0 1.800-2.200z" fill="#555"/></svg>
<svg style="left:1167.5px;top:303.8px" width="6.5" height="6.5" viewBox="0 0 6.5 6.5"><circle cx="3.250" cy="3.250" r="3.250" fill="#7c7c7c"/><path d="M1.300 3.250h3.900" stroke="#464646" stroke-width="1.100"/></svg><div class="t" style="left:1181.5px;top:301.5px;color:#c8c8c8;font-size:8.35px;">Pen</div>
<svg style="left:1166.5px;top:317px" width="16" height="17" viewBox="0 0 16 17"><path d="M.5 16.500l1.500-7.500l5.500-4.500l4.500 4.500l-4.500 5.500z" fill="#d6d6d6"/><path d="M1.200 15.800l5-5" stroke="#464646" stroke-width=".9"/><circle cx="6.800" cy="10.200" r="1.200" fill="#464646"/><path d="M8.500 3.800l2-3.300h5v5l-3.300 2z" fill="#f07070"/></svg>
<svg style="left:1185.5px;top:317px" width="16" height="17" viewBox="0 0 16 17"><path d="M.5 16.500l1.500-7.500l5.500-4.500l4.500 4.500l-4.500 5.500z" fill="#d6d6d6"/><path d="M1.200 15.800l5-5" stroke="#464646" stroke-width=".9"/><circle cx="6.800" cy="10.200" r="1.200" fill="#464646"/><path d="M8.500 3.800l2-3.300h5v5l-3.300 2z" fill="#ea68c8"/></svg>
<svg style="left:1204.5px;top:317px" width="16" height="17" viewBox="0 0 16 17"><path d="M.5 16.500l1.500-7.500l5.500-4.500l4.500 4.500l-4.500 5.500z" fill="#d6d6d6"/><path d="M1.200 15.800l5-5" stroke="#464646" stroke-width=".9"/><circle cx="6.800" cy="10.200" r="1.200" fill="#464646"/><path d="M8.500 3.800l2-3.300h5v5l-3.300 2z" fill="#c868f0"/></svg>
<svg style="left:1223.5px;top:317px" width="16" height="17" viewBox="0 0 16 17"><path d="M.5 16.500l1.500-7.500l5.500-4.500l4.500 4.500l-4.500 5.500z" fill="#d6d6d6"/><path d="M1.200 15.800l5-5" stroke="#464646" stroke-width=".9"/><circle cx="6.800" cy="10.200" r="1.200" fill="#464646"/><path d="M8.500 3.800l2-3.300h5v5l-3.300 2z" fill="#9878f0"/></svg>
<svg style="left:1242.5px;top:317px" width="16" height="17" viewBox="0 0 16 17"><path d="M.5 16.500l1.500-7.500l5.500-4.500l4.500 4.500l-4.500 5.500z" fill="#d6d6d6"/><path d="M1.200 15.800l5-5" stroke="#464646" stroke-width=".9"/><circle cx="6.800" cy="10.200" r="1.200" fill="#464646"/><path d="M8.500 3.800l2-3.300h5v5l-3.300 2z" fill="#7088f0"/></svg>
<svg style="left:1261.5px;top:317px" width="16" height="17" viewBox="0 0 16 17"><path d="M.5 16.500l1.500-7.500l5.500-4.500l4.500 4.500l-4.500 5.500z" fill="#d6d6d6"/><path d="M1.200 15.800l5-5" stroke="#464646" stroke-width=".9"/><circle cx="6.800" cy="10.200" r="1.200" fill="#464646"/><path d="M8.500 3.800l2-3.300h5v5l-3.300 2z" fill="#70c0f0"/></svg>
<svg style="left:1166.5px;top:337px" width="16" height="17" viewBox="0 0 16 17"><path d="M.5 16.500l1.500-7.500l5.500-4.500l4.500 4.500l-4.500 5.500z" fill="#8a8a8a"/><path d="M1.200 15.800l5-5" stroke="#464646" stroke-width=".9"/><circle cx="6.800" cy="10.200" r="1.200" fill="#464646"/><path d="M8.500 3.800l2-3.300h5v5l-3.300 2z" fill="#8c2a20"/></svg>
<svg style="left:1185.5px;top:337px" width="16" height="17" viewBox="0 0 16 17"><path d="M1 16l1-3l9-10l2.500 2.500l-10 9z" fill="#1a1a1a"/><path d="M10 4l3-3.500l2.500 2.500l-3.200 3z" fill="#c8a868"/><path d="M1 16l.5-1.500l1 1z" fill="#bbb"/></svg>
<svg style="left:1204.5px;top:337px" width="16" height="17" viewBox="0 0 16 17"><path d="M1 16l1.500-5l7-8l4.500 4l-8 7z" fill="#161616"/><path d="M8 3.500l3-3l4.500 4l-2.500 3z" fill="#2a2a2a"/></svg>
<svg style="left:1223.5px;top:337px" width="16" height="17" viewBox="0 0 16 17"><path d="M2 16c0-6 3-12 9-15.500c2 3-1 9-6.500 12z" fill="#8a7a7a"/><path d="M1.500 16.500l8-13" stroke="#d8c8c8" stroke-width=".7"/></svg>
<svg style="left:1242.5px;top:337px" width="16" height="17" viewBox="0 0 16 17"><path d="M1 13.500l3-5l4.500 4l-5 3z" fill="#d6ec5a"/><path d="M4.500 8l5-6l5 4.500l-5.500 5.500z" fill="#1c1c1c"/><path d="M9.500 2l2-1.500l4 4l-1.500 2z" fill="#c8e050"/></svg>
<svg style="left:1167.5px;top:357.8px" width="6.5" height="6.5" viewBox="0 0 6.5 6.5"><circle cx="3.250" cy="3.250" r="3.250" fill="#7c7c7c"/><path d="M1.300 3.250h3.900" stroke="#464646" stroke-width="1.100"/></svg><div class="t" style="left:1181.5px;top:355.5px;color:#c8c8c8;font-size:8.35px;">Chalk</div>
<svg style="left:1165.5px;top:371px" width="16" height="17" viewBox="0 0 16 17"><path d="M3.500 9.500l6.500-8c.5-.5 1-.5 1.500-.3l3.800 2c.5.300.7.700.7 1.300v4.500l-7.500 7z" fill="#ee7878"/><path d="M.4 13.200l3.300-4l5 5.600l-3.500 2.200c-.5.300-1 .2-1.400-.2z" fill="#f4c0c0"/></svg>
<svg style="left:1184.5px;top:371px" width="16" height="17" viewBox="0 0 16 17"><path d="M3.500 9.500l6.500-8c.5-.5 1-.5 1.500-.3l3.800 2c.5.300.7.700.7 1.300v4.500l-7.500 7z" fill="#8878ee"/><path d="M.4 13.200l3.300-4l5 5.600l-3.500 2.200c-.5.300-1 .2-1.400-.2z" fill="#c8c0f4"/></svg>
<svg style="left:1203.5px;top:371px" width="16" height="17" viewBox="0 0 16 17"><path d="M3.500 9.500l6.500-8c.5-.5 1-.5 1.500-.3l3.800 2c.5.300.7.700.7 1.300v4.500l-7.500 7z" fill="#98e070"/><path d="M.4 13.200l3.300-4l5 5.600l-3.500 2.200c-.5.300-1 .2-1.400-.2z" fill="#d0f0b8"/></svg>
<svg style="left:1223.5px;top:371px" width="16" height="17" viewBox="0 0 16 17"><rect x="0" y=".5" width="16" height="16" fill="#1c5a30"/><path d="M1 14c4 1 5-2 6-6c1-4 4-2 7-6" fill="none" stroke="#e88888" stroke-width="1.800" stroke-linecap="round"/></svg>
<svg style="left:1242.5px;top:371px" width="16" height="17" viewBox="0 0 16 17"><path d="M1 2l5 1l4 8l-5 5.500c-3-3-4-8-4-14.500z" fill="#1c6ab0"/><path d="M8 9l5.500-7.500l2 1.500l-5.500 7.500z" fill="#7ad8d8"/><path d="M7.500 9.700l1-1.300l2 1.500l-1 1.300z" fill="#2090e0"/></svg>
<svg style="left:1261.5px;top:371px" width="16" height="17" viewBox="0 0 16 17"><path d="M2 7l8-5l5 2v7l-8 5l-5-2z" fill="#7a5248"/><path d="M2 7l5 2v7l-5-2z" fill="#5a3a32"/><path d="M2 7l8-5l5 2l-8 5z" fill="#8c6258"/></svg>
<svg style="left:1166.5px;top:391px" width="16" height="17" viewBox="0 0 16 17"><path d="M1.500 6.500l8-4.500l5 2v7l-8 5.500l-5-2.500z" fill="#686868" stroke="#2c2c2c" stroke-width=".8"/><path d="M1.500 6.500l5 2.500v7.500M6.500 9l8-5" fill="none" stroke="#2c2c2c" stroke-width=".8"/></svg>
<svg style="left:1167.5px;top:412.8px" width="6.5" height="6.5" viewBox="0 0 6.5 6.5"><circle cx="3.250" cy="3.250" r="3.250" fill="#7c7c7c"/><path d="M1.300 3.250h3.900" stroke="#464646" stroke-width="1.100"/></svg><div class="t" style="left:1181.5px;top:410.5px;color:#c8c8c8;font-size:8.35px;">Smudge &amp; Spread</div>
<svg style="left:1165.5px;top:426.5px" width="16" height="17" viewBox="0 0 16 17"><path d="M7.500 1.500c2.500 4.500 4.500 6.500 4.500 9.500a4.500 4.500 0 0 1-9 0c0-3 2-5 4.500-9.500z" fill="#6aa8e0"/><path d="M6 5c-1.500 3-2 4-2 6a3.500 3.500 0 0 0 2 3c-1-3-.5-5 0-9z" fill="#a8d0f0"/></svg>
<svg style="left:1184.5px;top:426.5px" width="16" height="17" viewBox="0 0 16 17"><path d="M2 9c0-4 3-6.500 7-6.500c3.500 0 5.500 2.500 5.500 6c0 4-3 6.500-7 6c-3.500-.3-5.500-2.500-5.500-5.500z" fill="#cf9038"/><path d="M5 12c2 1.500 5 1.500 7.500-.5" stroke="#a86a20" stroke-width="1.200" fill="none"/><path d="M4 8c1-3 4-4.500 7-3.500" stroke="#e8b860" stroke-width="1.200" fill="none"/></svg>
<svg style="left:1203.5px;top:426.5px" width="16" height="17" viewBox="0 0 16 17"><path d="M8 .8v15.400" stroke="#78d0f0" stroke-width="2.6" transform="rotate(0 8 8.500)"/><path d="M8 .8v15.400" stroke="#78d0f0" stroke-width="2.6" transform="rotate(60 8 8.500)"/><path d="M8 .8v15.400" stroke="#78d0f0" stroke-width="2.6" transform="rotate(120 8 8.500)"/><circle cx="8" cy="8.500" r="4.500" fill="#78d0f0"/><circle cx="8" cy="8.500" r="1.200" fill="#464646"/><g fill="#464646"><circle cx="8" cy="5.500" r=".8"/><circle cx="8" cy="11.500" r=".8"/><circle cx="5.400" cy="7" r=".8"/><circle cx="10.600" cy="7" r=".8"/><circle cx="5.400" cy="10" r=".8"/><circle cx="10.600" cy="10" r=".8"/></g></svg>
<svg style="left:1222.5px;top:426.5px" width="16" height="17" viewBox="0 0 16 17"><path d="M8 .8v15.400" stroke="#48b8b0" stroke-width="1.1" transform="rotate(0 8 8.500)"/><path d="M8 .8v15.400" stroke="#48b8b0" stroke-width="1.1" transform="rotate(60 8 8.500)"/><path d="M8 .8v15.400" stroke="#48b8b0" stroke-width="1.1" transform="rotate(120 8 8.500)"/><circle cx="8" cy="8.500" r="3.800" fill="none" stroke="#48b8b0" stroke-width="1.200"/><circle cx="8" cy="8.500" r="1.300" fill="#48b8b0"/></svg>
<svg style="left:1241.5px;top:426.5px" width="16" height="17" viewBox="0 0 16 17"><path d="M8 .8v15.400" stroke="#7088c8" stroke-width="1.3" transform="rotate(0 8 8.500)"/><path d="M8 .8v15.400" stroke="#7088c8" stroke-width="1.3" transform="rotate(60 8 8.500)"/><path d="M8 .8v15.400" stroke="#7088c8" stroke-width="1.3" transform="rotate(120 8 8.500)"/><path d="M6.300 2.200l1.700 1.800l1.700-1.800M6.800 4.800l1.200 1.200l1.200-1.200" fill="none" stroke="#7088c8" stroke-width=".8" transform="rotate(0 8 8.500)"/><path d="M6.300 2.200l1.700 1.800l1.700-1.800M6.800 4.800l1.200 1.200l1.200-1.200" fill="none" stroke="#7088c8" stroke-width=".8" transform="rotate(60 8 8.500)"/><path d="M6.300 2.200l1.700 1.800l1.700-1.800M6.800 4.800l1.200 1.200l1.200-1.200" fill="none" stroke="#7088c8" stroke-width=".8" transform="rotate(120 8 8.500)"/><path d="M6.300 2.200l1.700 1.800l1.700-1.800M6.800 4.800l1.200 1.200l1.200-1.200" fill="none" stroke="#7088c8" stroke-width=".8" transform="rotate(180 8 8.500)"/><path d="M6.300 2.200l1.700 1.800l1.700-1.800M6.800 4.800l1.200 1.200l1.200-1.200" fill="none" stroke="#7088c8" stroke-width=".8" transform="rotate(240 8 8.500)"/><path d="M6.300 2.200l1.700 1.800l1.700-1.800M6.800 4.800l1.200 1.200l1.200-1.200" fill="none" stroke="#7088c8" stroke-width=".8" transform="rotate(300 8 8.500)"/><circle cx="8" cy="8.500" r="2" fill="#8aa0d8"/></svg>
<svg style="left:1260.5px;top:426.5px" width="16" height="17" viewBox="0 0 16 17"><path d="M8 .8v15.400" stroke="#48c0b8" stroke-width="1.3" transform="rotate(0 8 8.500)"/><path d="M8 .8v15.400" stroke="#48c0b8" stroke-width="1.3" transform="rotate(60 8 8.500)"/><path d="M8 .8v15.400" stroke="#48c0b8" stroke-width="1.3" transform="rotate(120 8 8.500)"/><path d="M6.300 2.200l1.700 1.800l1.700-1.800M6.800 4.800l1.200 1.200l1.200-1.200" fill="none" stroke="#48c0b8" stroke-width=".8" transform="rotate(0 8 8.500)"/><path d="M6.300 2.200l1.700 1.800l1.700-1.800M6.800 4.800l1.200 1.200l1.200-1.200" fill="none" stroke="#48c0b8" stroke-width=".8" transform="rotate(60 8 8.500)"/><path d="M6.300 2.200l1.700 1.800l1.700-1.800M6.800 4.800l1.200 1.200l1.200-1.200" fill="none" stroke="#48c0b8" stroke-width=".8" transform="rotate(120 8 8.500)"/><path d="M6.300 2.200l1.700 1.800l1.700-1.800M6.800 4.800l1.200 1.200l1.200-1.200" fill="none" stroke="#48c0b8" stroke-width=".8" transform="rotate(180 8 8.500)"/><path d="M6.300 2.200l1.700 1.800l1.700-1.800M6.800 4.800l1.200 1.200l1.200-1.200" fill="none" stroke="#48c0b8" stroke-width=".8" transform="rotate(240 8 8.500)"/><path d="M6.300 2.200l1.700 1.800l1.700-1.800M6.800 4.800l1.200 1.200l1.200-1.200" fill="none" stroke="#48c0b8" stroke-width=".8" transform="rotate(300 8 8.500)"/><circle cx="8" cy="8.500" r="1.800" fill="#70d8d0"/></svg>
<!-- transport -->
<div class="a" style="left:132.5px;top:401px;width:1015.5px;height:43px;background:#464646;"></div>
<div class="a" style="left:132.5px;top:401.5px;width:844px;height:12.5px;background:#3e3e3e;"></div>
<div class="a" style="left:357px;top:402.5px;width:395px;height:11px;background:#5d5d5d;"></div>
<svg style="left:550px;top:405px" width="6" height="6" viewBox="0 0 6 6"><path d="M.5 0v6M3 0v6M5.500 0v6" stroke="#3e3e3e" stroke-width=".8"/></svg>
<div class="a" style="left:976.5px;top:401.5px;width:112px;height:12.5px;background:#4b4b4b;"></div>
<svg style="left:979.5px;top:403.5px" width="9" height="9" viewBox="0 0 9 9"><circle cx="4.500" cy="4.500" r="3.600" fill="none" stroke="#bdbdbd" stroke-width="1"/><path d="M2.500 6.500l4-4" stroke="#bdbdbd" stroke-width=".8"/></svg>
<svg style="left:991px;top:403.5px" width="9" height="9" viewBox="0 0 9 9"><path d="M4.500 0v9M0 4.500h9" stroke="#a8a8a8" stroke-width="1" stroke-dasharray="1.200 1.200"/></svg>
<div class="a" style="left:1003px;top:402px;width:44.5px;height:11.5px;background:#405c5f;border:1px solid #3a4f52"></div>
<div class="t" style="left:1006px;top:402.5px;color:#c8d0d0;">32.71%</div>
<svg style="left:1053.3px;top:405.5px" width="7" height="5" viewBox="0 0 7 5"><path d="M0 2.500l3-2.300v4.600zM7 2.500l-3-2.300v4.600z" fill="#2e2e2e"/></svg>
<div class="t" style="left:1069px;top:402px;color:#999;">-</div>
<div class="t" style="left:1079.5px;top:402.5px;color:#999;">+</div>
<div class="a" style="left:1089px;top:402px;width:58.5px;height:11.5px;background:#5d5d5d;"></div>
<div class="t" style="left:1092.5px;top:402.5px;color:#c8c8c8;">Display</div>
<svg style="left:1135.9px;top:404.09999999999997px" width="7.2" height="7.2" viewBox="0 0 7.2 7.2"><circle cx="3.6" cy="3.6" r="3.6" fill="#747474"/><path d="M1.3000000000000003 2.6h4.600l-2.300 2.800z" fill="#5d5d5d"/></svg>
<svg style="left:1138px;top:366px" width="8" height="9" viewBox="0 0 8 9"><path d="M1 0v9M4 0v3M4 5.500v3.500M7 0v9" stroke="#cfcfcf" stroke-width="1"/></svg>
<div class="a" style="left:1136.5px;top:377px;width:11px;height:12.5px;background:#4b6a6d;"></div>
<svg style="left:1137.5px;top:378px" width="9" height="10" viewBox="0 0 9 10"><path d="M.5 .5l8 9M8.500 9.500v-3.500M8.500 9.500h-3.500" stroke="#c8d0d0" stroke-width=".9" fill="none"/></svg>
<svg style="left:1137.5px;top:391px" width="9" height="10" viewBox="0 0 9 10"><circle cx="4.500" cy="3.500" r="2.800" fill="none" stroke="#cfcfcf" stroke-width="1"/><path d="M1 9.500h7M2.500 7.500h4" stroke="#cfcfcf" stroke-width="1.200"/></svg>
<svg style="left:135px;top:418px" width="7" height="7" viewBox="0 0 7 7"><circle cx="3.500" cy="3.500" r="3.200" fill="#7c7c7c"/><path d="M3.500 1.600v2.600" stroke="#464646" stroke-width="1"/></svg>
<div class="a" style="left:143.5px;top:416px;width:47.5px;height:12px;background:#4b6a6d;"></div>
<div class="t" style="left:143.5px;top:416.5px;color:#c9d2d2;font-size:8.35px;width:47.500px;text-align:center">Mark In</div>
<svg style="left:485px;top:417.5px" width="8" height="9" viewBox="0 0 8 9"><path d="M0 2.800h2.500l3-2.800v9l-3-2.800h-2.500z" fill="#b4b4b4"/><path d="M6.800 3v3" stroke="#b4b4b4" stroke-width=".9"/></svg>
<svg style="left:498px;top:418px" width="8" height="8" viewBox="0 0 8 8"><path d="M1 3.500v-2h5.500M7 4.500v2h-5.500" fill="none" stroke="#b4b4b4" stroke-width="1.200"/><path d="M5.500 0l2.500 1.500l-2.500 1.500zM2.500 5l-2.500 1.500l2.500 1.500z" fill="#b4b4b4"/></svg>
<svg style="left:511px;top:417.5px" width="9" height="9" viewBox="0 0 9 9"><path d="M0 2.500v-2.500h2.500M6.500 0h2.500v2.500M9 6.500v2.500h-2.500M2.500 9h-2.500v-2.500" fill="none" stroke="#8a8a8a" stroke-width="1"/></svg>
<div class="a" style="left:523.5px;top:416px;width:57.5px;height:12px;background:#5b5b5b;"></div>
<div class="t" style="left:526.5px;top:416.5px;color:#c8c8c8;">24 fps</div>
<svg style="left:568.4px;top:418.4px" width="7.2" height="7.2" viewBox="0 0 7.2 7.2"><circle cx="3.6" cy="3.6" r="3.6" fill="#747474"/><path d="M1.3000000000000003 2.6h4.600l-2.300 2.800z" fill="#5b5b5b"/></svg>
<svg style="left:586px;top:418.5px" width="18" height="8" viewBox="0 0 18 8"><path d="M0 3l2-1.500v3zM18 3l-2-1.500v3z" fill="#9a9a9a"/><path d="M6 8c-1.500-1.500-2-3-1.500-4l1.500 1v-4h1.200v-1h1.200v1h1.200v1h1.200v3c0 1.500-.5 2.500-1 3z" fill="#b4b4b4"/></svg>
<svg style="left:613.5px;top:417.5px" width="7" height="9" viewBox="0 0 7 9"><path d="M0 0l7 4.500l-7 4.500z" fill="#b4b4b4"/></svg>
<svg style="left:636px;top:418px" width="8" height="8" viewBox="0 0 8 8"><rect width="8" height="8" fill="#aaaaaa"/></svg>
<svg style="left:656px;top:418.5px" width="14" height="7" viewBox="0 0 14 7"><path d="M0.6 0v7" stroke="#b4b4b4" stroke-width="1.200"/><path d="M6.0 0l-4.500 3.500l4.500 3.500z" fill="#b4b4b4"/><path d="M11.0 0l-4.500 3.500l4.500 3.500z" fill="#b4b4b4"/></svg>
<svg style="left:679px;top:418.5px" width="14" height="7" viewBox="0 0 14 7"><path d="M0 0l4.500 3.500l-4.500 3.500z" fill="#b4b4b4"/><path d="M5 0l4.500 3.500l-4.500 3.500z" fill="#b4b4b4"/><path d="M10.6 0v7" stroke="#b4b4b4" stroke-width="1.200"/></svg>
<svg style="left:702px;top:418.5px" width="14" height="7" viewBox="0 0 14 7"><circle cx=".6" cy="3.500" r=".6" fill="#999"/><path d="M7.0 0l-4.500 3.500l4.500 3.500z" fill="#b4b4b4"/><path d="M12.0 0l-4.500 3.500l4.500 3.500z" fill="#b4b4b4"/></svg>
<svg style="left:726px;top:418.5px" width="14" height="7" viewBox="0 0 14 7"><path d="M0 0l4.500 3.500l-4.500 3.500z" fill="#b4b4b4"/><path d="M5 0l4.500 3.500l-4.500 3.500z" fill="#b4b4b4"/><circle cx="11.400" cy="3.500" r=".6" fill="#999"/></svg>
<svg style="left:750px;top:418.5px" width="12" height="7" viewBox="0 0 12 7"><path d="M4.5 0l-4.500 3.500l4.500 3.500z" fill="#b4b4b4"/><path d="M6.6 0v7" stroke="#b4b4b4" stroke-width="1.200"/><path d="M9.4 0v7" stroke="#b4b4b4" stroke-width="1.200"/></svg>
<svg style="left:773px;top:418.5px" width="12" height="7" viewBox="0 0 12 7"><path d="M0.6 0v7" stroke="#b4b4b4" stroke-width="1.200"/><path d="M3.4 0v7" stroke="#b4b4b4" stroke-width="1.200"/><path d="M5.5 0l4.500 3.500l-4.500 3.500z" fill="#b4b4b4"/></svg>
<div class="a" style="left:1090px;top:416px;width:45.5px;height:12px;background:#4b6a6d;"></div>
<div class="t" style="left:1090px;top:416.5px;color:#c9d2d2;font-size:8.35px;width:45.500px;text-align:center">Mark Out</div>
<svg style="left:1137.5px;top:418px" width="7" height="7" viewBox="0 0 7 7"><circle cx="3.500" cy="3.500" r="3.200" fill="#7c7c7c"/><path d="M3.500 1.600v2.600" stroke="#464646" stroke-width="1"/></svg>
<div class="a" style="left:133.5px;top:430px;width:58.5px;height:11.5px;background:#405c5f;border:1px solid #3a4f52"></div>
<div class="t" style="left:136.5px;top:430.5px;color:#c8d0d0;">1</div>
<div class="a" style="left:193px;top:430.5px;width:895px;height:12px;background:#3f3f3f;"></div>
<div class="a" style="left:918.86px;top:430px;width:55.72px;height:12.5px;background:#4f6c6f;"></div>
<div class="a" style="left:194.0px;top:431.5px;width:1px;height:5.0px;background:#d8d8d8;"></div>
<div class="a" style="left:249.7px;top:434px;width:1px;height:8.300000000000011px;background:#151515;"></div>
<div class="a" style="left:305.4px;top:434px;width:1px;height:8.300000000000011px;background:#151515;"></div>
<div class="a" style="left:361.2px;top:434px;width:1px;height:8.300000000000011px;background:#151515;"></div>
<div class="a" style="left:416.9px;top:434px;width:1px;height:8.300000000000011px;background:#151515;"></div>
<div class="a" style="left:472.6px;top:434px;width:1px;height:8.300000000000011px;background:#151515;"></div>
<div class="a" style="left:528.3px;top:434px;width:1px;height:8.300000000000011px;background:#151515;"></div>
<div class="a" style="left:584.0px;top:434px;width:1px;height:8.300000000000011px;background:#151515;"></div>
<div class="a" style="left:639.8px;top:434px;width:1px;height:8.300000000000011px;background:#151515;"></div>
<div class="a" style="left:695.5px;top:434px;width:1px;height:8.300000000000011px;background:#151515;"></div>
<div class="a" style="left:751.2px;top:434px;width:1px;height:8.300000000000011px;background:#151515;"></div>
<div class="a" style="left:806.9px;top:434px;width:1px;height:8.300000000000011px;background:#151515;"></div>
<div class="a" style="left:862.6px;top:434px;width:1px;height:8.300000000000011px;background:#151515;"></div>
<div class="a" style="left:918.4px;top:434px;width:1px;height:8.300000000000011px;background:#151515;"></div>
<div class="a" style="left:974.1px;top:434px;width:1px;height:8.300000000000011px;background:#151515;"></div>
<div class="a" style="left:1029.8px;top:434px;width:1px;height:8.300000000000011px;background:#151515;"></div>
<div class="a" style="left:1085.5px;top:434px;width:1px;height:8.300000000000011px;background:#151515;"></div>
<div class="a" style="left:195.0px;top:438.5px;width:55.22px;height:3.5px;background:#00f000;"></div>
<div class="a" style="left:1030.8px;top:438.5px;width:55.22px;height:3.5px;background:#f00000;"></div>
<div class="t" style="left:979px;top:430.5px;color:#5a6a6c;">14</div>
<div class="a" style="left:1088px;top:430px;width:59.5px;height:11.5px;background:#405c5f;border:1px solid #3a4f52"></div>
<div class="t" style="left:1091px;top:430px;color:#c8d0d0;">16</div>
<!-- timeline -->
<div class="a" style="left:0px;top:447px;width:1280px;height:273px;background:#404040;"></div>
<div class="a" style="left:0px;top:447px;width:195px;height:17px;background:#474747;"></div>
<div class="a" style="left:0px;top:449px;width:24px;height:14.5px;background:#4c4c4c;"></div>
<div class="t" style="left:-1.5px;top:452px;color:#c4c4c4;">roject</div>
<div class="a" style="left:25.5px;top:449px;width:57.5px;height:14.5px;background:#4b6a6d;"></div>
<div class="t" style="left:28px;top:450.5px;color:#c9d2d2;">Clip: Timeline</div>
<div class="a" style="left:0px;top:463.5px;width:1280px;height:1.5px;background:#4a4a4a;"></div>
<div class="a" style="left:195px;top:448px;width:1085px;height:13px;background:#484848;"></div>
<div class="t" style="left:477px;top:449.5px;color:#8f8f8f;">Project: Lilly [ 1 , 64&nbsp; (64) ]</div>
<div class="t" style="left:598px;top:449.5px;color:#8f8f8f;">Clip: textures [ 49 , 64&nbsp; (16) ]</div>
<div class="t" style="left:726px;top:449.5px;color:#8f8f8f;">Layer(10/11): textures_short d.png [ 1 , 16&nbsp; (16) ]</div>
<div class="t" style="left:929px;top:449.5px;color:#8f8f8f;">Current Image: 14</div>
<div class="a" style="left:0px;top:465px;width:1280px;height:20px;background:#3f3f3f;"></div>
<div class="t" style="left:0px;top:473px;color:#c4c4c4;">:</div>
<div class="a" style="left:3.5px;top:472px;width:120px;height:11.5px;background:#5b5b5b;"></div>
<div class="t" style="left:6.5px;top:472.5px;color:#c8c8c8;">New</div>
<svg style="left:111.9px;top:474.09999999999997px" width="7.2" height="7.2" viewBox="0 0 7.2 7.2"><circle cx="3.6" cy="3.6" r="3.6" fill="#747474"/><path d="M1.3000000000000003 2.6h4.600l-2.300 2.800z" fill="#5b5b5b"/></svg>
<svg style="left:125px;top:474px" width="10" height="7" viewBox="0 0 10 7"><path d="M0 3.500c2-4.500 8-4.500 10 0c-2 4.500-8 4.500-10 0z" fill="#d0d0d0"/><circle cx="5" cy="3.500" r="2" fill="#3f3f3f"/><circle cx="5" cy="3.500" r=".9" fill="#d0d0d0"/></svg>
<svg style="left:138px;top:472.5px" width="7" height="10" viewBox="0 0 7 10"><rect x="0" y="4.500" width="6.500" height="5" fill="#d0d0d0"/><path d="M1.200 4.500v-2a2 2 0 0 1 4 0v.5" fill="none" stroke="#d0d0d0" stroke-width="1.100"/><rect x="2.700" y="6" width="1.100" height="2" fill="#3f3f3f"/></svg>
<svg style="left:149.5px;top:472.5px" width="7" height="11" viewBox="0 0 7 11"><path d="M3.500 .3a3.200 3.200 0 0 1 3.200 3.200c0 1.700-1.200 2.200-1.400 4h-3.600c-.2-1.800-1.400-2.300-1.400-4a3.200 3.200 0 0 1 3.200-3.200z" fill="#d0d0d0"/><path d="M2 8.500h3M2.300 9.800h2.400" stroke="#d0d0d0" stroke-width=".9"/></svg>
<div class="t" style="left:159.500px;top:468px;font-family:'Liberation Serif','DejaVu Serif',serif;font-style:italic;font-size:15px;line-height:16px;color:#d0d0d0">α</div>
<svg style="left:171px;top:472.5px" width="10" height="10" viewBox="0 0 10 10"><rect x=".5" y=".5" width="8.500" height="8.500" fill="none" stroke="#d0d0d0" stroke-width="1" stroke-dasharray="1.500 1"/><rect x="2.800" y="2.800" width="4" height="4" fill="#9a9a9a"/></svg>
<svg style="left:185px;top:472.5px" width="10" height="11" viewBox="0 0 10 11"><circle cx="5.500" cy="4.300" r="3.700" fill="none" stroke="#d0d0d0" stroke-width="1.100"/><circle cx="4" cy="4.300" r=".8" fill="#d0d0d0"/><circle cx="7" cy="4.300" r=".8" fill="#d0d0d0"/><path d="M2.500 7l-1.500 2" stroke="#d0d0d0" stroke-width="1.200"/><rect x="0" y="8.500" width="2" height="2" fill="#d0d0d0"/></svg>
<div class="a" style="left:570.1600000000001px;top:471px;width:27.03px;height:13px;background:#3f5a5d;"></div><div class="t" style="left:220.9px;top:472.8px;color:#c6c6c6;font-size:8.35px;">1</div><div class="t" style="left:274.9px;top:472.8px;color:#c6c6c6;font-size:8.35px;">3</div><div class="t" style="left:329.0px;top:472.8px;color:#c6c6c6;font-size:8.35px;">5</div><div class="t" style="left:383.1px;top:472.8px;color:#c6c6c6;font-size:8.35px;">7</div><div class="t" style="left:437.1px;top:472.8px;color:#c6c6c6;font-size:8.35px;">9</div><div class="t" style="left:491.2px;top:472.8px;color:#c6c6c6;font-size:8.35px;">11</div><div class="t" style="left:545.2px;top:472.8px;color:#c6c6c6;font-size:8.35px;">13</div><div class="t" style="left:599.3px;top:472.8px;color:#c6c6c6;font-size:8.35px;">15</div><div class="t" style="left:572.3px;top:472.8px;color:#c6c6c6;font-size:8.35px;">14</div><div class="t" style="left:653.3px;top:472.8px;color:#c6c6c6;font-size:8.35px;">17</div><div class="t" style="left:707.4px;top:472.8px;color:#c6c6c6;font-size:8.35px;">19</div><div class="t" style="left:761.5px;top:472.8px;color:#c6c6c6;font-size:8.35px;">21</div><div class="t" style="left:815.5px;top:472.8px;color:#c6c6c6;font-size:8.35px;">23</div><div class="t" style="left:869.6px;top:472.8px;color:#c6c6c6;font-size:8.35px;">25</div><div class="t" style="left:923.6px;top:472.8px;color:#c6c6c6;font-size:8.35px;">27</div><div class="t" style="left:977.7px;top:472.8px;color:#c6c6c6;font-size:8.35px;">29</div><div class="t" style="left:1031.8px;top:472.8px;color:#c6c6c6;font-size:8.35px;">31</div><div class="t" style="left:1085.8px;top:472.8px;color:#c6c6c6;font-size:8.35px;">33</div><div class="t" style="left:1139.9px;top:472.8px;color:#c6c6c6;font-size:8.35px;">35</div><div class="t" style="left:1194.0px;top:472.8px;color:#c6c6c6;font-size:8.35px;">37</div><div class="t" style="left:1248.0px;top:472.8px;color:#c6c6c6;font-size:8.35px;">39</div>
<div class="a" style="left:0px;top:485px;width:184px;height:14.3px;background:#494949;"></div>
<div class="a" style="left:0px;top:484px;width:3px;height:16px;background:#e6bf1e;"></div>
<svg style="left:7px;top:488.7px" width="7" height="7" viewBox="0 0 7 7"><circle cx="3.500" cy="3.500" r="3" fill="none" stroke="#858585" stroke-width="1.100"/><path d="M3.500 1.800v3.400M1.800 3.500h3.400" stroke="#858585" stroke-width="1"/></svg>
<div class="t" style="left:19px;top:486.5px;width:80.500px;overflow:hidden;color:#c0c0c0">line</div>
<div class="a" style="left:100px;top:485.5px;width:18px;height:13.3px;background:#3f3f3f;"></div>
<div class="a" style="left:119.3px;top:486.5px;width:1.8px;height:11px;background:#d6d6d6;border-radius:1px"></div>
<div class="a" style="left:125.800px;top:488.2px;width:8px;height:8px;border-radius:50%;background:#c6c6c6"></div>
<div class="a" style="left:140.0px;top:490.7px;width:3px;height:3px;border-radius:50%;background:#2c2c2c"></div>
<div class="a" style="left:151.3px;top:490.7px;width:3px;height:3px;border-radius:50%;background:#2c2c2c"></div>
<div class="a" style="left:162.7px;top:490.7px;width:3px;height:3px;border-radius:50%;background:#2c2c2c"></div>
<div class="a" style="left:174.0px;top:490.7px;width:3px;height:3px;border-radius:50%;background:#2c2c2c"></div>
<div class="a" style="left:195px;top:485px;width:17px;height:14.3px;background:#494949;"></div>
<svg style="left:198.5px;top:486.5px" width="10" height="11" viewBox="0 0 10 11"><circle cx="5" cy="5.700" r="3.500" fill="none" stroke="#8e8e8e" stroke-width=".9"/><path d="M1 10.500l8-9.500" stroke="#8e8e8e" stroke-width=".9"/></svg>
<div class="a" style="left:212.5px;top:485.5px;width:5.5px;height:13.3px;background:#5a5a5a;"></div>
<div class="a" style="left:214.5px;top:488.5px;width:1.5px;height:7px;background:#484848;"></div>
<div class="a" style="left:652.5px;top:485.5px;width:5.5px;height:13.3px;background:#5a5a5a;"></div>
<div class="a" style="left:654.5px;top:488.5px;width:1.5px;height:7px;background:#484848;"></div>
<div class="a" style="left:659px;top:485px;width:621px;height:14.3px;background:#9a8830;"></div>
<svg style="left:662.5px;top:488.2px" width="9" height="8" viewBox="0 0 9 8"><path d="M.5 0v8M2.800 0v8" stroke="#b8b060" stroke-width="1"/><path d="M4.200 .5l4.300 3.500l-4.300 3.500z" fill="#b8b060"/></svg>
<div class="a" style="left:0px;top:501px;width:184px;height:14.3px;background:#494949;"></div>
<div class="a" style="left:0px;top:500px;width:3px;height:16px;background:#a9bf2c;"></div>
<svg style="left:7px;top:504.7px" width="7" height="7" viewBox="0 0 7 7"><circle cx="3.500" cy="3.500" r="3" fill="none" stroke="#858585" stroke-width="1.100"/><path d="M3.500 1.800v3.400M1.800 3.500h3.400" stroke="#858585" stroke-width="1"/></svg>
<div class="t" style="left:19px;top:502.5px;width:80.500px;overflow:hidden;color:#c0c0c0">ombre degradÃ© 2</div>
<div class="a" style="left:100px;top:501.5px;width:18px;height:13.3px;background:#3f3f3f;"></div>
<div class="a" style="left:119.3px;top:502.5px;width:1.8px;height:11px;background:#d6d6d6;border-radius:1px"></div>
<div class="a" style="left:125.800px;top:504.2px;width:8px;height:8px;border-radius:50%;background:#c6c6c6"></div>
<div class="a" style="left:140.0px;top:506.7px;width:3px;height:3px;border-radius:50%;background:#2c2c2c"></div>
<div class="a" style="left:151.3px;top:506.7px;width:3px;height:3px;border-radius:50%;background:#2c2c2c"></div>
<div class="a" style="left:162.7px;top:506.7px;width:3px;height:3px;border-radius:50%;background:#2c2c2c"></div>
<div class="a" style="left:174.0px;top:506.7px;width:3px;height:3px;border-radius:50%;background:#2c2c2c"></div>
<div class="a" style="left:195px;top:501px;width:17px;height:14.3px;background:#494949;"></div>
<svg style="left:198.5px;top:502.5px" width="10" height="11" viewBox="0 0 10 11"><circle cx="5" cy="5.700" r="3.500" fill="none" stroke="#8e8e8e" stroke-width=".9"/><path d="M1 10.500l8-9.500" stroke="#8e8e8e" stroke-width=".9"/></svg>
<div class="a" style="left:212.5px;top:501.5px;width:5.5px;height:13.3px;background:#5a5a5a;"></div>
<div class="a" style="left:214.5px;top:504.5px;width:1.5px;height:7px;background:#484848;"></div>
<div class="a" style="left:652.5px;top:501.5px;width:5.5px;height:13.3px;background:#5a5a5a;"></div>
<div class="a" style="left:654.5px;top:504.5px;width:1.5px;height:7px;background:#484848;"></div>
<div class="a" style="left:659px;top:501px;width:621px;height:14.3px;background:#79803e;"></div>
<svg style="left:662.5px;top:504.2px" width="9" height="8" viewBox="0 0 9 8"><path d="M.5 0v8M2.800 0v8" stroke="#b8b060" stroke-width="1"/><path d="M4.200 .5l4.300 3.500l-4.300 3.500z" fill="#b8b060"/></svg>
<div class="a" style="left:0px;top:517px;width:184px;height:14.3px;background:#494949;"></div>
<div class="a" style="left:0px;top:516px;width:3px;height:16px;background:#a9bf2c;"></div>
<svg style="left:7px;top:520.7px" width="7" height="7" viewBox="0 0 7 7"><circle cx="3.500" cy="3.500" r="3" fill="none" stroke="#858585" stroke-width="1.100"/><path d="M3.500 1.800v3.400M1.800 3.500h3.400" stroke="#858585" stroke-width="1"/></svg>
<div class="t" style="left:19px;top:518.5px;width:80.500px;overflow:hidden;color:#c0c0c0">ombre dÃ©gradÃ© 1</div>
<div class="a" style="left:100px;top:517.5px;width:18px;height:13.3px;background:#3f3f3f;"></div>
<div class="a" style="left:119.3px;top:518.5px;width:1.8px;height:11px;background:#d6d6d6;border-radius:1px"></div>
<div class="a" style="left:125.800px;top:520.2px;width:8px;height:8px;border-radius:50%;background:#c6c6c6"></div>
<div class="a" style="left:140.0px;top:522.7px;width:3px;height:3px;border-radius:50%;background:#2c2c2c"></div>
<div class="a" style="left:151.3px;top:522.7px;width:3px;height:3px;border-radius:50%;background:#2c2c2c"></div>
<div class="a" style="left:162.7px;top:522.7px;width:3px;height:3px;border-radius:50%;background:#2c2c2c"></div>
<div class="a" style="left:174.0px;top:522.7px;width:3px;height:3px;border-radius:50%;background:#2c2c2c"></div>
<div class="a" style="left:195px;top:517px;width:17px;height:14.3px;background:#494949;"></div>
<svg style="left:198.5px;top:518.5px" width="10" height="11" viewBox="0 0 10 11"><circle cx="5" cy="5.700" r="3.500" fill="none" stroke="#8e8e8e" stroke-width=".9"/><path d="M1 10.500l8-9.500" stroke="#8e8e8e" stroke-width=".9"/></svg>
<div class="a" style="left:212.5px;top:517.5px;width:5.5px;height:13.3px;background:#5a5a5a;"></div>
<div class="a" style="left:214.5px;top:520.5px;width:1.5px;height:7px;background:#484848;"></div>
<div class="a" style="left:652.5px;top:517.5px;width:5.5px;height:13.3px;background:#5a5a5a;"></div>
<div class="a" style="left:654.5px;top:520.5px;width:1.5px;height:7px;background:#484848;"></div>
<div class="a" style="left:659px;top:517px;width:621px;height:14.3px;background:#79803e;"></div>
<svg style="left:662.5px;top:520.2px" width="9" height="8" viewBox="0 0 9 8"><path d="M.5 0v8M2.800 0v8" stroke="#b8b060" stroke-width="1"/><path d="M4.200 .5l4.300 3.500l-4.300 3.500z" fill="#b8b060"/></svg>
<div class="a" style="left:0px;top:533px;width:184px;height:14.3px;background:#494949;"></div>
<div class="a" style="left:0px;top:532px;width:3px;height:16px;background:#a9bf2c;"></div>
<svg style="left:7px;top:536.7px" width="7" height="7" viewBox="0 0 7 7"><circle cx="3.500" cy="3.500" r="3" fill="none" stroke="#858585" stroke-width="1.100"/><path d="M3.500 1.800v3.400M1.800 3.500h3.400" stroke="#858585" stroke-width="1"/></svg>
<div class="t" style="left:19px;top:534.5px;width:80.500px;overflow:hidden;color:#c0c0c0">ombres</div>
<div class="a" style="left:100px;top:533.5px;width:18px;height:13.3px;background:#3f3f3f;"></div>
<div class="a" style="left:119.3px;top:534.5px;width:1.8px;height:11px;background:#d6d6d6;border-radius:1px"></div>
<div class="a" style="left:125.800px;top:536.2px;width:8px;height:8px;border-radius:50%;background:#c6c6c6"></div>
<div class="a" style="left:140.0px;top:538.7px;width:3px;height:3px;border-radius:50%;background:#2c2c2c"></div>
<div class="a" style="left:151.3px;top:538.7px;width:3px;height:3px;border-radius:50%;background:#2c2c2c"></div>
<div class="a" style="left:162.7px;top:538.7px;width:3px;height:3px;border-radius:50%;background:#2c2c2c"></div>
<div class="a" style="left:174.0px;top:538.7px;width:3px;height:3px;border-radius:50%;background:#2c2c2c"></div>
<div class="a" style="left:195px;top:533px;width:17px;height:14.3px;background:#494949;"></div>
<svg style="left:198.5px;top:534.5px" width="10" height="11" viewBox="0 0 10 11"><circle cx="5" cy="5.700" r="3.500" fill="none" stroke="#8e8e8e" stroke-width=".9"/><path d="M1 10.500l8-9.500" stroke="#8e8e8e" stroke-width=".9"/></svg>
<div class="a" style="left:212.5px;top:533.5px;width:5.5px;height:13.3px;background:#5a5a5a;"></div>
<div class="a" style="left:214.5px;top:536.5px;width:1.5px;height:7px;background:#484848;"></div>
<div class="a" style="left:652.5px;top:533.5px;width:5.5px;height:13.3px;background:#5a5a5a;"></div>
<div class="a" style="left:654.5px;top:536.5px;width:1.5px;height:7px;background:#484848;"></div>
<div class="a" style="left:659px;top:533px;width:621px;height:14.3px;background:#79803e;"></div>
<svg style="left:662.5px;top:536.2px" width="9" height="8" viewBox="0 0 9 8"><path d="M.5 0v8M2.800 0v8" stroke="#b8b060" stroke-width="1"/><path d="M4.200 .5l4.300 3.500l-4.300 3.500z" fill="#b8b060"/></svg>
<div class="a" style="left:0px;top:549px;width:184px;height:14.3px;background:#494949;"></div>
<div class="a" style="left:0px;top:548px;width:3px;height:16px;background:#a9bf2c;"></div>
<svg style="left:7px;top:552.7px" width="7" height="7" viewBox="0 0 7 7"><circle cx="3.500" cy="3.500" r="3" fill="none" stroke="#858585" stroke-width="1.100"/><path d="M3.500 1.800v3.400M1.800 3.500h3.400" stroke="#858585" stroke-width="1"/></svg>
<div class="t" style="left:19px;top:550.5px;width:80.500px;overflow:hidden;color:#c0c0c0">dÃ©gradÃ© global</div>
<div class="a" style="left:100px;top:549.5px;width:18px;height:13.3px;background:#3f3f3f;"></div>
<div class="a" style="left:119.3px;top:550.5px;width:1.8px;height:11px;background:#d6d6d6;border-radius:1px"></div>
<div class="a" style="left:125.800px;top:552.2px;width:8px;height:8px;border-radius:50%;background:#c6c6c6"></div>
<div class="a" style="left:140.0px;top:554.7px;width:3px;height:3px;border-radius:50%;background:#2c2c2c"></div>
<div class="a" style="left:151.3px;top:554.7px;width:3px;height:3px;border-radius:50%;background:#2c2c2c"></div>
<div class="a" style="left:162.7px;top:554.7px;width:3px;height:3px;border-radius:50%;background:#2c2c2c"></div>
<div class="a" style="left:174.0px;top:554.7px;width:3px;height:3px;border-radius:50%;background:#2c2c2c"></div>
<div class="a" style="left:195px;top:549px;width:17px;height:14.3px;background:#494949;"></div>
<svg style="left:198.5px;top:550.5px" width="10" height="11" viewBox="0 0 10 11"><circle cx="5" cy="5.700" r="3.500" fill="none" stroke="#8e8e8e" stroke-width=".9"/><path d="M1 10.500l8-9.500" stroke="#8e8e8e" stroke-width=".9"/></svg>
<div class="a" style="left:212.5px;top:549.5px;width:5.5px;height:13.3px;background:#5a5a5a;"></div>
<div class="a" style="left:214.5px;top:552.5px;width:1.5px;height:7px;background:#484848;"></div>
<div class="a" style="left:652.5px;top:549.5px;width:5.5px;height:13.3px;background:#5a5a5a;"></div>
<div class="a" style="left:654.5px;top:552.5px;width:1.5px;height:7px;background:#484848;"></div>
<div class="a" style="left:659px;top:549px;width:621px;height:14.3px;background:#79803e;"></div>
<svg style="left:662.5px;top:552.2px" width="9" height="8" viewBox="0 0 9 8"><path d="M.5 0v8M2.800 0v8" stroke="#b8b060" stroke-width="1"/><path d="M4.200 .5l4.300 3.500l-4.300 3.500z" fill="#b8b060"/></svg>
<div class="a" style="left:0px;top:565px;width:184px;height:14.3px;background:#494949;"></div>
<div class="a" style="left:0px;top:564px;width:3px;height:16px;background:#3a8fc0;"></div>
<svg style="left:7px;top:568.7px" width="7" height="7" viewBox="0 0 7 7"><circle cx="3.500" cy="3.500" r="3" fill="none" stroke="#858585" stroke-width="1.100"/><path d="M3.500 1.800v3.400M1.800 3.500h3.400" stroke="#858585" stroke-width="1"/></svg>
<div class="t" style="left:19px;top:566.5px;width:80.500px;overflow:hidden;color:#c0c0c0">texture_short g.png</div>
<div class="a" style="left:100px;top:565.5px;width:18px;height:13.3px;background:#3f3f3f;"></div>
<div class="a" style="left:119.3px;top:566.5px;width:1.8px;height:11px;background:#d6d6d6;border-radius:1px"></div>
<div class="a" style="left:125.800px;top:568.2px;width:8px;height:8px;border-radius:50%;background:#c6c6c6"></div>
<div class="a" style="left:140.0px;top:570.7px;width:3px;height:3px;border-radius:50%;background:#2c2c2c"></div>
<div class="a" style="left:151.3px;top:570.7px;width:3px;height:3px;border-radius:50%;background:#2c2c2c"></div>
<div class="a" style="left:162.7px;top:570.7px;width:3px;height:3px;border-radius:50%;background:#2c2c2c"></div>
<div class="a" style="left:174.0px;top:570.7px;width:3px;height:3px;border-radius:50%;background:#2c2c2c"></div>
<div class="a" style="left:195px;top:565px;width:17px;height:14.3px;background:#494949;"></div>
<svg style="left:198.5px;top:566.5px" width="10" height="11" viewBox="0 0 10 11"><circle cx="5" cy="5.700" r="3.500" fill="none" stroke="#8e8e8e" stroke-width=".9"/><path d="M1 10.500l8-9.500" stroke="#8e8e8e" stroke-width=".9"/></svg>
<div class="a" style="left:212.5px;top:565.5px;width:5.5px;height:13.3px;background:#5a5a5a;"></div>
<div class="a" style="left:214.5px;top:568.5px;width:1.5px;height:7px;background:#484848;"></div>
<div class="a" style="left:652.5px;top:565.5px;width:5.5px;height:13.3px;background:#5a5a5a;"></div>
<div class="a" style="left:654.5px;top:568.5px;width:1.5px;height:7px;background:#484848;"></div>
<div class="a" style="left:659px;top:565px;width:621px;height:14.3px;background:#494949;"></div>
<svg style="left:661.5px;top:566.5px" width="10" height="11" viewBox="0 0 10 11"><circle cx="5" cy="5.700" r="3.500" fill="none" stroke="#8e8e8e" stroke-width=".9"/><path d="M1 10.500l8-9.500" stroke="#8e8e8e" stroke-width=".9"/></svg>
<div class="a" style="left:0px;top:581px;width:184px;height:14.3px;background:#494949;"></div>
<div class="a" style="left:0px;top:580px;width:3px;height:16px;background:#3a8fc0;"></div>
<svg style="left:7px;top:584.7px" width="7" height="7" viewBox="0 0 7 7"><circle cx="3.500" cy="3.500" r="3" fill="none" stroke="#858585" stroke-width="1.100"/><path d="M3.500 1.800v3.400M1.800 3.500h3.400" stroke="#858585" stroke-width="1"/></svg>
<div class="t" style="left:19px;top:582.5px;width:80.500px;overflow:hidden;color:#c0c0c0">texture_visage.png</div>
<div class="a" style="left:100px;top:581.5px;width:18px;height:13.3px;background:#3f3f3f;"></div>
<div class="a" style="left:119.3px;top:582.5px;width:1.8px;height:11px;background:#d6d6d6;border-radius:1px"></div>
<div class="a" style="left:125.800px;top:584.2px;width:8px;height:8px;border-radius:50%;background:#c6c6c6"></div>
<div class="a" style="left:140.0px;top:586.7px;width:3px;height:3px;border-radius:50%;background:#2c2c2c"></div>
<div class="a" style="left:151.3px;top:586.7px;width:3px;height:3px;border-radius:50%;background:#2c2c2c"></div>
<div class="a" style="left:162.7px;top:586.7px;width:3px;height:3px;border-radius:50%;background:#2c2c2c"></div>
<div class="a" style="left:174.0px;top:586.7px;width:3px;height:3px;border-radius:50%;background:#2c2c2c"></div>
<div class="a" style="left:195px;top:581px;width:17px;height:14.3px;background:#494949;"></div>
<svg style="left:198.5px;top:582.5px" width="10" height="11" viewBox="0 0 10 11"><circle cx="5" cy="5.700" r="3.500" fill="none" stroke="#8e8e8e" stroke-width=".9"/><path d="M1 10.500l8-9.500" stroke="#8e8e8e" stroke-width=".9"/></svg>
<div class="a" style="left:212.5px;top:581.5px;width:5.5px;height:13.3px;background:#5a5a5a;"></div>
<div class="a" style="left:214.5px;top:584.5px;width:1.5px;height:7px;background:#484848;"></div>
<div class="a" style="left:652.5px;top:581.5px;width:5.5px;height:13.3px;background:#5a5a5a;"></div>
<div class="a" style="left:654.5px;top:584.5px;width:1.5px;height:7px;background:#484848;"></div>
<div class="a" style="left:659px;top:581px;width:621px;height:14.3px;background:#494949;"></div>
<svg style="left:661.5px;top:582.5px" width="10" height="11" viewBox="0 0 10 11"><circle cx="5" cy="5.700" r="3.500" fill="none" stroke="#8e8e8e" stroke-width=".9"/><path d="M1 10.500l8-9.500" stroke="#8e8e8e" stroke-width=".9"/></svg>
<div class="a" style="left:0px;top:597px;width:184px;height:14.3px;background:#494949;"></div>
<div class="a" style="left:0px;top:596px;width:3px;height:16px;background:#3a8fc0;"></div>
<svg style="left:7px;top:600.7px" width="7" height="7" viewBox="0 0 7 7"><circle cx="3.500" cy="3.500" r="3" fill="none" stroke="#858585" stroke-width="1.100"/><path d="M3.500 1.800v3.400M1.800 3.500h3.400" stroke="#858585" stroke-width="1"/></svg>
<div class="t" style="left:19px;top:598.5px;width:80.500px;overflow:hidden;color:#c0c0c0">textures_chapeau.png</div>
<div class="a" style="left:100px;top:597.5px;width:18px;height:13.3px;background:#3f3f3f;"></div>
<div class="a" style="left:119.3px;top:598.5px;width:1.8px;height:11px;background:#d6d6d6;border-radius:1px"></div>
<div class="a" style="left:125.800px;top:600.2px;width:8px;height:8px;border-radius:50%;background:#c6c6c6"></div>
<div class="a" style="left:140.0px;top:602.7px;width:3px;height:3px;border-radius:50%;background:#2c2c2c"></div>
<div class="a" style="left:151.3px;top:602.7px;width:3px;height:3px;border-radius:50%;background:#2c2c2c"></div>
<div class="a" style="left:162.7px;top:602.7px;width:3px;height:3px;border-radius:50%;background:#2c2c2c"></div>
<div class="a" style="left:174.0px;top:602.7px;width:3px;height:3px;border-radius:50%;background:#2c2c2c"></div>
<div class="a" style="left:195px;top:597px;width:17px;height:14.3px;background:#494949;"></div>
<svg style="left:198.5px;top:598.5px" width="10" height="11" viewBox="0 0 10 11"><circle cx="5" cy="5.700" r="3.500" fill="none" stroke="#8e8e8e" stroke-width=".9"/><path d="M1 10.500l8-9.500" stroke="#8e8e8e" stroke-width=".9"/></svg>
<div class="a" style="left:212.5px;top:597.5px;width:5.5px;height:13.3px;background:#5a5a5a;"></div>
<div class="a" style="left:214.5px;top:600.5px;width:1.5px;height:7px;background:#484848;"></div>
<div class="a" style="left:652.5px;top:597.5px;width:5.5px;height:13.3px;background:#5a5a5a;"></div>
<div class="a" style="left:654.5px;top:600.5px;width:1.5px;height:7px;background:#484848;"></div>
<div class="a" style="left:659px;top:597px;width:621px;height:14.3px;background:#494949;"></div>
<svg style="left:661.5px;top:598.5px" width="10" height="11" viewBox="0 0 10 11"><circle cx="5" cy="5.700" r="3.500" fill="none" stroke="#8e8e8e" stroke-width=".9"/><path d="M1 10.500l8-9.500" stroke="#8e8e8e" stroke-width=".9"/></svg>
<div class="a" style="left:0px;top:613px;width:184px;height:14.3px;background:#494949;"></div>
<div class="a" style="left:0px;top:612px;width:3px;height:16px;background:#3a8fc0;"></div>
<svg style="left:7px;top:616.7px" width="7" height="7" viewBox="0 0 7 7"><circle cx="3.500" cy="3.500" r="3" fill="none" stroke="#858585" stroke-width="1.100"/><path d="M3.500 1.800v3.400M1.800 3.500h3.400" stroke="#858585" stroke-width="1"/></svg>
<div class="t" style="left:19px;top:614.5px;width:80.500px;overflow:hidden;color:#c0c0c0">textures_angkor.png</div>
<div class="a" style="left:100px;top:613.5px;width:18px;height:13.3px;background:#3f3f3f;"></div>
<div class="a" style="left:119.3px;top:614.5px;width:1.8px;height:11px;background:#d6d6d6;border-radius:1px"></div>
<div class="a" style="left:125.800px;top:616.2px;width:8px;height:8px;border-radius:50%;background:#c6c6c6"></div>
<div class="a" style="left:140.0px;top:618.7px;width:3px;height:3px;border-radius:50%;background:#2c2c2c"></div>
<div class="a" style="left:151.3px;top:618.7px;width:3px;height:3px;border-radius:50%;background:#2c2c2c"></div>
<div class="a" style="left:162.7px;top:618.7px;width:3px;height:3px;border-radius:50%;background:#2c2c2c"></div>
<div class="a" style="left:174.0px;top:618.7px;width:3px;height:3px;border-radius:50%;background:#2c2c2c"></div>
<div class="a" style="left:195px;top:613px;width:17px;height:14.3px;background:#494949;"></div>
<svg style="left:198.5px;top:614.5px" width="10" height="11" viewBox="0 0 10 11"><circle cx="5" cy="5.700" r="3.500" fill="none" stroke="#8e8e8e" stroke-width=".9"/><path d="M1 10.500l8-9.500" stroke="#8e8e8e" stroke-width=".9"/></svg>
<div class="a" style="left:212.5px;top:613.5px;width:5.5px;height:13.3px;background:#5a5a5a;"></div>
<div class="a" style="left:214.5px;top:616.5px;width:1.5px;height:7px;background:#484848;"></div>
<div class="a" style="left:652.5px;top:613.5px;width:5.5px;height:13.3px;background:#5a5a5a;"></div>
<div class="a" style="left:654.5px;top:616.5px;width:1.5px;height:7px;background:#484848;"></div>
<div class="a" style="left:659px;top:613px;width:621px;height:14.3px;background:#494949;"></div>
<svg style="left:661.5px;top:614.5px" width="10" height="11" viewBox="0 0 10 11"><circle cx="5" cy="5.700" r="3.500" fill="none" stroke="#8e8e8e" stroke-width=".9"/><path d="M1 10.500l8-9.500" stroke="#8e8e8e" stroke-width=".9"/></svg>
<div class="a" style="left:0px;top:629px;width:184px;height:14.3px;background:#4f5c5e;"></div>
<div class="a" style="left:0px;top:628px;width:3px;height:16px;background:#3a8fc0;"></div>
<svg style="left:7px;top:632.7px" width="7" height="7" viewBox="0 0 7 7"><circle cx="3.500" cy="3.500" r="3" fill="none" stroke="#858585" stroke-width="1.100"/><path d="M3.500 1.800v3.400M1.800 3.500h3.400" stroke="#858585" stroke-width="1"/></svg>
<div class="t" style="left:19px;top:630.5px;width:80.500px;overflow:hidden;color:#c0c0c0">textures_short d.png</div>
<div class="a" style="left:100px;top:629.5px;width:18px;height:13.3px;background:#454f51;"></div>
<div class="a" style="left:119.3px;top:630.5px;width:1.8px;height:11px;background:#d6d6d6;border-radius:1px"></div>
<div class="a" style="left:125.800px;top:632.2px;width:8px;height:8px;border-radius:50%;background:#c6c6c6"></div>
<div class="a" style="left:140.0px;top:634.7px;width:3px;height:3px;border-radius:50%;background:#2c2c2c"></div>
<div class="a" style="left:151.3px;top:634.7px;width:3px;height:3px;border-radius:50%;background:#2c2c2c"></div>
<div class="a" style="left:162.7px;top:634.7px;width:3px;height:3px;border-radius:50%;background:#2c2c2c"></div>
<div class="a" style="left:174.0px;top:634.7px;width:3px;height:3px;border-radius:50%;background:#2c2c2c"></div>
<div class="a" style="left:195px;top:629px;width:17px;height:14.3px;background:#4f5c5e;"></div>
<svg style="left:198.5px;top:630.5px" width="10" height="11" viewBox="0 0 10 11"><circle cx="5" cy="5.700" r="3.500" fill="none" stroke="#8e8e8e" stroke-width=".9"/><path d="M1 10.500l8-9.500" stroke="#8e8e8e" stroke-width=".9"/></svg>
<div class="a" style="left:212.5px;top:629.5px;width:5.5px;height:13.3px;background:#5a5a5a;"></div>
<div class="a" style="left:214.5px;top:632.5px;width:1.5px;height:7px;background:#484848;"></div>
<div class="a" style="left:652.5px;top:629.5px;width:5.5px;height:13.3px;background:#5a5a5a;"></div>
<div class="a" style="left:654.5px;top:632.5px;width:1.5px;height:7px;background:#484848;"></div>
<div class="a" style="left:659px;top:629px;width:621px;height:14.3px;background:#4f5c5e;"></div>
<svg style="left:661.5px;top:630.5px" width="10" height="11" viewBox="0 0 10 11"><circle cx="5" cy="5.700" r="3.500" fill="none" stroke="#8e8e8e" stroke-width=".9"/><path d="M1 10.500l8-9.500" stroke="#8e8e8e" stroke-width=".9"/></svg>
<div class="a" style="left:184.5px;top:485px;width:10.5px;height:160px;background:#5d5d5d;"></div>
<div class="a" style="left:184.5px;top:645px;width:10.5px;height:38px;background:#484848;"></div>
<svg style="left:186px;top:562px" width="8" height="7" viewBox="0 0 8 7"><path d="M0 .5h8M0 3h8M0 5.500h8" stroke="#444" stroke-width=".8"/></svg>
<div class="c cy" style="left:219.07px;top:486px"><i class="n1"></i><i class="n2"></i></div>
<div class="c cy" style="left:246.10px;top:486px"><i class="n1"></i><i class="n2"></i></div>
<div class="c cy" style="left:273.13px;top:486px"><i class="n1"></i><i class="n2"></i></div>
<div class="c cy" style="left:300.16px;top:486px"><i class="n1"></i><i class="n2"></i></div>
<div class="c cy" style="left:327.19px;top:486px"><i class="n1"></i><i class="n2"></i></div>
<div class="c cy" style="left:354.22px;top:486px"><i class="n1"></i><i class="n2"></i></div>
<div class="c cy" style="left:381.25px;top:486px"><i class="n1"></i><i class="n2"></i></div>
<div class="c cy" style="left:408.28px;top:486px"><i class="n1"></i><i class="n2"></i></div>
<div class="c cy" style="left:435.31px;top:486px"><i class="n1"></i><i class="n2"></i></div>
<div class="c cy" style="left:462.34px;top:486px"><i class="n1"></i><i class="n2"></i></div>
<div class="c cy" style="left:489.37px;top:486px"><i class="n1"></i><i class="n2"></i></div>
<div class="c cy" style="left:516.40px;top:486px"><i class="n1"></i><i class="n2"></i></div>
<div class="c cy" style="left:543.43px;top:486px"><i class="n1"></i><i class="n2"></i></div>
<div class="c cy" style="left:570.46px;top:486px"><i class="n1"></i><i class="n2"></i></div>
<div class="c cy" style="left:597.49px;top:486px"><i class="n1"></i><i class="n2"></i></div>
<div class="c cy" style="left:624.52px;top:486px"><i class="n1"></i><i class="n2"></i></div>
<div class="c co" style="left:219.07px;top:502px"><i class="n1"></i><i class="n2"></i></div>
<div class="c co" style="left:246.10px;top:502px"><i class="n1"></i><i class="n2"></i></div>
<div class="c co" style="left:273.13px;top:502px"><i class="n1"></i><i class="n2"></i></div>
<div class="c co" style="left:300.16px;top:502px"><i class="n1"></i><i class="n2"></i></div>
<div class="c co" style="left:327.19px;top:502px"><i class="n1"></i><i class="n2"></i></div>
<div class="c co" style="left:354.22px;top:502px"><i class="n1"></i><i class="n2"></i></div>
<div class="c co" style="left:381.25px;top:502px"><i class="n1"></i><i class="n2"></i></div>
<div class="c co" style="left:408.28px;top:502px"><i class="n1"></i><i class="n2"></i></div>
<div class="c co" style="left:435.31px;top:502px"><i class="n1"></i><i class="n2"></i></div>
<div class="c co" style="left:462.34px;top:502px"><i class="n1"></i><i class="n2"></i></div>
<div class="c co" style="left:489.37px;top:502px"><i class="n1"></i><i class="n2"></i></div>
<div class="c co" style="left:516.40px;top:502px"><i class="n1"></i><i class="n2"></i></div>
<div class="c co" style="left:543.43px;top:502px"><i class="n1"></i><i class="n2"></i></div>
<div class="c co" style="left:570.46px;top:502px"><i class="n1"></i><i class="n2"></i></div>
<div class="c co" style="left:597.49px;top:502px"><i class="n1"></i><i class="n2"></i></div>
<div class="c co" style="left:624.52px;top:502px"><i class="n1"></i><i class="n2"></i></div>
<div class="c co" style="left:219.07px;top:518px"><i class="n1"></i><i class="n2"></i></div>
<div class="c co" style="left:246.10px;top:518px"><i class="n1"></i><i class="n2"></i></div>
<div class="c co" style="left:273.13px;top:518px"><i class="n1"></i><i class="n2"></i></div>
<div class="c co" style="left:300.16px;top:518px"><i class="n1"></i><i class="n2"></i></div>
<div class="c co" style="left:327.19px;top:518px"><i class="n1"></i><i class="n2"></i></div>
<div class="c co" style="left:354.22px;top:518px"><i class="n1"></i><i class="n2"></i></div>
<div class="c co" style="left:381.25px;top:518px"><i class="n1"></i><i class="n2"></i></div>
<div class="c co" style="left:408.28px;top:518px"><i class="n1"></i><i class="n2"></i></div>
<div class="c co" style="left:435.31px;top:518px"><i class="n1"></i><i class="n2"></i></div>
<div class="c co" style="left:462.34px;top:518px"><i class="n1"></i><i class="n2"></i></div>
<div class="c co" style="left:489.37px;top:518px"><i class="n1"></i><i class="n2"></i></div>
<div class="c co" style="left:516.40px;top:518px"><i class="n1"></i><i class="n2"></i></div>
<div class="c co" style="left:543.43px;top:518px"><i class="n1"></i><i class="n2"></i></div>
<div class="c co" style="left:570.46px;top:518px"><i class="n1"></i><i class="n2"></i></div>
<div class="c co" style="left:597.49px;top:518px"><i class="n1"></i><i class="n2"></i></div>
<div class="c co" style="left:624.52px;top:518px"><i class="n1"></i><i class="n2"></i></div>
<div class="c co" style="left:219.07px;top:534px"><i class="n1"></i><i class="n2"></i></div>
<div class="c co" style="left:246.10px;top:534px"><i class="n1"></i><i class="n2"></i></div>
<div class="c co" style="left:273.13px;top:534px"><i class="n1"></i><i class="n2"></i></div>
<div class="c co" style="left:300.16px;top:534px"><i class="n1"></i><i class="n2"></i></div>
<div class="c co" style="left:327.19px;top:534px"><i class="n1"></i><i class="n2"></i></div>
<div class="c co" style="left:354.22px;top:534px"><i class="n1"></i><i class="n2"></i></div>
<div class="c co" style="left:381.25px;top:534px"><i class="n1"></i><i class="n2"></i></div>
<div class="c co" style="left:408.28px;top:534px"><i class="n1"></i><i class="n2"></i></div>
<div class="c co" style="left:435.31px;top:534px"><i class="n1"></i><i class="n2"></i></div>
<div class="c co" style="left:462.34px;top:534px"><i class="n1"></i><i class="n2"></i></div>
<div class="c co" style="left:489.37px;top:534px"><i class="n1"></i><i class="n2"></i></div>
<div class="c co" style="left:516.40px;top:534px"><i class="n1"></i><i class="n2"></i></div>
<div class="c co" style="left:543.43px;top:534px"><i class="n1"></i><i class="n2"></i></div>
<div class="c co" style="left:570.46px;top:534px"><i class="n1"></i><i class="n2"></i></div>
<div class="c co" style="left:597.49px;top:534px"><i class="n1"></i><i class="n2"></i></div>
<div class="c co" style="left:624.52px;top:534px"><i class="n1"></i><i class="n2"></i></div>
<div class="c co" style="left:219.07px;top:550px"><i class="n1"></i><i class="n2"></i></div>
<div class="c co" style="left:246.10px;top:550px"><i class="n1"></i><i class="n2"></i></div>
<div class="c co" style="left:273.13px;top:550px"><i class="n1"></i><i class="n2"></i></div>
<div class="c co" style="left:300.16px;top:550px"><i class="n1"></i><i class="n2"></i></div>
<div class="c co" style="left:327.19px;top:550px"><i class="n1"></i><i class="n2"></i></div>
<div class="c co" style="left:354.22px;top:550px"><i class="n1"></i><i class="n2"></i></div>
<div class="c co" style="left:381.25px;top:550px"><i class="n1"></i><i class="n2"></i></div>
<div class="c co" style="left:408.28px;top:550px"><i class="n1"></i><i class="n2"></i></div>
<div class="c co" style="left:435.31px;top:550px"><i class="n1"></i><i class="n2"></i></div>
<div class="c co" style="left:462.34px;top:550px"><i class="n1"></i><i class="n2"></i></div>
<div class="c co" style="left:489.37px;top:550px"><i class="n1"></i><i class="n2"></i></div>
<div class="c co" style="left:516.40px;top:550px"><i class="n1"></i><i class="n2"></i></div>
<div class="c co" style="left:543.43px;top:550px"><i class="n1"></i><i class="n2"></i></div>
<div class="c co" style="left:570.46px;top:550px"><i class="n1"></i><i class="n2"></i></div>
<div class="c co" style="left:597.49px;top:550px"><i class="n1"></i><i class="n2"></i></div>
<div class="c co" style="left:624.52px;top:550px"><i class="n1"></i><i class="n2"></i></div>
<div class="c cb" style="left:219.07px;top:566px"><i class="n1"></i><i class="n2"></i></div>
<div class="c cb" style="left:246.10px;top:566px"><i class="n1"></i><i class="n2"></i></div>
<div class="c cb" style="left:273.13px;top:566px"><i class="n1"></i><i class="n2"></i></div>
<div class="c cb" style="left:300.16px;top:566px"><i class="n1"></i><i class="n2"></i></div>
<div class="c cb" style="left:327.19px;top:566px"><i class="n1"></i><i class="n2"></i></div>
<div class="c cb" style="left:354.22px;top:566px"><i class="n1"></i><i class="n2"></i></div>
<div class="c cb" style="left:381.25px;top:566px"><i class="n1"></i><i class="n2"></i></div>
<div class="c cb" style="left:408.28px;top:566px"><i class="n1"></i><i class="n2"></i></div>
<div class="c cb" style="left:435.31px;top:566px"><i class="n1"></i><i class="n2"></i></div>
<div class="c cb" style="left:462.34px;top:566px"><i class="n1"></i><i class="n2"></i></div>
<div class="c cb" style="left:489.37px;top:566px"><i class="n1"></i><i class="n2"></i></div>
<div class="c cb" style="left:516.40px;top:566px"><i class="n1"></i><i class="n2"></i></div>
<div class="c cb" style="left:543.43px;top:566px"><i class="n1"></i><i class="n2"></i></div>
<div class="c cb" style="left:570.46px;top:566px"><i class="n1"></i><i class="n2"></i></div>
<div class="c cb" style="left:597.49px;top:566px"><i class="n1"></i><i class="n2"></i></div>
<div class="c cb" style="left:624.52px;top:566px"><i class="n1"></i><i class="n2"></i></div>
<div class="c cb" style="left:219.07px;top:582px"><i class="n1"></i><i class="n2"></i></div>
<div class="c cb" style="left:246.10px;top:582px"><i class="n1"></i><i class="n2"></i></div>
<div class="c cb" style="left:273.13px;top:582px"><i class="n1"></i><i class="n2"></i></div>
<div class="c cb" style="left:300.16px;top:582px"><i class="n1"></i><i class="n2"></i></div>
<div class="c cb" style="left:327.19px;top:582px"><i class="n1"></i><i class="n2"></i></div>
<div class="c cb" style="left:354.22px;top:582px"><i class="n1"></i><i class="n2"></i></div>
<div class="c cb" style="left:381.25px;top:582px"><i class="n1"></i><i class="n2"></i></div>
<div class="c cb" style="left:408.28px;top:582px"><i class="n1"></i><i class="n2"></i></div>
<div class="c cb" style="left:435.31px;top:582px"><i class="n1"></i><i class="n2"></i></div>
<div class="c cb" style="left:462.34px;top:582px"><i class="n1"></i><i class="n2"></i></div>
<div class="c cb" style="left:489.37px;top:582px"><i class="n1"></i><i class="n2"></i></div>
<div class="c cb" style="left:516.40px;top:582px"><i class="n1"></i><i class="n2"></i></div>
<div class="c cb" style="left:543.43px;top:582px"><i class="n1"></i><i class="n2"></i></div>
<div class="c cb" style="left:570.46px;top:582px"><i class="n1"></i><i class="n2"></i></div>
<div class="c cb" style="left:597.49px;top:582px"><i class="n1"></i><i class="n2"></i></div>
<div class="c cb" style="left:624.52px;top:582px"><i class="n1"></i><i class="n2"></i></div>
<div class="c cb" style="left:219.07px;top:598px"><i class="n1"></i><i class="n2"></i></div>
<div class="c cb" style="left:246.10px;top:598px"><i class="n1"></i><i class="n2"></i></div>
<div class="c cb" style="left:273.13px;top:598px"><i class="n1"></i><i class="n2"></i></div>
<div class="c cb" style="left:300.16px;top:598px"><i class="n1"></i><i class="n2"></i></div>
<div class="c cb" style="left:327.19px;top:598px"><i class="n1"></i><i class="n2"></i></div>
<div class="c cb" style="left:354.22px;top:598px"><i class="n1"></i><i class="n2"></i></div>
<div class="c cb" style="left:381.25px;top:598px"><i class="n1"></i><i class="n2"></i></div>
<div class="c cb" style="left:408.28px;top:598px"><i class="n1"></i><i class="n2"></i></div>
<div class="c cb" style="left:435.31px;top:598px"><i class="n1"></i><i class="n2"></i></div>
<div class="c cb" style="left:462.34px;top:598px"><i class="n1"></i><i class="n2"></i></div>
<div class="c cb" style="left:489.37px;top:598px"><i class="n1"></i><i class="n2"></i></div>
<div class="c cb" style="left:516.40px;top:598px"><i class="n1"></i><i class="n2"></i></div>
<div class="c cb" style="left:543.43px;top:598px"><i class="n1"></i><i class="n2"></i></div>
<div class="c cb" style="left:570.46px;top:598px"><i class="n1"></i><i class="n2"></i></div>
<div class="c cb" style="left:597.49px;top:598px"><i class="n1"></i><i class="n2"></i></div>
<div class="c cb" style="left:624.52px;top:598px"><i class="n1"></i><i class="n2"></i></div>
<div class="c cb" style="left:219.07px;top:614px"><i class="n1"></i><i class="n2"></i></div>
<div class="c cb" style="left:246.10px;top:614px"><i class="n1"></i><i class="n2"></i></div>
<div class="c cb" style="left:273.13px;top:614px"><i class="n1"></i><i class="n2"></i></div>
<div class="c cb" style="left:300.16px;top:614px"><i class="n1"></i><i class="n2"></i></div>
<div class="c cb" style="left:327.19px;top:614px"><i class="n1"></i><i class="n2"></i></div>
<div class="c cb" style="left:354.22px;top:614px"><i class="n1"></i><i class="n2"></i></div>
<div class="c cb" style="left:381.25px;top:614px"><i class="n1"></i><i class="n2"></i></div>
<div class="c cb" style="left:408.28px;top:614px"><i class="n1"></i><i class="n2"></i></div>
<div class="c cb" style="left:435.31px;top:614px"><i class="n1"></i><i class="n2"></i></div>
<div class="c cb" style="left:462.34px;top:614px"><i class="n1"></i><i class="n2"></i></div>
<div class="c cb" style="left:489.37px;top:614px"><i class="n1"></i><i class="n2"></i></div>
<div class="c cb" style="left:516.40px;top:614px"><i class="n1"></i><i class="n2"></i></div>
<div class="c cb" style="left:543.43px;top:614px"><i class="n1"></i><i class="n2"></i></div>
<div class="c cb" style="left:570.46px;top:614px"><i class="n1"></i><i class="n2"></i></div>
<div class="c cb" style="left:597.49px;top:614px"><i class="n1"></i><i class="n2"></i></div>
<div class="c cb" style="left:624.52px;top:614px"><i class="n1"></i><i class="n2"></i></div>
<div class="c cb" style="left:219.07px;top:630px"><i class="n1"></i><i class="n2"></i></div>
<div class="c cb" style="left:246.10px;top:630px"><i class="n1"></i><i class="n2"></i></div>
<div class="c cb" style="left:273.13px;top:630px"><i class="n1"></i><i class="n2"></i></div>
<div class="c cb" style="left:300.16px;top:630px"><i class="n1"></i><i class="n2"></i></div>
<div class="c cb" style="left:327.19px;top:630px"><i class="n1"></i><i class="n2"></i></div>
<div class="c cb" style="left:354.22px;top:630px"><i class="n1"></i><i class="n2"></i></div>
<div class="c cb" style="left:381.25px;top:630px"><i class="n1"></i><i class="n2"></i></div>
<div class="c cb" style="left:408.28px;top:630px"><i class="n1"></i><i class="n2"></i></div>
<div class="c cb" style="left:435.31px;top:630px"><i class="n1"></i><i class="n2"></i></div>
<div class="c cb" style="left:462.34px;top:630px"><i class="n1"></i><i class="n2"></i></div>
<div class="c cb" style="left:489.37px;top:630px"><i class="n1"></i><i class="n2"></i></div>
<div class="c cb" style="left:516.40px;top:630px"><i class="n1"></i><i class="n2"></i></div>
<div class="c cb" style="left:543.43px;top:630px"><i class="n1"></i><i class="n2"></i></div>
<div class="c cb" style="left:570.46px;top:630px"><i class="n1"></i><i class="n2"></i></div>
<div class="c cb" style="left:597.49px;top:630px"><i class="n1"></i><i class="n2"></i></div>
<div class="c cb" style="left:624.52px;top:630px"><i class="n1"></i><i class="n2"></i></div>
<div class="a" style="left:0px;top:645.5px;width:184px;height:38px;background:#494949;"></div>
<div class="a" style="left:0px;top:644.5px;width:3px;height:39px;background:#c02626;"></div>
<svg style="left:7px;top:648.0px" width="7" height="7" viewBox="0 0 7 7"><circle cx="3.500" cy="3.500" r="3.200" fill="#858585"/><path d="M1.500 3.500h4" stroke="#494949" stroke-width="1.100"/></svg>
<div class="t" style="left:19px;top:646.5px;color:#c8c8c8;">couleurs</div>
<div class="a" style="left:16px;top:662px;width:35.5px;height:21.5px;background:#ffffff;"></div>
<svg style="left:16px;top:662px" width="35.5" height="21.5" viewBox="350 52 567 343" preserveAspectRatio="none"><ellipse cx="643.5" cy="100.5" rx="27" ry="12" transform="rotate(-8 643.5 100.5)" fill="#dcc257"/><path d="M593 270L580 278L571 290L575 304L583 287L597 279z" fill="#8d5a2a"/><path d="M613 117L604 143L588 171L604 163L620 154L629 143L640 112z" fill="#4a2f18"/><path d="M603 279L627 268L632 294L637 323L646 342L656 355L644 363L630 358L618 342L609 313z" fill="#99632f"/><path d="M582 253L616 243L631 255L637 264L627 270L601 280L592 268z" fill="#ef8560"/><path d="M622 154L587 175L564 200L554 234L573 255L615 243L630 256L633 221L664 207L655 179L651 167z" fill="#c4c04f"/><path d="M586 176L600 166L623 190L642 187L656 178L664 207L648 217L642 199L611 216L599 200z" fill="#d3e8d6"/><path d="M600 227L633 218L630 256L614 242L600 243z" fill="#d3e8d6"/><path d="M577 214L599 206L588 248L575 245z" fill="#a4562a"/><path d="M645 219L663 211L686 213L698 218L700 226L696 231L693 223L672 225L663 231z" fill="#b67a3c"/><path d="M636 114L673 110L678 123L676 135L671 146L664 158L651 155L638 145L626 130z" fill="#bf8241"/><path d="M673 109L684 113L685 140L671 179L676 150L680 128z" fill="#4a2f18"/><ellipse cx="645.6" cy="115" rx="81" ry="19" transform="rotate(-8.3 645.6 115)" fill="#cfa233"/><path d="M611 126C616 112 640 106 656 107L686 112L684 128L676 135L671 146L664 158L651 155L638 145L628 147L604 160z" fill="#bf8241"/><path d="M611 126C616 112 640 106 660 107L645 118L636 128L630 124L623 132L624 146L604 163L604 143z" fill="#4a2f18"/><path d="M673 108L686 112L685 140L671 179L676 150L680 128z" fill="#4a2f18"/><ellipse cx="651" cy="136" rx="9" ry="6" fill="#e4581f" opacity=".5"/></svg>
<div class="a" style="left:67.800px;top:665px;width:2.400px;height:2.400px;border-radius:50%;background:#2c2c2c"></div>
<svg style="left:77px;top:662.5px" width="22" height="8" viewBox="0 0 22 8"><path d="M0 0h4v3h3v5h-7zM5 0h4l-2 4l2 4h-4l2-4z" fill="#d8d8d8"/><path d="M12 0h3.500v8h-3.500z" fill="#d8d8d8"/><path d="M17 4h5M19.500 1.500v5" stroke="#d8d8d8" stroke-width="1.300"/></svg>
<div class="a" style="left:125.800px;top:662.200px;width:8px;height:8px;border-radius:50%;background:#c6c6c6"></div>
<div class="a" style="left:140.3px;top:665px;width:2.400px;height:2.400px;border-radius:50%;background:#2c2c2c"></div>
<div class="a" style="left:174.3px;top:665px;width:2.400px;height:2.400px;border-radius:50%;background:#2c2c2c"></div>
<div class="a" style="left:126px;top:674px;width:55px;height:9.5px;background:#545454;"></div>
<div class="a" style="left:179px;top:674.5px;width:1.5px;height:9px;background:#e0e0e0;"></div>
<div class="t" style="left:78px;top:674px;color:#262626;">Color</div>
<svg style="left:112px;top:676px" width="6" height="6" viewBox="0 0 6 6"><circle cx="3" cy="3" r="2.600" fill="none" stroke="#808080" stroke-width=".9"/><path d="M1.500 3h3" stroke="#808080" stroke-width=".9"/></svg>
<div class="t" style="left:128px;top:674px;color:#b8b8b8;">100%</div>
<div class="a" style="left:195px;top:645.5px;width:464px;height:38px;background:#444444;"></div>
<div class="a" style="left:659px;top:645.5px;width:621px;height:38px;background:#454545;"></div>
<svg style="left:212px;top:664px" width="6" height="10" viewBox="0 0 6 10"><path d="M5 .8l-4 2.500v6h4" fill="none" stroke="#626262" stroke-width="1.300"/></svg>
<svg style="left:652.5px;top:647px" width="6" height="14" viewBox="0 0 6 14"><path d="M.5 .5h4v6l-3 4" fill="none" stroke="#5e5e5e" stroke-width="1.100"/></svg>
<div class="cc" style="left:219.07px"><i class="n1"></i><i class="n2"></i><svg style="left:0px;top:5.5px" width="26.1" height="16" viewBox="350 52 567 343" preserveAspectRatio="none"><ellipse cx="643.5" cy="100.5" rx="27" ry="12" transform="rotate(-8 643.5 100.5)" fill="#dcc257"/><path d="M593 270L580 278L571 290L575 304L583 287L597 279z" fill="#8d5a2a"/><path d="M613 117L604 143L588 171L604 163L620 154L629 143L640 112z" fill="#4a2f18"/><path d="M603 279L627 268L632 294L637 323L646 342L656 355L644 363L630 358L618 342L609 313z" fill="#99632f"/><path d="M582 253L616 243L631 255L637 264L627 270L601 280L592 268z" fill="#ef8560"/><path d="M622 154L587 175L564 200L554 234L573 255L615 243L630 256L633 221L664 207L655 179L651 167z" fill="#c4c04f"/><path d="M586 176L600 166L623 190L642 187L656 178L664 207L648 217L642 199L611 216L599 200z" fill="#d3e8d6"/><path d="M600 227L633 218L630 256L614 242L600 243z" fill="#d3e8d6"/><path d="M577 214L599 206L588 248L575 245z" fill="#a4562a"/><path d="M645 219L663 211L686 213L698 218L700 226L696 231L693 223L672 225L663 231z" fill="#b67a3c"/><path d="M636 114L673 110L678 123L676 135L671 146L664 158L651 155L638 145L626 130z" fill="#bf8241"/><path d="M673 109L684 113L685 140L671 179L676 150L680 128z" fill="#4a2f18"/><ellipse cx="645.6" cy="115" rx="81" ry="19" transform="rotate(-8.3 645.6 115)" fill="#cfa233"/><path d="M611 126C616 112 640 106 656 107L686 112L684 128L676 135L671 146L664 158L651 155L638 145L628 147L604 160z" fill="#bf8241"/><path d="M611 126C616 112 640 106 660 107L645 118L636 128L630 124L623 132L624 146L604 163L604 143z" fill="#4a2f18"/><path d="M673 108L686 112L685 140L671 179L676 150L680 128z" fill="#4a2f18"/><ellipse cx="651" cy="136" rx="9" ry="6" fill="#e4581f" opacity=".5"/></svg></div>
<div class="a" style="left:245.37px;top:674px;width:0.8px;height:9.5px;background:#3a3a3a;"></div>
<div class="cc" style="left:246.10px"><i class="n1"></i><i class="n2"></i><svg style="left:0px;top:5.5px" width="26.1" height="16" viewBox="350 52 567 343" preserveAspectRatio="none"><ellipse cx="643.5" cy="100.5" rx="27" ry="12" transform="rotate(-8 643.5 100.5)" fill="#dcc257"/><path d="M593 270L580 278L571 290L575 304L583 287L597 279z" fill="#8d5a2a"/><path d="M613 117L604 143L588 171L604 163L620 154L629 143L640 112z" fill="#4a2f18"/><path d="M603 279L627 268L632 294L637 323L646 342L656 355L644 363L630 358L618 342L609 313z" fill="#99632f"/><path d="M582 253L616 243L631 255L637 264L627 270L601 280L592 268z" fill="#ef8560"/><path d="M622 154L587 175L564 200L554 234L573 255L615 243L630 256L633 221L664 207L655 179L651 167z" fill="#c4c04f"/><path d="M586 176L600 166L623 190L642 187L656 178L664 207L648 217L642 199L611 216L599 200z" fill="#d3e8d6"/><path d="M600 227L633 218L630 256L614 242L600 243z" fill="#d3e8d6"/><path d="M577 214L599 206L588 248L575 245z" fill="#a4562a"/><path d="M645 219L663 211L686 213L698 218L700 226L696 231L693 223L672 225L663 231z" fill="#b67a3c"/><path d="M636 114L673 110L678 123L676 135L671 146L664 158L651 155L638 145L626 130z" fill="#bf8241"/><path d="M673 109L684 113L685 140L671 179L676 150L680 128z" fill="#4a2f18"/><ellipse cx="645.6" cy="115" rx="81" ry="19" transform="rotate(-8.3 645.6 115)" fill="#cfa233"/><path d="M611 126C616 112 640 106 656 107L686 112L684 128L676 135L671 146L664 158L651 155L638 145L628 147L604 160z" fill="#bf8241"/><path d="M611 126C616 112 640 106 660 107L645 118L636 128L630 124L623 132L624 146L604 163L604 143z" fill="#4a2f18"/><path d="M673 108L686 112L685 140L671 179L676 150L680 128z" fill="#4a2f18"/><ellipse cx="651" cy="136" rx="9" ry="6" fill="#e4581f" opacity=".5"/></svg></div>
<div class="a" style="left:272.4px;top:674px;width:0.8px;height:9.5px;background:#3a3a3a;"></div>
<div class="cc" style="left:273.13px"><i class="n1"></i><i class="n2"></i><svg style="left:0px;top:5.5px" width="26.1" height="16" viewBox="350 52 567 343" preserveAspectRatio="none"><ellipse cx="643.5" cy="100.5" rx="27" ry="12" transform="rotate(-8 643.5 100.5)" fill="#dcc257"/><path d="M593 270L580 278L571 290L575 304L583 287L597 279z" fill="#8d5a2a"/><path d="M613 117L604 143L588 171L604 163L620 154L629 143L640 112z" fill="#4a2f18"/><path d="M603 279L627 268L632 294L637 323L646 342L656 355L644 363L630 358L618 342L609 313z" fill="#99632f"/><path d="M582 253L616 243L631 255L637 264L627 270L601 280L592 268z" fill="#ef8560"/><path d="M622 154L587 175L564 200L554 234L573 255L615 243L630 256L633 221L664 207L655 179L651 167z" fill="#c4c04f"/><path d="M586 176L600 166L623 190L642 187L656 178L664 207L648 217L642 199L611 216L599 200z" fill="#d3e8d6"/><path d="M600 227L633 218L630 256L614 242L600 243z" fill="#d3e8d6"/><path d="M577 214L599 206L588 248L575 245z" fill="#a4562a"/><path d="M645 219L663 211L686 213L698 218L700 226L696 231L693 223L672 225L663 231z" fill="#b67a3c"/><path d="M636 114L673 110L678 123L676 135L671 146L664 158L651 155L638 145L626 130z" fill="#bf8241"/><path d="M673 109L684 113L685 140L671 179L676 150L680 128z" fill="#4a2f18"/><ellipse cx="645.6" cy="115" rx="81" ry="19" transform="rotate(-8.3 645.6 115)" fill="#cfa233"/><path d="M611 126C616 112 640 106 656 107L686 112L684 128L676 135L671 146L664 158L651 155L638 145L628 147L604 160z" fill="#bf8241"/><path d="M611 126C616 112 640 106 660 107L645 118L636 128L630 124L623 132L624 146L604 163L604 143z" fill="#4a2f18"/><path d="M673 108L686 112L685 140L671 179L676 150L680 128z" fill="#4a2f18"/><ellipse cx="651" cy="136" rx="9" ry="6" fill="#e4581f" opacity=".5"/></svg></div>
<div class="a" style="left:299.43px;top:674px;width:0.8px;height:9.5px;background:#3a3a3a;"></div>
<div class="cc" style="left:300.16px"><i class="n1"></i><i class="n2"></i><svg style="left:0px;top:5.5px" width="26.1" height="16" viewBox="350 52 567 343" preserveAspectRatio="none"><ellipse cx="643.5" cy="100.5" rx="27" ry="12" transform="rotate(-8 643.5 100.5)" fill="#dcc257"/><path d="M593 270L580 278L571 290L575 304L583 287L597 279z" fill="#8d5a2a"/><path d="M613 117L604 143L588 171L604 163L620 154L629 143L640 112z" fill="#4a2f18"/><path d="M603 279L627 268L632 294L637 323L646 342L656 355L644 363L630 358L618 342L609 313z" fill="#99632f"/><path d="M582 253L616 243L631 255L637 264L627 270L601 280L592 268z" fill="#ef8560"/><path d="M622 154L587 175L564 200L554 234L573 255L615 243L630 256L633 221L664 207L655 179L651 167z" fill="#c4c04f"/><path d="M586 176L600 166L623 190L642 187L656 178L664 207L648 217L642 199L611 216L599 200z" fill="#d3e8d6"/><path d="M600 227L633 218L630 256L614 242L600 243z" fill="#d3e8d6"/><path d="M577 214L599 206L588 248L575 245z" fill="#a4562a"/><path d="M645 219L663 211L686 213L698 218L700 226L696 231L693 223L672 225L663 231z" fill="#b67a3c"/><path d="M636 114L673 110L678 123L676 135L671 146L664 158L651 155L638 145L626 130z" fill="#bf8241"/><path d="M673 109L684 113L685 140L671 179L676 150L680 128z" fill="#4a2f18"/><ellipse cx="645.6" cy="115" rx="81" ry="19" transform="rotate(-8.3 645.6 115)" fill="#cfa233"/><path d="M611 126C616 112 640 106 656 107L686 112L684 128L676 135L671 146L664 158L651 155L638 145L628 147L604 160z" fill="#bf8241"/><path d="M611 126C616 112 640 106 660 107L645 118L636 128L630 124L623 132L624 146L604 163L604 143z" fill="#4a2f18"/><path d="M673 108L686 112L685 140L671 179L676 150L680 128z" fill="#4a2f18"/><ellipse cx="651" cy="136" rx="9" ry="6" fill="#e4581f" opacity=".5"/></svg></div>
<div class="a" style="left:326.46px;top:674px;width:0.8px;height:9.5px;background:#3a3a3a;"></div>
<div class="cc" style="left:327.19px"><i class="n1"></i><i class="n2"></i><svg style="left:0px;top:5.5px" width="26.1" height="16" viewBox="350 52 567 343" preserveAspectRatio="none"><ellipse cx="643.5" cy="100.5" rx="27" ry="12" transform="rotate(-8 643.5 100.5)" fill="#dcc257"/><path d="M593 270L580 278L571 290L575 304L583 287L597 279z" fill="#8d5a2a"/><path d="M613 117L604 143L588 171L604 163L620 154L629 143L640 112z" fill="#4a2f18"/><path d="M603 279L627 268L632 294L637 323L646 342L656 355L644 363L630 358L618 342L609 313z" fill="#99632f"/><path d="M582 253L616 243L631 255L637 264L627 270L601 280L592 268z" fill="#ef8560"/><path d="M622 154L587 175L564 200L554 234L573 255L615 243L630 256L633 221L664 207L655 179L651 167z" fill="#c4c04f"/><path d="M586 176L600 166L623 190L642 187L656 178L664 207L648 217L642 199L611 216L599 200z" fill="#d3e8d6"/><path d="M600 227L633 218L630 256L614 242L600 243z" fill="#d3e8d6"/><path d="M577 214L599 206L588 248L575 245z" fill="#a4562a"/><path d="M645 219L663 211L686 213L698 218L700 226L696 231L693 223L672 225L663 231z" fill="#b67a3c"/><path d="M636 114L673 110L678 123L676 135L671 146L664 158L651 155L638 145L626 130z" fill="#bf8241"/><path d="M673 109L684 113L685 140L671 179L676 150L680 128z" fill="#4a2f18"/><ellipse cx="645.6" cy="115" rx="81" ry="19" transform="rotate(-8.3 645.6 115)" fill="#cfa233"/><path d="M611 126C616 112 640 106 656 107L686 112L684 128L676 135L671 146L664 158L651 155L638 145L628 147L604 160z" fill="#bf8241"/><path d="M611 126C616 112 640 106 660 107L645 118L636 128L630 124L623 132L624 146L604 163L604 143z" fill="#4a2f18"/><path d="M673 108L686 112L685 140L671 179L676 150L680 128z" fill="#4a2f18"/><ellipse cx="651" cy="136" rx="9" ry="6" fill="#e4581f" opacity=".5"/></svg></div>
<div class="a" style="left:353.49px;top:674px;width:0.8px;height:9.5px;background:#3a3a3a;"></div>
<div class="cc" style="left:354.22px"><i class="n1"></i><i class="n2"></i><svg style="left:0px;top:5.5px" width="26.1" height="16" viewBox="350 52 567 343" preserveAspectRatio="none"><ellipse cx="643.5" cy="100.5" rx="27" ry="12" transform="rotate(-8 643.5 100.5)" fill="#dcc257"/><path d="M593 270L580 278L571 290L575 304L583 287L597 279z" fill="#8d5a2a"/><path d="M613 117L604 143L588 171L604 163L620 154L629 143L640 112z" fill="#4a2f18"/><path d="M603 279L627 268L632 294L637 323L646 342L656 355L644 363L630 358L618 342L609 313z" fill="#99632f"/><path d="M582 253L616 243L631 255L637 264L627 270L601 280L592 268z" fill="#ef8560"/><path d="M622 154L587 175L564 200L554 234L573 255L615 243L630 256L633 221L664 207L655 179L651 167z" fill="#c4c04f"/><path d="M586 176L600 166L623 190L642 187L656 178L664 207L648 217L642 199L611 216L599 200z" fill="#d3e8d6"/><path d="M600 227L633 218L630 256L614 242L600 243z" fill="#d3e8d6"/><path d="M577 214L599 206L588 248L575 245z" fill="#a4562a"/><path d="M645 219L663 211L686 213L698 218L700 226L696 231L693 223L672 225L663 231z" fill="#b67a3c"/><path d="M636 114L673 110L678 123L676 135L671 146L664 158L651 155L638 145L626 130z" fill="#bf8241"/><path d="M673 109L684 113L685 140L671 179L676 150L680 128z" fill="#4a2f18"/><ellipse cx="645.6" cy="115" rx="81" ry="19" transform="rotate(-8.3 645.6 115)" fill="#cfa233"/><path d="M611 126C616 112 640 106 656 107L686 112L684 128L676 135L671 146L664 158L651 155L638 145L628 147L604 160z" fill="#bf8241"/><path d="M611 126C616 112 640 106 660 107L645 118L636 128L630 124L623 132L624 146L604 163L604 143z" fill="#4a2f18"/><path d="M673 108L686 112L685 140L671 179L676 150L680 128z" fill="#4a2f18"/><ellipse cx="651" cy="136" rx="9" ry="6" fill="#e4581f" opacity=".5"/></svg></div>
<div class="a" style="left:380.52px;top:674px;width:0.8px;height:9.5px;background:#3a3a3a;"></div>
<div class="cc" style="left:381.25px"><i class="n1"></i><i class="n2"></i><svg style="left:0px;top:5.5px" width="26.1" height="16" viewBox="350 52 567 343" preserveAspectRatio="none"><ellipse cx="643.5" cy="100.5" rx="27" ry="12" transform="rotate(-8 643.5 100.5)" fill="#dcc257"/><path d="M593 270L580 278L571 290L575 304L583 287L597 279z" fill="#8d5a2a"/><path d="M613 117L604 143L588 171L604 163L620 154L629 143L640 112z" fill="#4a2f18"/><path d="M603 279L627 268L632 294L637 323L646 342L656 355L644 363L630 358L618 342L609 313z" fill="#99632f"/><path d="M582 253L616 243L631 255L637 264L627 270L601 280L592 268z" fill="#ef8560"/><path d="M622 154L587 175L564 200L554 234L573 255L615 243L630 256L633 221L664 207L655 179L651 167z" fill="#c4c04f"/><path d="M586 176L600 166L623 190L642 187L656 178L664 207L648 217L642 199L611 216L599 200z" fill="#d3e8d6"/><path d="M600 227L633 218L630 256L614 242L600 243z" fill="#d3e8d6"/><path d="M577 214L599 206L588 248L575 245z" fill="#a4562a"/><path d="M645 219L663 211L686 213L698 218L700 226L696 231L693 223L672 225L663 231z" fill="#b67a3c"/><path d="M636 114L673 110L678 123L676 135L671 146L664 158L651 155L638 145L626 130z" fill="#bf8241"/><path d="M673 109L684 113L685 140L671 179L676 150L680 128z" fill="#4a2f18"/><ellipse cx="645.6" cy="115" rx="81" ry="19" transform="rotate(-8.3 645.6 115)" fill="#cfa233"/><path d="M611 126C616 112 640 106 656 107L686 112L684 128L676 135L671 146L664 158L651 155L638 145L628 147L604 160z" fill="#bf8241"/><path d="M611 126C616 112 640 106 660 107L645 118L636 128L630 124L623 132L624 146L604 163L604 143z" fill="#4a2f18"/><path d="M673 108L686 112L685 140L671 179L676 150L680 128z" fill="#4a2f18"/><ellipse cx="651" cy="136" rx="9" ry="6" fill="#e4581f" opacity=".5"/></svg></div>
<div class="a" style="left:407.55px;top:674px;width:0.8px;height:9.5px;background:#3a3a3a;"></div>
<div class="cc" style="left:408.28px"><i class="n1"></i><i class="n2"></i><svg style="left:0px;top:5.5px" width="26.1" height="16" viewBox="350 52 567 343" preserveAspectRatio="none"><ellipse cx="643.5" cy="100.5" rx="27" ry="12" transform="rotate(-8 643.5 100.5)" fill="#dcc257"/><path d="M593 270L580 278L571 290L575 304L583 287L597 279z" fill="#8d5a2a"/><path d="M613 117L604 143L588 171L604 163L620 154L629 143L640 112z" fill="#4a2f18"/><path d="M603 279L627 268L632 294L637 323L646 342L656 355L644 363L630 358L618 342L609 313z" fill="#99632f"/><path d="M582 253L616 243L631 255L637 264L627 270L601 280L592 268z" fill="#ef8560"/><path d="M622 154L587 175L564 200L554 234L573 255L615 243L630 256L633 221L664 207L655 179L651 167z" fill="#c4c04f"/><path d="M586 176L600 166L623 190L642 187L656 178L664 207L648 217L642 199L611 216L599 200z" fill="#d3e8d6"/><path d="M600 227L633 218L630 256L614 242L600 243z" fill="#d3e8d6"/><path d="M577 214L599 206L588 248L575 245z" fill="#a4562a"/><path d="M645 219L663 211L686 213L698 218L700 226L696 231L693 223L672 225L663 231z" fill="#b67a3c"/><path d="M636 114L673 110L678 123L676 135L671 146L664 158L651 155L638 145L626 130z" fill="#bf8241"/><path d="M673 109L684 113L685 140L671 179L676 150L680 128z" fill="#4a2f18"/><ellipse cx="645.6" cy="115" rx="81" ry="19" transform="rotate(-8.3 645.6 115)" fill="#cfa233"/><path d="M611 126C616 112 640 106 656 107L686 112L684 128L676 135L671 146L664 158L651 155L638 145L628 147L604 160z" fill="#bf8241"/><path d="M611 126C616 112 640 106 660 107L645 118L636 128L630 124L623 132L624 146L604 163L604 143z" fill="#4a2f18"/><path d="M673 108L686 112L685 140L671 179L676 150L680 128z" fill="#4a2f18"/><ellipse cx="651" cy="136" rx="9" ry="6" fill="#e4581f" opacity=".5"/></svg></div>
<div class="a" style="left:434.58px;top:674px;width:0.8px;height:9.5px;background:#3a3a3a;"></div>
<div class="cc" style="left:435.31px"><i class="n1"></i><i class="n2"></i><svg style="left:0px;top:5.5px" width="26.1" height="16" viewBox="350 52 567 343" preserveAspectRatio="none"><ellipse cx="643.5" cy="100.5" rx="27" ry="12" transform="rotate(-8 643.5 100.5)" fill="#dcc257"/><path d="M593 270L580 278L571 290L575 304L583 287L597 279z" fill="#8d5a2a"/><path d="M613 117L604 143L588 171L604 163L620 154L629 143L640 112z" fill="#4a2f18"/><path d="M603 279L627 268L632 294L637 323L646 342L656 355L644 363L630 358L618 342L609 313z" fill="#99632f"/><path d="M582 253L616 243L631 255L637 264L627 270L601 280L592 268z" fill="#ef8560"/><path d="M622 154L587 175L564 200L554 234L573 255L615 243L630 256L633 221L664 207L655 179L651 167z" fill="#c4c04f"/><path d="M586 176L600 166L623 190L642 187L656 178L664 207L648 217L642 199L611 216L599 200z" fill="#d3e8d6"/><path d="M600 227L633 218L630 256L614 242L600 243z" fill="#d3e8d6"/><path d="M577 214L599 206L588 248L575 245z" fill="#a4562a"/><path d="M645 219L663 211L686 213L698 218L700 226L696 231L693 223L672 225L663 231z" fill="#b67a3c"/><path d="M636 114L673 110L678 123L676 135L671 146L664 158L651 155L638 145L626 130z" fill="#bf8241"/><path d="M673 109L684 113L685 140L671 179L676 150L680 128z" fill="#4a2f18"/><ellipse cx="645.6" cy="115" rx="81" ry="19" transform="rotate(-8.3 645.6 115)" fill="#cfa233"/><path d="M611 126C616 112 640 106 656 107L686 112L684 128L676 135L671 146L664 158L651 155L638 145L628 147L604 160z" fill="#bf8241"/><path d="M611 126C616 112 640 106 660 107L645 118L636 128L630 124L623 132L624 146L604 163L604 143z" fill="#4a2f18"/><path d="M673 108L686 112L685 140L671 179L676 150L680 128z" fill="#4a2f18"/><ellipse cx="651" cy="136" rx="9" ry="6" fill="#e4581f" opacity=".5"/></svg></div>
<div class="a" style="left:461.61px;top:674px;width:0.8px;height:9.5px;background:#3a3a3a;"></div>
<div class="cc" style="left:462.34px"><i class="n1"></i><i class="n2"></i><svg style="left:0px;top:5.5px" width="26.1" height="16" viewBox="350 52 567 343" preserveAspectRatio="none"><ellipse cx="643.5" cy="100.5" rx="27" ry="12" transform="rotate(-8 643.5 100.5)" fill="#dcc257"/><path d="M593 270L580 278L571 290L575 304L583 287L597 279z" fill="#8d5a2a"/><path d="M613 117L604 143L588 171L604 163L620 154L629 143L640 112z" fill="#4a2f18"/><path d="M603 279L627 268L632 294L637 323L646 342L656 355L644 363L630 358L618 342L609 313z" fill="#99632f"/><path d="M582 253L616 243L631 255L637 264L627 270L601 280L592 268z" fill="#ef8560"/><path d="M622 154L587 175L564 200L554 234L573 255L615 243L630 256L633 221L664 207L655 179L651 167z" fill="#c4c04f"/><path d="M586 176L600 166L623 190L642 187L656 178L664 207L648 217L642 199L611 216L599 200z" fill="#d3e8d6"/><path d="M600 227L633 218L630 256L614 242L600 243z" fill="#d3e8d6"/><path d="M577 214L599 206L588 248L575 245z" fill="#a4562a"/><path d="M645 219L663 211L686 213L698 218L700 226L696 231L693 223L672 225L663 231z" fill="#b67a3c"/><path d="M636 114L673 110L678 123L676 135L671 146L664 158L651 155L638 145L626 130z" fill="#bf8241"/><path d="M673 109L684 113L685 140L671 179L676 150L680 128z" fill="#4a2f18"/><ellipse cx="645.6" cy="115" rx="81" ry="19" transform="rotate(-8.3 645.6 115)" fill="#cfa233"/><path d="M611 126C616 112 640 106 656 107L686 112L684 128L676 135L671 146L664 158L651 155L638 145L628 147L604 160z" fill="#bf8241"/><path d="M611 126C616 112 640 106 660 107L645 118L636 128L630 124L623 132L624 146L604 163L604 143z" fill="#4a2f18"/><path d="M673 108L686 112L685 140L671 179L676 150L680 128z" fill="#4a2f18"/><ellipse cx="651" cy="136" rx="9" ry="6" fill="#e4581f" opacity=".5"/></svg></div>
<div class="a" style="left:488.64px;top:674px;width:0.8px;height:9.5px;background:#3a3a3a;"></div>
<div class="cc" style="left:489.37px"><i class="n1"></i><i class="n2"></i><svg style="left:0px;top:5.5px" width="26.1" height="16" viewBox="350 52 567 343" preserveAspectRatio="none"><ellipse cx="643.5" cy="100.5" rx="27" ry="12" transform="rotate(-8 643.5 100.5)" fill="#dcc257"/><path d="M593 270L580 278L571 290L575 304L583 287L597 279z" fill="#8d5a2a"/><path d="M613 117L604 143L588 171L604 163L620 154L629 143L640 112z" fill="#4a2f18"/><path d="M603 279L627 268L632 294L637 323L646 342L656 355L644 363L630 358L618 342L609 313z" fill="#99632f"/><path d="M582 253L616 243L631 255L637 264L627 270L601 280L592 268z" fill="#ef8560"/><path d="M622 154L587 175L564 200L554 234L573 255L615 243L630 256L633 221L664 207L655 179L651 167z" fill="#c4c04f"/><path d="M586 176L600 166L623 190L642 187L656 178L664 207L648 217L642 199L611 216L599 200z" fill="#d3e8d6"/><path d="M600 227L633 218L630 256L614 242L600 243z" fill="#d3e8d6"/><path d="M577 214L599 206L588 248L575 245z" fill="#a4562a"/><path d="M645 219L663 211L686 213L698 218L700 226L696 231L693 223L672 225L663 231z" fill="#b67a3c"/><path d="M636 114L673 110L678 123L676 135L671 146L664 158L651 155L638 145L626 130z" fill="#bf8241"/><path d="M673 109L684 113L685 140L671 179L676 150L680 128z" fill="#4a2f18"/><ellipse cx="645.6" cy="115" rx="81" ry="19" transform="rotate(-8.3 645.6 115)" fill="#cfa233"/><path d="M611 126C616 112 640 106 656 107L686 112L684 128L676 135L671 146L664 158L651 155L638 145L628 147L604 160z" fill="#bf8241"/><path d="M611 126C616 112 640 106 660 107L645 118L636 128L630 124L623 132L624 146L604 163L604 143z" fill="#4a2f18"/><path d="M673 108L686 112L685 140L671 179L676 150L680 128z" fill="#4a2f18"/><ellipse cx="651" cy="136" rx="9" ry="6" fill="#e4581f" opacity=".5"/></svg></div>
<div class="a" style="left:515.67px;top:674px;width:0.8px;height:9.5px;background:#3a3a3a;"></div>
<div class="cc" style="left:516.40px"><i class="n1"></i><i class="n2"></i><svg style="left:0px;top:5.5px" width="26.1" height="16" viewBox="350 52 567 343" preserveAspectRatio="none"><ellipse cx="643.5" cy="100.5" rx="27" ry="12" transform="rotate(-8 643.5 100.5)" fill="#dcc257"/><path d="M593 270L580 278L571 290L575 304L583 287L597 279z" fill="#8d5a2a"/><path d="M613 117L604 143L588 171L604 163L620 154L629 143L640 112z" fill="#4a2f18"/><path d="M603 279L627 268L632 294L637 323L646 342L656 355L644 363L630 358L618 342L609 313z" fill="#99632f"/><path d="M582 253L616 243L631 255L637 264L627 270L601 280L592 268z" fill="#ef8560"/><path d="M622 154L587 175L564 200L554 234L573 255L615 243L630 256L633 221L664 207L655 179L651 167z" fill="#c4c04f"/><path d="M586 176L600 166L623 190L642 187L656 178L664 207L648 217L642 199L611 216L599 200z" fill="#d3e8d6"/><path d="M600 227L633 218L630 256L614 242L600 243z" fill="#d3e8d6"/><path d="M577 214L599 206L588 248L575 245z" fill="#a4562a"/><path d="M645 219L663 211L686 213L698 218L700 226L696 231L693 223L672 225L663 231z" fill="#b67a3c"/><path d="M636 114L673 110L678 123L676 135L671 146L664 158L651 155L638 145L626 130z" fill="#bf8241"/><path d="M673 109L684 113L685 140L671 179L676 150L680 128z" fill="#4a2f18"/><ellipse cx="645.6" cy="115" rx="81" ry="19" transform="rotate(-8.3 645.6 115)" fill="#cfa233"/><path d="M611 126C616 112 640 106 656 107L686 112L684 128L676 135L671 146L664 158L651 155L638 145L628 147L604 160z" fill="#bf8241"/><path d="M611 126C616 112 640 106 660 107L645 118L636 128L630 124L623 132L624 146L604 163L604 143z" fill="#4a2f18"/><path d="M673 108L686 112L685 140L671 179L676 150L680 128z" fill="#4a2f18"/><ellipse cx="651" cy="136" rx="9" ry="6" fill="#e4581f" opacity=".5"/></svg></div>
<div class="a" style="left:542.7px;top:674px;width:0.8px;height:9.5px;background:#3a3a3a;"></div>
<div class="cc" style="left:543.43px"><i class="n1"></i><i class="n2"></i><svg style="left:0px;top:5.5px" width="26.1" height="16" viewBox="350 52 567 343" preserveAspectRatio="none"><ellipse cx="643.5" cy="100.5" rx="27" ry="12" transform="rotate(-8 643.5 100.5)" fill="#dcc257"/><path d="M593 270L580 278L571 290L575 304L583 287L597 279z" fill="#8d5a2a"/><path d="M613 117L604 143L588 171L604 163L620 154L629 143L640 112z" fill="#4a2f18"/><path d="M603 279L627 268L632 294L637 323L646 342L656 355L644 363L630 358L618 342L609 313z" fill="#99632f"/><path d="M582 253L616 243L631 255L637 264L627 270L601 280L592 268z" fill="#ef8560"/><path d="M622 154L587 175L564 200L554 234L573 255L615 243L630 256L633 221L664 207L655 179L651 167z" fill="#c4c04f"/><path d="M586 176L600 166L623 190L642 187L656 178L664 207L648 217L642 199L611 216L599 200z" fill="#d3e8d6"/><path d="M600 227L633 218L630 256L614 242L600 243z" fill="#d3e8d6"/><path d="M577 214L599 206L588 248L575 245z" fill="#a4562a"/><path d="M645 219L663 211L686 213L698 218L700 226L696 231L693 223L672 225L663 231z" fill="#b67a3c"/><path d="M636 114L673 110L678 123L676 135L671 146L664 158L651 155L638 145L626 130z" fill="#bf8241"/><path d="M673 109L684 113L685 140L671 179L676 150L680 128z" fill="#4a2f18"/><ellipse cx="645.6" cy="115" rx="81" ry="19" transform="rotate(-8.3 645.6 115)" fill="#cfa233"/><path d="M611 126C616 112 640 106 656 107L686 112L684 128L676 135L671 146L664 158L651 155L638 145L628 147L604 160z" fill="#bf8241"/><path d="M611 126C616 112 640 106 660 107L645 118L636 128L630 124L623 132L624 146L604 163L604 143z" fill="#4a2f18"/><path d="M673 108L686 112L685 140L671 179L676 150L680 128z" fill="#4a2f18"/><ellipse cx="651" cy="136" rx="9" ry="6" fill="#e4581f" opacity=".5"/></svg></div>
<div class="a" style="left:569.73px;top:674px;width:0.8px;height:9.5px;background:#3a3a3a;"></div>
<div class="cc" style="left:570.46px"><i class="n1"></i><i class="n2"></i><svg style="left:0px;top:5.5px" width="26.1" height="16" viewBox="350 52 567 343" preserveAspectRatio="none"><ellipse cx="643.5" cy="100.5" rx="27" ry="12" transform="rotate(-8 643.5 100.5)" fill="#dcc257"/><path d="M593 270L580 278L571 290L575 304L583 287L597 279z" fill="#8d5a2a"/><path d="M613 117L604 143L588 171L604 163L620 154L629 143L640 112z" fill="#4a2f18"/><path d="M603 279L627 268L632 294L637 323L646 342L656 355L644 363L630 358L618 342L609 313z" fill="#99632f"/><path d="M582 253L616 243L631 255L637 264L627 270L601 280L592 268z" fill="#ef8560"/><path d="M622 154L587 175L564 200L554 234L573 255L615 243L630 256L633 221L664 207L655 179L651 167z" fill="#c4c04f"/><path d="M586 176L600 166L623 190L642 187L656 178L664 207L648 217L642 199L611 216L599 200z" fill="#d3e8d6"/><path d="M600 227L633 218L630 256L614 242L600 243z" fill="#d3e8d6"/><path d="M577 214L599 206L588 248L575 245z" fill="#a4562a"/><path d="M645 219L663 211L686 213L698 218L700 226L696 231L693 223L672 225L663 231z" fill="#b67a3c"/><path d="M636 114L673 110L678 123L676 135L671 146L664 158L651 155L638 145L626 130z" fill="#bf8241"/><path d="M673 109L684 113L685 140L671 179L676 150L680 128z" fill="#4a2f18"/><ellipse cx="645.6" cy="115" rx="81" ry="19" transform="rotate(-8.3 645.6 115)" fill="#cfa233"/><path d="M611 126C616 112 640 106 656 107L686 112L684 128L676 135L671 146L664 158L651 155L638 145L628 147L604 160z" fill="#bf8241"/><path d="M611 126C616 112 640 106 660 107L645 118L636 128L630 124L623 132L624 146L604 163L604 143z" fill="#4a2f18"/><path d="M673 108L686 112L685 140L671 179L676 150L680 128z" fill="#4a2f18"/><ellipse cx="651" cy="136" rx="9" ry="6" fill="#e4581f" opacity=".5"/></svg></div>
<div class="a" style="left:596.76px;top:674px;width:0.8px;height:9.5px;background:#3a3a3a;"></div>
<div class="cc" style="left:597.49px"><i class="n1"></i><i class="n2"></i><svg style="left:0px;top:5.5px" width="26.1" height="16" viewBox="350 52 567 343" preserveAspectRatio="none"><ellipse cx="643.5" cy="100.5" rx="27" ry="12" transform="rotate(-8 643.5 100.5)" fill="#dcc257"/><path d="M593 270L580 278L571 290L575 304L583 287L597 279z" fill="#8d5a2a"/><path d="M613 117L604 143L588 171L604 163L620 154L629 143L640 112z" fill="#4a2f18"/><path d="M603 279L627 268L632 294L637 323L646 342L656 355L644 363L630 358L618 342L609 313z" fill="#99632f"/><path d="M582 253L616 243L631 255L637 264L627 270L601 280L592 268z" fill="#ef8560"/><path d="M622 154L587 175L564 200L554 234L573 255L615 243L630 256L633 221L664 207L655 179L651 167z" fill="#c4c04f"/><path d="M586 176L600 166L623 190L642 187L656 178L664 207L648 217L642 199L611 216L599 200z" fill="#d3e8d6"/><path d="M600 227L633 218L630 256L614 242L600 243z" fill="#d3e8d6"/><path d="M577 214L599 206L588 248L575 245z" fill="#a4562a"/><path d="M645 219L663 211L686 213L698 218L700 226L696 231L693 223L672 225L663 231z" fill="#b67a3c"/><path d="M636 114L673 110L678 123L676 135L671 146L664 158L651 155L638 145L626 130z" fill="#bf8241"/><path d="M673 109L684 113L685 140L671 179L676 150L680 128z" fill="#4a2f18"/><ellipse cx="645.6" cy="115" rx="81" ry="19" transform="rotate(-8.3 645.6 115)" fill="#cfa233"/><path d="M611 126C616 112 640 106 656 107L686 112L684 128L676 135L671 146L664 158L651 155L638 145L628 147L604 160z" fill="#bf8241"/><path d="M611 126C616 112 640 106 660 107L645 118L636 128L630 124L623 132L624 146L604 163L604 143z" fill="#4a2f18"/><path d="M673 108L686 112L685 140L671 179L676 150L680 128z" fill="#4a2f18"/><ellipse cx="651" cy="136" rx="9" ry="6" fill="#e4581f" opacity=".5"/></svg></div>
<div class="a" style="left:623.79px;top:674px;width:0.8px;height:9.5px;background:#3a3a3a;"></div>
<div class="cc" style="left:624.52px"><i class="n1"></i><i class="n2"></i><svg style="left:0px;top:5.5px" width="26.1" height="16" viewBox="350 52 567 343" preserveAspectRatio="none"><ellipse cx="643.5" cy="100.5" rx="27" ry="12" transform="rotate(-8 643.5 100.5)" fill="#dcc257"/><path d="M593 270L580 278L571 290L575 304L583 287L597 279z" fill="#8d5a2a"/><path d="M613 117L604 143L588 171L604 163L620 154L629 143L640 112z" fill="#4a2f18"/><path d="M603 279L627 268L632 294L637 323L646 342L656 355L644 363L630 358L618 342L609 313z" fill="#99632f"/><path d="M582 253L616 243L631 255L637 264L627 270L601 280L592 268z" fill="#ef8560"/><path d="M622 154L587 175L564 200L554 234L573 255L615 243L630 256L633 221L664 207L655 179L651 167z" fill="#c4c04f"/><path d="M586 176L600 166L623 190L642 187L656 178L664 207L648 217L642 199L611 216L599 200z" fill="#d3e8d6"/><path d="M600 227L633 218L630 256L614 242L600 243z" fill="#d3e8d6"/><path d="M577 214L599 206L588 248L575 245z" fill="#a4562a"/><path d="M645 219L663 211L686 213L698 218L700 226L696 231L693 223L672 225L663 231z" fill="#b67a3c"/><path d="M636 114L673 110L678 123L676 135L671 146L664 158L651 155L638 145L626 130z" fill="#bf8241"/><path d="M673 109L684 113L685 140L671 179L676 150L680 128z" fill="#4a2f18"/><ellipse cx="645.6" cy="115" rx="81" ry="19" transform="rotate(-8.3 645.6 115)" fill="#cfa233"/><path d="M611 126C616 112 640 106 656 107L686 112L684 128L676 135L671 146L664 158L651 155L638 145L628 147L604 160z" fill="#bf8241"/><path d="M611 126C616 112 640 106 660 107L645 118L636 128L630 124L623 132L624 146L604 163L604 143z" fill="#4a2f18"/><path d="M673 108L686 112L685 140L671 179L676 150L680 128z" fill="#4a2f18"/><ellipse cx="651" cy="136" rx="9" ry="6" fill="#e4581f" opacity=".5"/></svg></div>
<div class="a" style="left:650.82px;top:674px;width:0.8px;height:9.5px;background:#3a3a3a;"></div>
<div class="a" style="left:218.37px;top:484.5px;width:27.53px;height:198.3px;background:rgba(0,228,0,.28);"></div>
<div class="a" style="left:624.02px;top:484.5px;width:27.330000000000002px;height:198.3px;background:rgba(255,0,0,.28);"></div>
<div class="a" style="left:218.76999999999998px;top:482px;width:26.6px;height:2.5px;background:#00f400;"></div>
<div class="a" style="left:624.22px;top:482px;width:26.6px;height:2.5px;background:#f40000;"></div>
<div class="a" style="left:569.7px;top:465px;width:1px;height:232px;background:#c01818;"></div>
<div class="a" style="left:596.9px;top:465px;width:1px;height:232px;background:#c01818;"></div>
<div class="a" style="left:195px;top:683.5px;width:1085px;height:13.5px;background:#3a3a3a;"></div>
<div class="a" style="left:570.1600000000001px;top:683.5px;width:27.03px;height:13px;background:#3f5a5d;"></div><div class="t" style="left:220.9px;top:685.3px;color:#c6c6c6;font-size:8.35px;">1</div><div class="t" style="left:274.9px;top:685.3px;color:#c6c6c6;font-size:8.35px;">3</div><div class="t" style="left:329.0px;top:685.3px;color:#c6c6c6;font-size:8.35px;">5</div><div class="t" style="left:383.1px;top:685.3px;color:#c6c6c6;font-size:8.35px;">7</div><div class="t" style="left:437.1px;top:685.3px;color:#c6c6c6;font-size:8.35px;">9</div><div class="t" style="left:491.2px;top:685.3px;color:#c6c6c6;font-size:8.35px;">11</div><div class="t" style="left:545.2px;top:685.3px;color:#c6c6c6;font-size:8.35px;">13</div><div class="t" style="left:599.3px;top:685.3px;color:#c6c6c6;font-size:8.35px;">15</div><div class="t" style="left:572.3px;top:685.3px;color:#c6c6c6;font-size:8.35px;">14</div><div class="t" style="left:653.3px;top:685.3px;color:#c6c6c6;font-size:8.35px;">17</div><div class="t" style="left:707.4px;top:685.3px;color:#c6c6c6;font-size:8.35px;">19</div><div class="t" style="left:761.5px;top:685.3px;color:#c6c6c6;font-size:8.35px;">21</div><div class="t" style="left:815.5px;top:685.3px;color:#c6c6c6;font-size:8.35px;">23</div><div class="t" style="left:869.6px;top:685.3px;color:#c6c6c6;font-size:8.35px;">25</div><div class="t" style="left:923.6px;top:685.3px;color:#c6c6c6;font-size:8.35px;">27</div><div class="t" style="left:977.7px;top:685.3px;color:#c6c6c6;font-size:8.35px;">29</div><div class="t" style="left:1031.8px;top:685.3px;color:#c6c6c6;font-size:8.35px;">31</div><div class="t" style="left:1085.8px;top:685.3px;color:#c6c6c6;font-size:8.35px;">33</div><div class="t" style="left:1139.9px;top:685.3px;color:#c6c6c6;font-size:8.35px;">35</div><div class="t" style="left:1194.0px;top:685.3px;color:#c6c6c6;font-size:8.35px;">37</div><div class="t" style="left:1248.0px;top:685.3px;color:#c6c6c6;font-size:8.35px;">39</div>
<div class="a" style="left:218.76999999999998px;top:693.2px;width:26.6px;height:2.8px;background:#00f400;"></div>
<div class="a" style="left:624.22px;top:693.2px;width:26.6px;height:2.8px;background:#f40000;"></div>
<div class="a" style="left:569.7px;top:683px;width:1px;height:14px;background:#c01818;"></div>
<div class="a" style="left:596.9px;top:683px;width:1px;height:14px;background:#c01818;"></div>
<div class="a" style="left:-10px;top:684px;width:64px;height:13px;background:#585858;"></div>
<div class="t" style="left:-10px;top:685px;color:#b4b4b4;font-size:8.35px;width:64px;text-align:center">Notes</div>
<div class="a" style="left:56px;top:684px;width:62.5px;height:13px;background:#585858;"></div>
<div class="t" style="left:56px;top:685px;color:#b4b4b4;font-size:8.35px;width:62.5px;text-align:center">Sound</div>
<div class="a" style="left:120px;top:684px;width:63.5px;height:13px;background:#585858;"></div>
<div class="t" style="left:120px;top:685px;color:#b4b4b4;font-size:8.35px;width:63.5px;text-align:center">Color Group</div>
<svg style="left:186.5px;top:688px" width="7" height="5" viewBox="0 0 7 5"><path d="M0 2.500l3-2.300v4.600zM7 2.500l-3-2.300v4.600z" fill="#2e2e2e"/></svg>
<div class="a" style="left:0px;top:697px;width:1280px;height:1px;background:#3a3a3a;"></div>
<div class="a" style="left:0px;top:698px;width:84.5px;height:12px;background:#585858;"></div>
<div class="t" style="left:-1px;top:699px;color:#c4c4c4;">ackground</div>
<div class="a" style="left:86.5px;top:698px;width:95.5px;height:12px;background:#585858;"></div>
<div class="t" style="left:90px;top:699px;color:#c4c4c4;">Start Frame</div>
<svg style="left:72.5px;top:700px" width="10" height="9" viewBox="0 0 10 9"><path d="M0 1h6.500M0 3.500h6.500M0 6h4" stroke="#8a8a8a" stroke-width="1"/><path d="M5.500 6h4l-2 2.500z" fill="#8a8a8a"/></svg>
<svg style="left:168.5px;top:700px" width="10" height="9" viewBox="0 0 10 9"><path d="M0 1h6.500M0 3.500h6.500M0 6h4" stroke="#8a8a8a" stroke-width="1"/><path d="M5.500 6h4l-2 2.500z" fill="#8a8a8a"/></svg>
<div class="a" style="left:183px;top:698px;width:12.5px;height:12px;background:#4c4c4c;"></div>
<svg style="left:185px;top:700px" width="8" height="8" viewBox="0 0 8 8"><circle cx="4" cy="4.300" r="3.200" fill="none" stroke="#d0d0d0" stroke-width="1"/><path d="M4 0v4" stroke="#4c4c4c" stroke-width="2.400"/><path d="M4 .3v3.700" stroke="#d0d0d0" stroke-width="1"/></svg>
<div class="a" style="left:196px;top:698px;width:1084px;height:12px;background:#5a5a5a;"></div>
<svg style="left:740px;top:701px" width="6" height="6" viewBox="0 0 6 6"><path d="M.5 0v6M3 0v6M5.500 0v6" stroke="#484848" stroke-width=".8"/></svg>
<div class="a" style="left:0px;top:710px;width:1280px;height:10px;background:#3b3b3b;"></div>
<div class="a" style="left:0px;top:712.5px;width:60px;height:8px;background:#454545;"></div>
<div class="t" style="left:0px;top:714.5px;color:#a8a8a8;font-size:8.35px;width:60px;text-align:center">X:2014 Y:-185</div>
<div class="a" style="left:62.5px;top:712.5px;width:98.5px;height:8px;background:#454545;"></div>
<div class="t" style="left:62.5px;top:714.5px;color:#a8a8a8;font-size:8.35px;width:98.5px;text-align:center">R:000 G:000 B:000 A:000</div>
<div class="a" style="left:163px;top:712.5px;width:62px;height:8px;background:#454545;"></div>
<div class="t" style="left:163px;top:714.5px;color:#a8a8a8;font-size:8.35px;width:62px;text-align:center">Color</div>
<div class="a" style="left:227px;top:712.5px;width:115px;height:8px;background:#454545;"></div>
<div class="t" style="left:227px;top:714.5px;color:#a8a8a8;font-size:8.35px;width:115px;text-align:center">Proxy: 0%</div>
<div class="a" style="left:1222px;top:712.5px;width:58px;height:8px;background:#454545;"></div>
<svg style="left:1228px;top:714px" width="8" height="8" viewBox="0 0 8 8"><circle cx="3.500" cy="3.500" r="2.800" fill="none" stroke="#aaa" stroke-width="1"/><path d="M5.500 5.500l2 2" stroke="#aaa" stroke-width="1"/></svg>
<div class="t" style="left:1246px;top:714.5px;color:#a8a8a8;">Room 1</div>
</body></html>
